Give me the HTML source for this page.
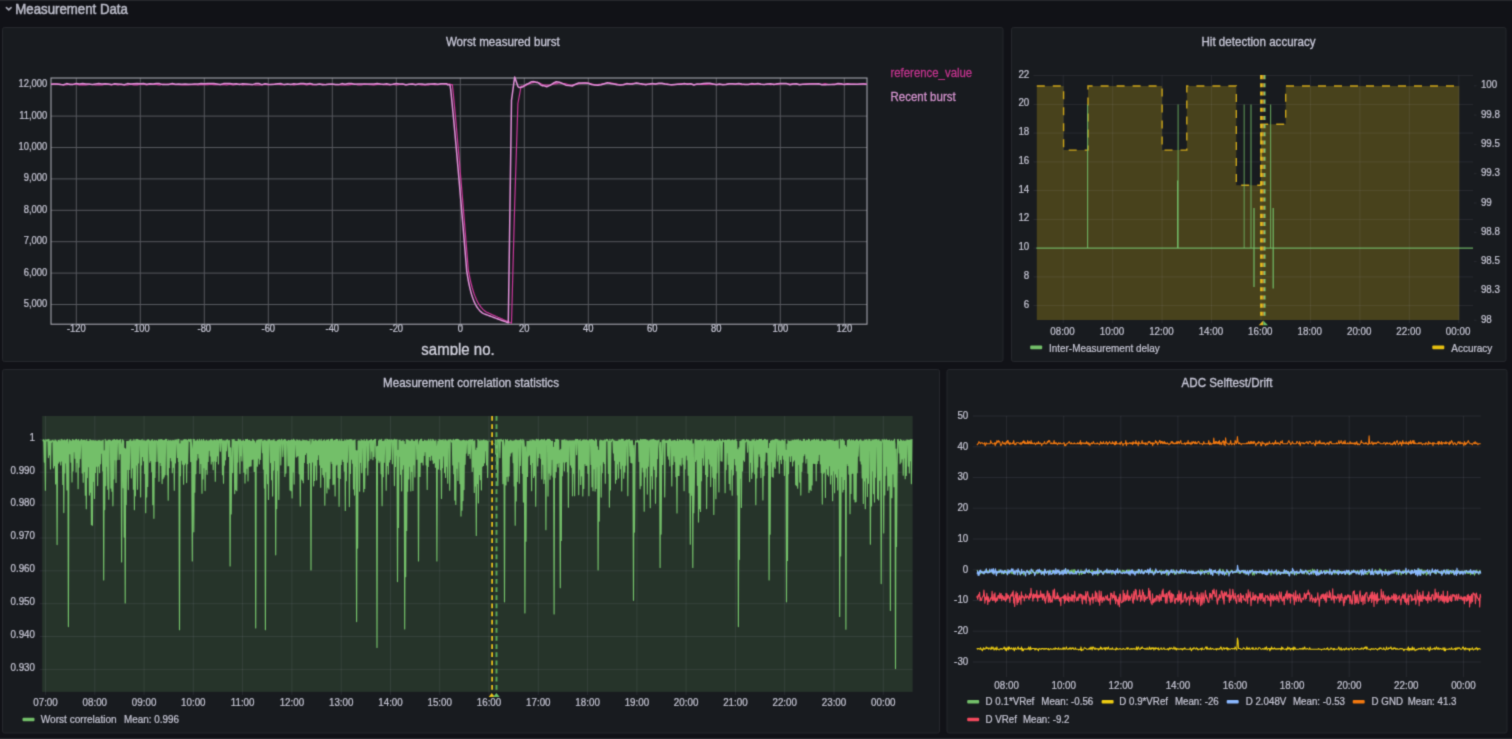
<!DOCTYPE html>
<html lang="en"><head><meta charset="utf-8"><title>Measurement Data</title>
<style>
html,body{margin:0;padding:0;background:#111217;overflow:hidden}
body{width:1512px;height:739px;font-family:"Liberation Sans", Arial, sans-serif}
svg{display:block;will-change:transform}
text{white-space:pre}
</style></head><body>
<svg width="1512" height="739" viewBox="0 0 1512 739" font-family='"Liberation Sans", Arial, sans-serif'>
<defs><filter id="soft" x="0" y="0" width="1512" height="739" filterUnits="userSpaceOnUse" color-interpolation-filters="sRGB"><feConvolveMatrix order="3" kernelMatrix="0.0256 0.1088 0.0256 0.1088 0.4624 0.1088 0.0256 0.1088 0.0256" divisor="1" edgeMode="duplicate" preserveAlpha="true"/></filter></defs>
<g filter="url(#soft)">
<rect width="1512" height="739" fill="#111217"/>
<rect x="0" y="738" width="1512" height="1" fill="#2a2c31"/>
<rect x="0" y="0" width="1512" height="1" fill="#26282d"/>
<path d="M6.4 7.6 L8.75 9.9 L11.1 7.6" fill="none" stroke="#a9aab6" stroke-width="1.6" stroke-linecap="round" stroke-linejoin="round"/>
<text transform="translate(15.3 13.9) scale(1 1.06)" font-size="13.25" text-anchor="start" fill="#bbbcc9" font-weight="normal" stroke="#bbbcc9" stroke-width="0.5">Measurement Data</text>
<rect x="2.5" y="27.5" width="1000.5" height="334" rx="2" fill="#181b1f" stroke="#25272c" stroke-width="1"/>
<rect x="1011.5" y="27.5" width="494.5" height="334" rx="2" fill="#181b1f" stroke="#25272c" stroke-width="1"/>
<rect x="2.5" y="369.5" width="937" height="363.5" rx="2" fill="#181b1f" stroke="#25272c" stroke-width="1"/>
<rect x="947" y="369.5" width="560" height="363.5" rx="2" fill="#181b1f" stroke="#25272c" stroke-width="1"/>
<text transform="translate(502.8 45.5) scale(1 1.09)" font-size="11.6" text-anchor="middle" fill="#c8c8d8" font-weight="normal" stroke="#c8c8d8" stroke-width="0.3">Worst measured burst</text>
<text transform="translate(1258.5 45.5) scale(1 1.09)" font-size="11.6" text-anchor="middle" fill="#c8c8d8" font-weight="normal" stroke="#c8c8d8" stroke-width="0.3">Hit detection accuracy</text>
<text transform="translate(471 386.5) scale(1 1.09)" font-size="11.6" text-anchor="middle" fill="#c8c8d8" font-weight="normal" stroke="#c8c8d8" stroke-width="0.3">Measurement correlation statistics</text>
<text transform="translate(1227 386.5) scale(1 1.09)" font-size="11.6" text-anchor="middle" fill="#c8c8d8" font-weight="normal" stroke="#c8c8d8" stroke-width="0.3">ADC Selftest/Drift</text>
<line x1="76.3" y1="78" x2="76.3" y2="324.2" stroke="#55575d" stroke-width="1"/>
<line x1="140.3" y1="78" x2="140.3" y2="324.2" stroke="#55575d" stroke-width="1"/>
<line x1="204.3" y1="78" x2="204.3" y2="324.2" stroke="#55575d" stroke-width="1"/>
<line x1="268.3" y1="78" x2="268.3" y2="324.2" stroke="#55575d" stroke-width="1"/>
<line x1="332.3" y1="78" x2="332.3" y2="324.2" stroke="#55575d" stroke-width="1"/>
<line x1="396.3" y1="78" x2="396.3" y2="324.2" stroke="#55575d" stroke-width="1"/>
<line x1="460.3" y1="78" x2="460.3" y2="324.2" stroke="#55575d" stroke-width="1"/>
<line x1="524.3" y1="78" x2="524.3" y2="324.2" stroke="#55575d" stroke-width="1"/>
<line x1="588.3" y1="78" x2="588.3" y2="324.2" stroke="#55575d" stroke-width="1"/>
<line x1="652.3" y1="78" x2="652.3" y2="324.2" stroke="#55575d" stroke-width="1"/>
<line x1="716.3" y1="78" x2="716.3" y2="324.2" stroke="#55575d" stroke-width="1"/>
<line x1="780.3" y1="78" x2="780.3" y2="324.2" stroke="#55575d" stroke-width="1"/>
<line x1="844.3" y1="78" x2="844.3" y2="324.2" stroke="#55575d" stroke-width="1"/>
<line x1="51" y1="304.5" x2="867" y2="304.5" stroke="#55575d" stroke-width="1"/>
<line x1="51" y1="273.1" x2="867" y2="273.1" stroke="#55575d" stroke-width="1"/>
<line x1="51" y1="241.7" x2="867" y2="241.7" stroke="#55575d" stroke-width="1"/>
<line x1="51" y1="210.3" x2="867" y2="210.3" stroke="#55575d" stroke-width="1"/>
<line x1="51" y1="178.9" x2="867" y2="178.9" stroke="#55575d" stroke-width="1"/>
<line x1="51" y1="147.5" x2="867" y2="147.5" stroke="#55575d" stroke-width="1"/>
<line x1="51" y1="116.1" x2="867" y2="116.1" stroke="#55575d" stroke-width="1"/>
<line x1="51" y1="84.7" x2="867" y2="84.7" stroke="#55575d" stroke-width="1"/>
<rect x="51" y="78" width="816" height="246.2" fill="none" stroke="#a2a3ab" stroke-width="1.1"/>
<text transform="translate(47.3 307) scale(1 1.09)" font-size="9.4" text-anchor="end" fill="#c4c4d2" font-weight="normal" stroke="#c4c4d2" stroke-width="0.22">5,000</text>
<text transform="translate(47.3 275.6) scale(1 1.09)" font-size="9.4" text-anchor="end" fill="#c4c4d2" font-weight="normal" stroke="#c4c4d2" stroke-width="0.22">6,000</text>
<text transform="translate(47.3 244.2) scale(1 1.09)" font-size="9.4" text-anchor="end" fill="#c4c4d2" font-weight="normal" stroke="#c4c4d2" stroke-width="0.22">7,000</text>
<text transform="translate(47.3 212.8) scale(1 1.09)" font-size="9.4" text-anchor="end" fill="#c4c4d2" font-weight="normal" stroke="#c4c4d2" stroke-width="0.22">8,000</text>
<text transform="translate(47.3 181.4) scale(1 1.09)" font-size="9.4" text-anchor="end" fill="#c4c4d2" font-weight="normal" stroke="#c4c4d2" stroke-width="0.22">9,000</text>
<text transform="translate(47.3 150) scale(1 1.09)" font-size="9.4" text-anchor="end" fill="#c4c4d2" font-weight="normal" stroke="#c4c4d2" stroke-width="0.22">10,000</text>
<text transform="translate(47.3 118.6) scale(1 1.09)" font-size="9.4" text-anchor="end" fill="#c4c4d2" font-weight="normal" stroke="#c4c4d2" stroke-width="0.22">11,000</text>
<text transform="translate(47.3 87.2) scale(1 1.09)" font-size="9.4" text-anchor="end" fill="#c4c4d2" font-weight="normal" stroke="#c4c4d2" stroke-width="0.22">12,000</text>
<text transform="translate(76.3 332.4) scale(1 1.09)" font-size="9.4" text-anchor="middle" fill="#c4c4d2" font-weight="normal" stroke="#c4c4d2" stroke-width="0.22">-120</text>
<line x1="76.3" y1="324.2" x2="76.3" y2="326.8" stroke="#8a8b93" stroke-width="1"/>
<text transform="translate(140.3 332.4) scale(1 1.09)" font-size="9.4" text-anchor="middle" fill="#c4c4d2" font-weight="normal" stroke="#c4c4d2" stroke-width="0.22">-100</text>
<line x1="140.3" y1="324.2" x2="140.3" y2="326.8" stroke="#8a8b93" stroke-width="1"/>
<text transform="translate(204.3 332.4) scale(1 1.09)" font-size="9.4" text-anchor="middle" fill="#c4c4d2" font-weight="normal" stroke="#c4c4d2" stroke-width="0.22">-80</text>
<line x1="204.3" y1="324.2" x2="204.3" y2="326.8" stroke="#8a8b93" stroke-width="1"/>
<text transform="translate(268.3 332.4) scale(1 1.09)" font-size="9.4" text-anchor="middle" fill="#c4c4d2" font-weight="normal" stroke="#c4c4d2" stroke-width="0.22">-60</text>
<line x1="268.3" y1="324.2" x2="268.3" y2="326.8" stroke="#8a8b93" stroke-width="1"/>
<text transform="translate(332.3 332.4) scale(1 1.09)" font-size="9.4" text-anchor="middle" fill="#c4c4d2" font-weight="normal" stroke="#c4c4d2" stroke-width="0.22">-40</text>
<line x1="332.3" y1="324.2" x2="332.3" y2="326.8" stroke="#8a8b93" stroke-width="1"/>
<text transform="translate(396.3 332.4) scale(1 1.09)" font-size="9.4" text-anchor="middle" fill="#c4c4d2" font-weight="normal" stroke="#c4c4d2" stroke-width="0.22">-20</text>
<line x1="396.3" y1="324.2" x2="396.3" y2="326.8" stroke="#8a8b93" stroke-width="1"/>
<text transform="translate(460.3 332.4) scale(1 1.09)" font-size="9.4" text-anchor="middle" fill="#c4c4d2" font-weight="normal" stroke="#c4c4d2" stroke-width="0.22">0</text>
<line x1="460.3" y1="324.2" x2="460.3" y2="326.8" stroke="#8a8b93" stroke-width="1"/>
<text transform="translate(524.3 332.4) scale(1 1.09)" font-size="9.4" text-anchor="middle" fill="#c4c4d2" font-weight="normal" stroke="#c4c4d2" stroke-width="0.22">20</text>
<line x1="524.3" y1="324.2" x2="524.3" y2="326.8" stroke="#8a8b93" stroke-width="1"/>
<text transform="translate(588.3 332.4) scale(1 1.09)" font-size="9.4" text-anchor="middle" fill="#c4c4d2" font-weight="normal" stroke="#c4c4d2" stroke-width="0.22">40</text>
<line x1="588.3" y1="324.2" x2="588.3" y2="326.8" stroke="#8a8b93" stroke-width="1"/>
<text transform="translate(652.3 332.4) scale(1 1.09)" font-size="9.4" text-anchor="middle" fill="#c4c4d2" font-weight="normal" stroke="#c4c4d2" stroke-width="0.22">60</text>
<line x1="652.3" y1="324.2" x2="652.3" y2="326.8" stroke="#8a8b93" stroke-width="1"/>
<text transform="translate(716.3 332.4) scale(1 1.09)" font-size="9.4" text-anchor="middle" fill="#c4c4d2" font-weight="normal" stroke="#c4c4d2" stroke-width="0.22">80</text>
<line x1="716.3" y1="324.2" x2="716.3" y2="326.8" stroke="#8a8b93" stroke-width="1"/>
<text transform="translate(780.3 332.4) scale(1 1.09)" font-size="9.4" text-anchor="middle" fill="#c4c4d2" font-weight="normal" stroke="#c4c4d2" stroke-width="0.22">100</text>
<line x1="780.3" y1="324.2" x2="780.3" y2="326.8" stroke="#8a8b93" stroke-width="1"/>
<text transform="translate(844.3 332.4) scale(1 1.09)" font-size="9.4" text-anchor="middle" fill="#c4c4d2" font-weight="normal" stroke="#c4c4d2" stroke-width="0.22">120</text>
<line x1="844.3" y1="324.2" x2="844.3" y2="326.8" stroke="#8a8b93" stroke-width="1"/>
<clipPath id="c1"><rect x="400" y="338" width="120" height="17.2"/></clipPath>
<g clip-path="url(#c1)">
<text transform="translate(458 355) scale(1 1.04)" font-size="15" text-anchor="middle" fill="#d2d2de" font-weight="normal" stroke="#d2d2de" stroke-width="0.3">sample no.</text>
</g>
<clipPath id="cp1"><rect x="51" y="76" width="816" height="248.2"/></clipPath>
<path d="M50.7 84.2 L53.9 84.1 L57.1 84.3 L60.3 84.1 L63.5 85 L66.7 84.6 L69.9 84.1 L73.1 84.4 L76.3 84.1 L79.5 84.9 L82.7 84.6 L85.9 84.8 L89.1 84.5 L92.3 84.5 L95.5 85 L98.7 84.8 L101.9 84.8 L105.1 84.1 L108.3 84.3 L111.5 84.9 L114.7 84.2 L117.9 84.9 L121.1 84.4 L124.3 84.9 L127.5 85 L130.7 84.2 L133.9 84.8 L137.1 84.8 L140.3 84.1 L143.5 84.2 L146.7 84.8 L149.9 84.1 L153.1 84.5 L156.3 84.4 L159.5 84.8 L162.7 84.1 L165.9 84.4 L169.1 84.1 L172.3 84.1 L175.5 84.7 L178.7 84.7 L181.9 84.9 L185.1 84.9 L188.3 85 L191.5 84.7 L194.7 84.4 L197.9 85 L201.1 84.4 L204.3 84.7 L207.5 84.7 L210.7 84.2 L213.9 84.6 L217.1 84.7 L220.3 84.6 L223.5 84.3 L226.7 85 L229.9 84.1 L233.1 85 L236.3 84.3 L239.5 84.2 L242.7 85 L245.9 84.3 L249.1 84.7 L252.3 84.5 L255.5 85 L258.7 85 L261.9 84.9 L265.1 84.1 L268.3 84.8 L271.5 84.3 L274.7 84.1 L277.9 84.1 L281.1 84.7 L284.3 84.7 L287.5 84.5 L290.7 84.3 L293.9 84.9 L297.1 84.3 L300.3 84.2 L303.5 84.2 L306.7 85 L309.9 84.1 L313.1 85 L316.3 84.7 L319.5 84.4 L322.7 84.1 L325.9 84.7 L329.1 84.1 L332.3 84.5 L335.5 84.7 L338.7 84.7 L341.9 84.9 L345.1 85 L348.3 84.9 L351.5 84.4 L354.7 84 L357.9 84.9 L361.1 85 L364.3 84.1 L367.5 84.5 L370.7 84.6 L373.9 84.8 L377.1 84.4 L380.3 84.2 L383.5 84.6 L386.7 84.6 L389.9 85 L393.1 84.1 L396.3 85 L399.5 84.5 L402.7 84.2 L405.9 84.9 L409.1 84.3 L412.3 84.1 L415.5 84.4 L418.7 84.3 L421.9 84.9 L425.1 84.6 L428.3 84.9 L431.5 84.2 L434.7 84.7 L437.9 84.6 L441.1 84 L441.9 84 L442.7 84 L443.5 84 L444.3 84.2 L445.1 84.2 L445.9 84.2 L446.7 84.2 L447.5 84.1 L448.3 84.1 L449.1 84.1 L449.9 84.1 L450.7 84.6 L451.5 84.6 L452.3 84.6 L453.1 91.8 L453.9 100 L454.7 108.4 L455.5 117.1 L456.3 126 L457.1 135 L457.9 144.2 L458.7 153.4 L459.5 162.8 L460.3 172.2 L461.1 181.7 L461.9 191.2 L462.7 200.9 L463.5 210.6 L464.3 220.3 L465.1 230.1 L465.9 240 L466.7 249.9 L467.5 259.8 L468.3 269.8 L469.1 274.2 L469.9 278.2 L470.7 281.8 L471.5 285 L472.3 288 L473.1 290.7 L473.9 293.2 L474.7 295.4 L475.5 297.4 L476.3 299.3 L477.1 301 L477.9 302.5 L478.7 303.9 L479.5 305.1 L480.3 306.2 L481.1 307.3 L481.9 308.2 L482.7 309.1 L483.5 309.9 L484.3 310.6 L485.1 311.2 L485.9 311.8 L486.7 312.2 L487.5 312.6 L488.3 312.9 L489.1 313.3 L489.9 313.6 L490.7 314 L491.5 314.4 L492.3 314.7 L493.1 315.1 L493.9 315.4 L494.7 315.8 L495.5 316.1 L496.3 316.5 L497.1 316.8 L497.9 317.2 L498.7 317.5 L499.5 317.9 L500.3 318.2 L501.1 318.6 L501.9 318.9 L502.7 319.3 L503.5 319.7 L504.3 320 L505.1 320.4 L505.9 320.7 L506.7 321.1 L507.5 321.4 L508.3 321.8 L509.1 322.1 L509.9 322.5 L510.7 322.8 L511.5 323.2 L512.3 293.4 L513.1 263.6 L513.9 233.8 L514.7 204 L515.5 178.9 L516.3 153.8 L517.1 128.7 L517.9 103.5 L518.7 99.2 L519.5 94.9 L520.3 90.5 L521.1 86.2 L521.9 86 L522.7 86 L523.5 85.9 L524.3 86.1 L525.1 85.9 L525.9 85.5 L526.7 85.2 L527.5 84.4 L528.3 84 L529.1 83.6 L529.9 83.2 L530.7 83.3 L531.5 83 L532.3 82.7 L533.1 82.6 L533.9 82.2 L534.7 82.2 L535.5 82.2 L536.3 82.4 L537.1 82.3 L537.9 82.5 L538.7 82.8 L539.5 83.1 L540.3 83.5 L541.1 83.9 L541.9 84.2 L542.7 84.5 L543.5 85.2 L546.7 85.2 L549.9 85.2 L553.1 84.2 L556.3 83.7 L559.5 82.6 L562.7 83.3 L565.9 83.8 L569.1 85 L572.3 84.9 L575.5 84.7 L578.7 83.7 L581.9 83.4 L585.1 82.9 L588.3 83.2 L591.5 83.9 L594.7 84.9 L597.9 84.6 L601.1 84.2 L604.3 83.7 L607.5 83 L610.7 82.9 L613.9 83.7 L617.1 84.2 L620.3 85 L623.5 84.3 L626.7 83.9 L629.9 83.9 L633.1 83.4 L636.3 83.4 L639.5 83.7 L642.7 84.6 L645.9 84.2 L649.1 84.4 L652.3 84 L655.5 83.9 L658.7 83.6 L661.9 83.5 L665.1 83.9 L668.3 84.1 L671.5 84.9 L674.7 84.7 L677.9 84.2 L681.1 83.7 L684.3 84.1 L687.5 83.7 L690.7 83.9 L693.9 84.7 L697.1 84.3 L700.3 84.5 L703.5 84.5 L706.7 84.3 L709.9 84 L713.1 84.3 L716.3 84.4 L719.5 84.7 L722.7 84.3 L725.9 84.3 L729.1 83.9 L732.3 83.8 L735.5 84.2 L738.7 83.6 L741.9 84.6 L745.1 84.3 L748.3 84.4 L751.5 84.2 L754.7 84.4 L757.9 83.6 L761.1 84.1 L764.3 84.5 L767.5 84 L770.7 84.6 L773.9 84.1 L777.1 84.3 L780.3 83.9 L783.5 83.5 L786.7 83.7 L789.9 84.1 L793.1 83.8 L796.3 84 L799.5 84.3 L802.7 84.4 L805.9 83.9 L809.1 83.9 L812.3 83.6 L815.5 83.6 L818.7 84 L821.9 84.3 L825.1 83.7 L828.3 84.6 L831.5 84.4 L834.7 84 L837.9 83.9 L841.1 84.4 L844.3 84 L847.5 83.7 L850.7 84.2 L853.9 84.1 L857.1 84.3 L860.3 84.3 L863.5 83.6 L866.7 84.2" fill="none" stroke="#c8379a" stroke-width="1.2" stroke-linejoin="round" clip-path="url(#cp1)"/>
<path d="M50.7 84.2 L53.9 83.9 L57.1 83.9 L60.3 84.6 L63.5 84.7 L66.7 83.6 L69.9 84.4 L73.1 84.4 L76.3 83.4 L79.5 84.1 L82.7 83.6 L85.9 84.1 L89.1 83.9 L92.3 84.5 L95.5 83.9 L98.7 83.6 L101.9 84 L105.1 83.8 L108.3 83.9 L111.5 84.6 L114.7 83.7 L117.9 84 L121.1 84.3 L124.3 84.7 L127.5 83.6 L130.7 84.1 L133.9 83.8 L137.1 83.6 L140.3 83.8 L143.5 83.5 L146.7 84.2 L149.9 83.7 L153.1 84.1 L156.3 83.5 L159.5 83.6 L162.7 84.6 L165.9 84.5 L169.1 84.4 L172.3 83.5 L175.5 84.2 L178.7 83.9 L181.9 84.3 L185.1 84.1 L188.3 84.2 L191.5 84.3 L194.7 84 L197.9 84 L201.1 83.6 L204.3 83.8 L207.5 83.5 L210.7 83.6 L213.9 83.5 L217.1 83.9 L220.3 84.5 L223.5 83.6 L226.7 83.5 L229.9 83.6 L233.1 84 L236.3 83.8 L239.5 84.4 L242.7 83.7 L245.9 84 L249.1 84.3 L252.3 84.6 L255.5 83.6 L258.7 83.5 L261.9 84.6 L265.1 83.7 L268.3 84.2 L271.5 84.5 L274.7 84.3 L277.9 83.7 L281.1 83.6 L284.3 84.6 L287.5 83.9 L290.7 84.6 L293.9 83.8 L297.1 84.3 L300.3 83.6 L303.5 83.5 L306.7 84.1 L309.9 83.4 L313.1 84.3 L316.3 84.6 L319.5 83.9 L322.7 84.7 L325.9 84.5 L329.1 84.2 L332.3 83.9 L335.5 84.5 L338.7 84.6 L341.9 83.6 L345.1 84.3 L348.3 83.5 L351.5 83.6 L354.7 84.2 L357.9 84.1 L361.1 84 L364.3 83.9 L367.5 84 L370.7 84 L373.9 83.9 L377.1 83.5 L380.3 84.1 L383.5 84.2 L386.7 83.8 L389.9 84.4 L393.1 84.3 L396.3 83.5 L399.5 84 L402.7 84 L405.9 84.7 L409.1 84.2 L412.3 84 L415.5 84.7 L418.7 83.9 L421.9 83.9 L425.1 84.6 L428.3 83.9 L431.5 84.1 L434.7 83.8 L437.9 84.3 L441.1 83.8 L441.9 83.8 L442.7 83.8 L443.5 83.8 L444.3 83.8 L445.1 83.8 L445.9 83.8 L446.7 83.8 L447.5 84.7 L448.3 84.7 L449.1 84.7 L449.9 84.7 L450.7 89.6 L451.5 97.4 L452.3 105.5 L453.1 113.9 L453.9 122.4 L454.7 131.1 L455.5 139.9 L456.3 148.8 L457.1 157.9 L457.9 167 L458.7 176.1 L459.5 185.4 L460.3 194.7 L461.1 204 L461.9 213.4 L462.7 222.9 L463.5 232.4 L464.3 242 L465.1 251.6 L465.9 261.2 L466.7 270.9 L467.5 276 L468.3 280.5 L469.1 284.5 L469.9 288.1 L470.7 291.3 L471.5 294.2 L472.3 296.7 L473.1 299 L473.9 301.1 L474.7 302.9 L475.5 304.5 L476.3 306 L477.1 307.3 L477.9 308.4 L478.7 309.4 L479.5 310.4 L480.3 311.2 L481.1 311.9 L481.9 312.6 L482.7 313.1 L483.5 313.6 L484.3 313.9 L485.1 314.2 L485.9 314.5 L486.7 314.8 L487.5 315.1 L488.3 315.4 L489.1 315.7 L489.9 316 L490.7 316.3 L491.5 316.6 L492.3 316.9 L493.1 317.2 L493.9 317.5 L494.7 317.8 L495.5 318.1 L496.3 318.4 L497.1 318.7 L497.9 319 L498.7 319.3 L499.5 319.6 L500.3 319.9 L501.1 320.2 L501.9 320.5 L502.7 320.7 L503.5 321 L504.3 321.3 L505.1 321.6 L505.9 321.9 L506.7 322.2 L507.5 322.5 L508.3 322.8 L509.1 267.2 L509.9 211.6 L510.7 156 L511.5 100.4 L512.3 94.5 L513.1 88.6 L513.9 82.7 L514.7 76.9 L515.5 79.3 L516.3 81.7 L517.1 84.1 L517.9 86.5 L518.7 87.2 L519.5 87.5 L520.3 87.6 L521.1 87.3 L521.9 87.1 L522.7 86.9 L523.5 86.5 L524.3 85.7 L525.1 85.2 L525.9 84.6 L526.7 84.1 L527.5 84.2 L528.3 83.7 L529.1 83.2 L529.9 82.7 L530.7 82.1 L531.5 81.8 L532.3 81.7 L533.1 81.6 L533.9 81.7 L534.7 81.8 L535.5 82.1 L536.3 82.4 L537.1 82.2 L537.9 82.7 L538.7 83.2 L539.5 83.7 L540.3 84.6 L541.1 85.1 L541.9 85.5 L542.7 85.9 L543.5 85.6 L546.7 86.7 L549.9 85.4 L553.1 83.3 L556.3 81.8 L559.5 82.3 L562.7 83.6 L565.9 85.2 L569.1 85.6 L572.3 86 L575.5 84.2 L578.7 83 L581.9 83.1 L585.1 83.1 L588.3 83.3 L591.5 84.5 L594.7 84.9 L597.9 85.3 L601.1 84.8 L604.3 83.7 L607.5 82.7 L610.7 83.5 L613.9 84.1 L617.1 84.8 L620.3 85.1 L623.5 84.8 L626.7 83.6 L629.9 84 L633.1 83.9 L636.3 83 L639.5 83.6 L642.7 84 L645.9 84.8 L649.1 83.9 L652.3 83.5 L655.5 84 L658.7 83.2 L661.9 83.3 L665.1 84 L668.3 84.5 L671.5 84.8 L674.7 84.5 L677.9 84.3 L681.1 84.2 L684.3 83.6 L687.5 84.2 L690.7 83.8 L693.9 85 L697.1 83.9 L700.3 83.9 L703.5 83.4 L706.7 83.3 L709.9 83.3 L713.1 83.9 L716.3 84.8 L719.5 84 L722.7 84.7 L725.9 84.4 L729.1 83.7 L732.3 83.8 L735.5 84 L738.7 83.5 L741.9 84.1 L745.1 84.5 L748.3 84.5 L751.5 83.6 L754.7 84 L757.9 83.6 L761.1 84.2 L764.3 84.5 L767.5 84.1 L770.7 83.8 L773.9 84.6 L777.1 83.7 L780.3 83.4 L783.5 83.6 L786.7 83.6 L789.9 84.7 L793.1 84 L796.3 83.7 L799.5 84.7 L802.7 84.3 L805.9 84.3 L809.1 84 L812.3 84.1 L815.5 84.1 L818.7 83.8 L821.9 84.8 L825.1 84.7 L828.3 84.5 L831.5 84.5 L834.7 84.6 L837.9 83.5 L841.1 83.7 L844.3 84.6 L847.5 84.1 L850.7 84.3 L853.9 84.3 L857.1 84.2 L860.3 83.9 L863.5 84 L866.7 84.3" fill="none" stroke="#de8fd6" stroke-width="1.5" stroke-linejoin="round" clip-path="url(#cp1)"/>
<text transform="translate(890.5 76.9) scale(1 1.1)" font-size="11.4" text-anchor="start" fill="#c4348f" font-weight="normal" stroke="#c4348f" stroke-width="0.25">reference_value</text>
<text transform="translate(890.5 101.4) scale(1 1.1)" font-size="11.5" text-anchor="start" fill="#d694d0" font-weight="normal" stroke="#d694d0" stroke-width="0.25">Recent burst</text>
<path d="M1036.8 320 L1036.8 86 L1063.6 86 L1063.6 150.1 L1088 150.1 L1088 86 L1162.1 86 L1162.1 150.1 L1186.8 150.1 L1186.8 86 L1236.3 86 L1236.3 185.2 L1261 185.2 L1261 124.2 L1285.7 124.2 L1285.7 86 L1459.3 86 L1459.3 320 Z" fill="#48421c"/>
<line x1="1033.5" y1="305.6" x2="1473" y2="305.6" stroke="rgba(204,204,220,0.09)" stroke-width="1"/>
<line x1="1033.5" y1="276.9" x2="1473" y2="276.9" stroke="rgba(204,204,220,0.09)" stroke-width="1"/>
<line x1="1033.5" y1="248.1" x2="1473" y2="248.1" stroke="rgba(204,204,220,0.09)" stroke-width="1"/>
<line x1="1033.5" y1="219.4" x2="1473" y2="219.4" stroke="rgba(204,204,220,0.09)" stroke-width="1"/>
<line x1="1033.5" y1="190.6" x2="1473" y2="190.6" stroke="rgba(204,204,220,0.09)" stroke-width="1"/>
<line x1="1033.5" y1="161.9" x2="1473" y2="161.9" stroke="rgba(204,204,220,0.09)" stroke-width="1"/>
<line x1="1033.5" y1="133.1" x2="1473" y2="133.1" stroke="rgba(204,204,220,0.09)" stroke-width="1"/>
<line x1="1033.5" y1="104.4" x2="1473" y2="104.4" stroke="rgba(204,204,220,0.09)" stroke-width="1"/>
<line x1="1033.5" y1="75.6" x2="1473" y2="75.6" stroke="rgba(204,204,220,0.09)" stroke-width="1"/>
<line x1="1063.2" y1="75.5" x2="1063.2" y2="323" stroke="rgba(204,204,220,0.09)" stroke-width="1"/>
<line x1="1112.7" y1="75.5" x2="1112.7" y2="323" stroke="rgba(204,204,220,0.09)" stroke-width="1"/>
<line x1="1162.1" y1="75.5" x2="1162.1" y2="323" stroke="rgba(204,204,220,0.09)" stroke-width="1"/>
<line x1="1211.6" y1="75.5" x2="1211.6" y2="323" stroke="rgba(204,204,220,0.09)" stroke-width="1"/>
<line x1="1261" y1="75.5" x2="1261" y2="323" stroke="rgba(204,204,220,0.09)" stroke-width="1"/>
<line x1="1310.4" y1="75.5" x2="1310.4" y2="323" stroke="rgba(204,204,220,0.09)" stroke-width="1"/>
<line x1="1359.9" y1="75.5" x2="1359.9" y2="323" stroke="rgba(204,204,220,0.09)" stroke-width="1"/>
<line x1="1409.3" y1="75.5" x2="1409.3" y2="323" stroke="rgba(204,204,220,0.09)" stroke-width="1"/>
<line x1="1458.8" y1="75.5" x2="1458.8" y2="323" stroke="rgba(204,204,220,0.09)" stroke-width="1"/>
<path d="M1036.8 86 L1063.6 86 L1063.6 150.1 L1088 150.1 L1088 86 L1162.1 86 L1162.1 150.1 L1186.8 150.1 L1186.8 86 L1236.3 86 L1236.3 185.2 L1261 185.2 L1261 124.2 L1285.7 124.2 L1285.7 86 L1459.3 86" fill="none" stroke="#c9a31a" stroke-width="1.4" stroke-dasharray="8 8"/>
<line x1="1036.3" y1="248.1" x2="1473" y2="248.1" stroke="#73BF69" stroke-width="1.3" opacity="0.85"/>
<line x1="1087.6" y1="104.4" x2="1087.6" y2="248.1" stroke="#73BF69" stroke-width="1.15" opacity="0.85"/>
<line x1="1178.1" y1="104.4" x2="1178.1" y2="248.1" stroke="#73BF69" stroke-width="1.0" opacity="0.8"/>
<line x1="1177.6" y1="180.6" x2="1177.6" y2="248.1" stroke="#73BF69" stroke-width="1.2" opacity="0.9"/>
<line x1="1244.2" y1="104.4" x2="1244.2" y2="248.1" stroke="#73BF69" stroke-width="1.3" opacity="0.6"/>
<line x1="1251" y1="104.4" x2="1251" y2="248.1" stroke="#73BF69" stroke-width="1.1" opacity="0.8"/>
<line x1="1254" y1="207.9" x2="1254" y2="286.9" stroke="#73BF69" stroke-width="1.3" opacity="0.9"/>
<line x1="1270.6" y1="104.4" x2="1270.6" y2="248.1" stroke="#73BF69" stroke-width="1.1" opacity="0.8"/>
<line x1="1273.2" y1="207.9" x2="1273.2" y2="288.4" stroke="#73BF69" stroke-width="1.3" opacity="0.9"/>
<line x1="1261.45" y1="75.1" x2="1261.45" y2="320" stroke="#e2bb1c" stroke-width="2.7" stroke-dasharray="4.1 4.06"/>
<line x1="1263.3" y1="75.1" x2="1263.3" y2="320" stroke="#e0903a" stroke-width="1.1" stroke-dasharray="4.1 4.06"/>
<line x1="1264.65" y1="75.1" x2="1264.65" y2="320" stroke="#7fc672" stroke-width="1.7" stroke-dasharray="4.1 4.06"/>
<path d="M1258.7 325.2 L1263.3 320.5 L1263.3 325.2 Z" fill="#e2b420"/>
<path d="M1263.3 325.2 L1263.3 320.5 L1267.9 325.2 Z" fill="#6cc068"/>
<text transform="translate(1029.3 307.5) scale(1 1.09)" font-size="9.8" text-anchor="end" fill="#c4c4d2" font-weight="normal" stroke="#c4c4d2" stroke-width="0.22">6</text>
<text transform="translate(1029.3 278.8) scale(1 1.09)" font-size="9.8" text-anchor="end" fill="#c4c4d2" font-weight="normal" stroke="#c4c4d2" stroke-width="0.22">8</text>
<text transform="translate(1029.3 250) scale(1 1.09)" font-size="9.8" text-anchor="end" fill="#c4c4d2" font-weight="normal" stroke="#c4c4d2" stroke-width="0.22">10</text>
<text transform="translate(1029.3 221.3) scale(1 1.09)" font-size="9.8" text-anchor="end" fill="#c4c4d2" font-weight="normal" stroke="#c4c4d2" stroke-width="0.22">12</text>
<text transform="translate(1029.3 192.5) scale(1 1.09)" font-size="9.8" text-anchor="end" fill="#c4c4d2" font-weight="normal" stroke="#c4c4d2" stroke-width="0.22">14</text>
<text transform="translate(1029.3 163.8) scale(1 1.09)" font-size="9.8" text-anchor="end" fill="#c4c4d2" font-weight="normal" stroke="#c4c4d2" stroke-width="0.22">16</text>
<text transform="translate(1029.3 135) scale(1 1.09)" font-size="9.8" text-anchor="end" fill="#c4c4d2" font-weight="normal" stroke="#c4c4d2" stroke-width="0.22">18</text>
<text transform="translate(1029.3 106.3) scale(1 1.09)" font-size="9.8" text-anchor="end" fill="#c4c4d2" font-weight="normal" stroke="#c4c4d2" stroke-width="0.22">20</text>
<text transform="translate(1029.3 77.5) scale(1 1.09)" font-size="9.8" text-anchor="end" fill="#c4c4d2" font-weight="normal" stroke="#c4c4d2" stroke-width="0.22">22</text>
<text transform="translate(1480.9 88.3) scale(1 1.09)" font-size="9.8" text-anchor="start" fill="#c4c4d2" font-weight="normal" stroke="#c4c4d2" stroke-width="0.22">100</text>
<line x1="1474" y1="85.8" x2="1476.5" y2="85.8" stroke="rgba(204,204,220,0.09)" stroke-width="1"/>
<text transform="translate(1480.9 117.6) scale(1 1.09)" font-size="9.8" text-anchor="start" fill="#c4c4d2" font-weight="normal" stroke="#c4c4d2" stroke-width="0.22">99.8</text>
<line x1="1474" y1="115.1" x2="1476.5" y2="115.1" stroke="rgba(204,204,220,0.09)" stroke-width="1"/>
<text transform="translate(1480.9 146.9) scale(1 1.09)" font-size="9.8" text-anchor="start" fill="#c4c4d2" font-weight="normal" stroke="#c4c4d2" stroke-width="0.22">99.5</text>
<line x1="1474" y1="144.4" x2="1476.5" y2="144.4" stroke="rgba(204,204,220,0.09)" stroke-width="1"/>
<text transform="translate(1480.9 176.2) scale(1 1.09)" font-size="9.8" text-anchor="start" fill="#c4c4d2" font-weight="normal" stroke="#c4c4d2" stroke-width="0.22">99.3</text>
<line x1="1474" y1="173.7" x2="1476.5" y2="173.7" stroke="rgba(204,204,220,0.09)" stroke-width="1"/>
<text transform="translate(1480.9 205.5) scale(1 1.09)" font-size="9.8" text-anchor="start" fill="#c4c4d2" font-weight="normal" stroke="#c4c4d2" stroke-width="0.22">99</text>
<line x1="1474" y1="203" x2="1476.5" y2="203" stroke="rgba(204,204,220,0.09)" stroke-width="1"/>
<text transform="translate(1480.9 234.8) scale(1 1.09)" font-size="9.8" text-anchor="start" fill="#c4c4d2" font-weight="normal" stroke="#c4c4d2" stroke-width="0.22">98.8</text>
<line x1="1474" y1="232.3" x2="1476.5" y2="232.3" stroke="rgba(204,204,220,0.09)" stroke-width="1"/>
<text transform="translate(1480.9 264.1) scale(1 1.09)" font-size="9.8" text-anchor="start" fill="#c4c4d2" font-weight="normal" stroke="#c4c4d2" stroke-width="0.22">98.5</text>
<line x1="1474" y1="261.6" x2="1476.5" y2="261.6" stroke="rgba(204,204,220,0.09)" stroke-width="1"/>
<text transform="translate(1480.9 293.4) scale(1 1.09)" font-size="9.8" text-anchor="start" fill="#c4c4d2" font-weight="normal" stroke="#c4c4d2" stroke-width="0.22">98.3</text>
<line x1="1474" y1="290.9" x2="1476.5" y2="290.9" stroke="rgba(204,204,220,0.09)" stroke-width="1"/>
<text transform="translate(1480.9 322.7) scale(1 1.09)" font-size="9.8" text-anchor="start" fill="#c4c4d2" font-weight="normal" stroke="#c4c4d2" stroke-width="0.22">98</text>
<line x1="1474" y1="320.2" x2="1476.5" y2="320.2" stroke="rgba(204,204,220,0.09)" stroke-width="1"/>
<text transform="translate(1062.5 334.5) scale(1 1.09)" font-size="9.8" text-anchor="middle" fill="#c4c4d2" font-weight="normal" stroke="#c4c4d2" stroke-width="0.22">08:00</text>
<text transform="translate(1112 334.5) scale(1 1.09)" font-size="9.8" text-anchor="middle" fill="#c4c4d2" font-weight="normal" stroke="#c4c4d2" stroke-width="0.22">10:00</text>
<text transform="translate(1161.4 334.5) scale(1 1.09)" font-size="9.8" text-anchor="middle" fill="#c4c4d2" font-weight="normal" stroke="#c4c4d2" stroke-width="0.22">12:00</text>
<text transform="translate(1210.9 334.5) scale(1 1.09)" font-size="9.8" text-anchor="middle" fill="#c4c4d2" font-weight="normal" stroke="#c4c4d2" stroke-width="0.22">14:00</text>
<text transform="translate(1260.3 334.5) scale(1 1.09)" font-size="9.8" text-anchor="middle" fill="#c4c4d2" font-weight="normal" stroke="#c4c4d2" stroke-width="0.22">16:00</text>
<text transform="translate(1309.7 334.5) scale(1 1.09)" font-size="9.8" text-anchor="middle" fill="#c4c4d2" font-weight="normal" stroke="#c4c4d2" stroke-width="0.22">18:00</text>
<text transform="translate(1359.2 334.5) scale(1 1.09)" font-size="9.8" text-anchor="middle" fill="#c4c4d2" font-weight="normal" stroke="#c4c4d2" stroke-width="0.22">20:00</text>
<text transform="translate(1408.6 334.5) scale(1 1.09)" font-size="9.8" text-anchor="middle" fill="#c4c4d2" font-weight="normal" stroke="#c4c4d2" stroke-width="0.22">22:00</text>
<text transform="translate(1458.1 334.5) scale(1 1.09)" font-size="9.8" text-anchor="middle" fill="#c4c4d2" font-weight="normal" stroke="#c4c4d2" stroke-width="0.22">00:00</text>
<rect x="1030.2" y="345.6" width="12" height="3.6" rx="1" fill="#73BF69"/>
<text transform="translate(1048.9 351.7) scale(1 1.09)" font-size="10" text-anchor="start" fill="#c4c4d2" font-weight="normal" stroke="#c4c4d2" stroke-width="0.22">Inter-Measurement delay</text>
<rect x="1432.3" y="345.6" width="12" height="3.6" rx="1" fill="#e6bf10"/>
<text transform="translate(1492.3 351.7) scale(1 1.09)" font-size="10" text-anchor="end" fill="#c4c4d2" font-weight="normal" stroke="#c4c4d2" stroke-width="0.22">Accuracy</text>
<rect x="42.2" y="416" width="870.4" height="275.9" fill="#26342a"/>
<line x1="39.7" y1="439.4" x2="912.6" y2="439.4" stroke="rgba(204,204,220,0.09)" stroke-width="1"/>
<line x1="39.7" y1="472.2" x2="912.6" y2="472.2" stroke="rgba(204,204,220,0.09)" stroke-width="1"/>
<line x1="39.7" y1="505.1" x2="912.6" y2="505.1" stroke="rgba(204,204,220,0.09)" stroke-width="1"/>
<line x1="39.7" y1="538" x2="912.6" y2="538" stroke="rgba(204,204,220,0.09)" stroke-width="1"/>
<line x1="39.7" y1="570.8" x2="912.6" y2="570.8" stroke="rgba(204,204,220,0.09)" stroke-width="1"/>
<line x1="39.7" y1="603.7" x2="912.6" y2="603.7" stroke="rgba(204,204,220,0.09)" stroke-width="1"/>
<line x1="39.7" y1="636.5" x2="912.6" y2="636.5" stroke="rgba(204,204,220,0.09)" stroke-width="1"/>
<line x1="39.7" y1="669.4" x2="912.6" y2="669.4" stroke="rgba(204,204,220,0.09)" stroke-width="1"/>
<line x1="45.5" y1="416" x2="45.5" y2="694.9" stroke="rgba(204,204,220,0.09)" stroke-width="1"/>
<line x1="94.8" y1="416" x2="94.8" y2="694.9" stroke="rgba(204,204,220,0.09)" stroke-width="1"/>
<line x1="144.1" y1="416" x2="144.1" y2="694.9" stroke="rgba(204,204,220,0.09)" stroke-width="1"/>
<line x1="193.3" y1="416" x2="193.3" y2="694.9" stroke="rgba(204,204,220,0.09)" stroke-width="1"/>
<line x1="242.6" y1="416" x2="242.6" y2="694.9" stroke="rgba(204,204,220,0.09)" stroke-width="1"/>
<line x1="291.9" y1="416" x2="291.9" y2="694.9" stroke="rgba(204,204,220,0.09)" stroke-width="1"/>
<line x1="341.2" y1="416" x2="341.2" y2="694.9" stroke="rgba(204,204,220,0.09)" stroke-width="1"/>
<line x1="390.5" y1="416" x2="390.5" y2="694.9" stroke="rgba(204,204,220,0.09)" stroke-width="1"/>
<line x1="439.7" y1="416" x2="439.7" y2="694.9" stroke="rgba(204,204,220,0.09)" stroke-width="1"/>
<line x1="489" y1="416" x2="489" y2="694.9" stroke="rgba(204,204,220,0.09)" stroke-width="1"/>
<line x1="538.3" y1="416" x2="538.3" y2="694.9" stroke="rgba(204,204,220,0.09)" stroke-width="1"/>
<line x1="587.6" y1="416" x2="587.6" y2="694.9" stroke="rgba(204,204,220,0.09)" stroke-width="1"/>
<line x1="636.9" y1="416" x2="636.9" y2="694.9" stroke="rgba(204,204,220,0.09)" stroke-width="1"/>
<line x1="686.1" y1="416" x2="686.1" y2="694.9" stroke="rgba(204,204,220,0.09)" stroke-width="1"/>
<line x1="735.4" y1="416" x2="735.4" y2="694.9" stroke="rgba(204,204,220,0.09)" stroke-width="1"/>
<line x1="784.7" y1="416" x2="784.7" y2="694.9" stroke="rgba(204,204,220,0.09)" stroke-width="1"/>
<line x1="834" y1="416" x2="834" y2="694.9" stroke="rgba(204,204,220,0.09)" stroke-width="1"/>
<line x1="883.3" y1="416" x2="883.3" y2="694.9" stroke="rgba(204,204,220,0.09)" stroke-width="1"/>
<path d="M42.8 439.8 L43.3 440.9 L43.8 439.7 L44.3 462.1 L44.8 440.7 L45.4 490.3 L45.9 439.5 L46.4 441 L46.9 440.8 L47.4 440.1 L47.9 439.7 L48.4 457.6 L48.9 439.4 L49.5 454.8 L50 441 L50.5 469 L51 440.9 L51.5 442.2 L52 440.7 L52.5 440.5 L53 440.2 L53.5 468 L54.1 441 L54.6 465.6 L55.1 439.8 L55.6 483.9 L56.1 440.6 L56.6 442.2 L57.1 544.6 L57.6 442.6 L58.2 440.5 L58.7 463.1 L59.2 440 L59.7 461.2 L60.2 441 L60.7 464.9 L61.2 439.4 L61.7 461 L62.2 439.9 L62.8 484.5 L63.3 440.5 L63.8 512.6 L64.3 439.9 L64.8 472.9 L65.3 440.7 L65.8 463 L66.3 440 L66.9 489.9 L67.4 439.3 L67.9 446.8 L68.4 626.6 L68.9 442.5 L69.4 439.7 L69.9 453.8 L70.4 440.6 L71 462.2 L71.5 441 L72 482 L72.5 439.5 L73 471 L73.5 440.1 L74 451.7 L74.5 440.5 L75 458.3 L75.6 439.7 L76.1 472 L76.6 439.3 L77.1 462.5 L77.6 440.6 L78.1 488.7 L78.6 439.5 L79.1 467.1 L79.7 441 L80.2 458.6 L80.7 440.7 L81.2 439.8 L81.7 439.5 L82.2 472.9 L82.7 440.5 L83.2 482.3 L83.7 440.2 L84.3 471.7 L84.8 440.1 L85.3 495.2 L85.8 440.9 L86.3 508.8 L86.8 439.5 L87.3 477.6 L87.8 441.3 L88.4 466.6 L88.9 441.2 L89.4 495.1 L89.9 439.5 L90.4 492.1 L90.9 440.3 L91.4 524.7 L91.9 440.9 L92.4 525.2 L93 440.2 L93.5 481.3 L94 440.8 L94.5 498.4 L95 440.8 L95.5 472.4 L96 440.6 L96.5 466.2 L97.1 441.4 L97.6 485.6 L98.1 440.7 L98.6 466 L99.1 440.3 L99.6 472.7 L100.1 440.8 L100.6 463.8 L101.1 441 L101.7 453.1 L102.2 440.7 L102.7 470.9 L103.2 440.2 L103.7 580 L104.2 450.9 L104.7 509.6 L105.2 439.4 L105.8 485.6 L106.3 440.8 L106.8 466.1 L107.3 441 L107.8 489.3 L108.3 440.1 L108.8 499.3 L109.3 440.4 L109.8 440.1 L110.4 440.6 L110.9 488.1 L111.4 441.2 L111.9 491.2 L112.4 440.4 L112.9 505.8 L113.4 439.8 L113.9 479 L114.5 439.6 L115 459.6 L115.5 440.4 L116 482.4 L116.5 439.9 L117 459.8 L117.5 439.9 L118 442.5 L118.6 440.6 L119.1 459.4 L119.6 440 L120.1 453.7 L120.6 439.6 L121.1 444.5 L121.6 562 L122.1 445.3 L122.6 439.7 L123.2 487.8 L123.7 440.9 L124.2 537.1 L124.7 448.3 L125.2 603 L125.7 449 L126.2 504.6 L126.7 441.3 L127.3 469.4 L127.8 441.3 L128.3 489.6 L128.8 441.2 L129.3 469.4 L129.8 440.2 L130.3 442.3 L130.8 439.6 L131.3 478 L131.9 441.3 L132.4 467.8 L132.9 440.7 L133.4 489.2 L133.9 439.4 L134.4 509.7 L134.9 440.9 L135.4 495.8 L136 439.5 L136.5 465 L137 439.3 L137.5 489.3 L138 439.7 L138.5 463 L139 440.2 L139.5 441.6 L140 440.4 L140.6 496.9 L141.1 440.5 L141.6 465 L142.1 439.4 L142.6 456.4 L143.1 440.9 L143.6 460.8 L144.1 440.2 L144.7 473.5 L145.2 441 L145.7 512.7 L146.2 440.7 L146.7 497 L147.2 440 L147.7 486.5 L148.2 439.5 L148.7 441.3 L149.3 440.4 L149.8 462.2 L150.3 441.2 L150.8 460.5 L151.3 440.3 L151.8 471.7 L152.3 439.6 L152.8 504.7 L153.4 441.1 L153.9 518.3 L154.4 440.4 L154.9 477.5 L155.4 440.8 L155.9 461.5 L156.4 440.6 L156.9 441.4 L157.5 441.2 L158 461.3 L158.5 439.9 L159 481.3 L159.5 439.9 L160 462.4 L160.5 439.7 L161 465.5 L161.5 439.5 L162.1 483.6 L162.6 440 L163.1 478.7 L163.6 440.5 L164.1 477 L164.6 440.4 L165.1 474.8 L165.6 439.4 L166.2 441 L166.7 439.3 L167.2 474.8 L167.7 441.2 L168.2 500.2 L168.7 440.2 L169.2 467.6 L169.7 440.9 L170.2 457.6 L170.8 440.3 L171.3 460.8 L171.8 441.1 L172.3 472.8 L172.8 440.3 L173.3 467.2 L173.8 440.7 L174.3 490.3 L174.9 440 L175.4 462.9 L175.9 440 L176.4 439.9 L176.9 441.2 L177.4 457.5 L177.9 439.3 L178.4 461.5 L178.9 439.4 L179.5 629.7 L180 443.8 L180.5 475.7 L181 440.6 L181.5 460.2 L182 441.2 L182.5 464.1 L183 440.3 L183.6 484.2 L184.1 439.5 L184.6 464.6 L185.1 439.7 L185.6 463 L186.1 439.5 L186.6 482.6 L187.1 440.3 L187.6 463.7 L188.2 441 L188.7 439.4 L189.2 440.5 L189.7 441.4 L190.2 439.3 L190.7 461.6 L191.2 439.6 L191.7 448.3 L192.3 561 L192.8 450.3 L193.3 439.4 L193.8 531.8 L194.3 439.6 L194.8 492.2 L195.3 441 L195.8 473.7 L196.3 440.8 L196.9 460 L197.4 439.7 L197.9 453.4 L198.4 441.1 L198.9 458 L199.4 439.4 L199.9 473.5 L200.4 440.9 L201 463.5 L201.5 439.5 L202 493.3 L202.5 440.9 L203 478.9 L203.5 439.3 L204 467.6 L204.5 440.9 L205.1 490.6 L205.6 440.9 L206.1 469.5 L206.6 440.2 L207.1 474.3 L207.6 441.1 L208.1 461.5 L208.6 440.9 L209.1 450.3 L209.7 440.6 L210.2 456 L210.7 439.5 L211.2 463.9 L211.7 440.1 L212.2 461.1 L212.7 440.9 L213.2 469.7 L213.8 440 L214.3 460.8 L214.8 440 L215.3 481.3 L215.8 440.7 L216.3 461.4 L216.8 439.6 L217.3 455.6 L217.8 440.4 L218.4 463.9 L218.9 441.3 L219.4 439.5 L219.9 439.5 L220.4 451.2 L220.9 439.7 L221.4 439.3 L221.9 440 L222.5 474.7 L223 440.8 L223.5 483.3 L224 440.6 L224.5 465.1 L225 441 L225.5 459.8 L226 440.3 L226.5 450.8 L227.1 439.7 L227.6 439.8 L228.1 441.4 L228.6 456.5 L229.1 440.5 L229.6 441 L230.1 566 L230.6 447.9 L231.2 513.9 L231.7 464.2 L232.2 439.6 L232.7 472.6 L233.2 440.1 L233.7 439.5 L234.2 439.8 L234.7 493.6 L235.2 441.1 L235.8 489.6 L236.3 441.3 L236.8 490.7 L237.3 441.3 L237.8 462.1 L238.3 439.3 L238.8 439.4 L239.3 440.6 L239.9 473.6 L240.4 439.9 L240.9 455.7 L241.4 441 L241.9 461 L242.4 441 L242.9 442.5 L243.4 440.2 L243.9 472.2 L244.5 441.3 L245 483.1 L245.5 439.6 L246 474 L246.5 439.6 L247 468.2 L247.5 439.4 L248 481 L248.6 440.6 L249.1 466.6 L249.6 440.3 L250.1 466 L250.6 441.2 L251.1 466 L251.6 441.2 L252.1 459.4 L252.7 439.3 L253.2 458.9 L253.7 440.3 L254.2 471.4 L254.7 441.3 L255.2 444.6 L255.7 628 L256.2 443.7 L256.7 440.5 L257.3 466.2 L257.8 440.2 L258.3 458.2 L258.8 439.7 L259.3 463.9 L259.8 439.8 L260.3 459.4 L260.8 439.7 L261.4 440.1 L261.9 439.7 L262.4 452.7 L262.9 441.3 L263.4 469.1 L263.9 440.3 L264.4 488.1 L264.9 440.1 L265.4 629.7 L266 440.8 L266.5 473.6 L267 441 L267.5 483.6 L268 439.9 L268.5 499.5 L269 439.8 L269.5 439.6 L270.1 441.1 L270.6 462.6 L271.1 440.6 L271.6 479.8 L272.1 440.7 L272.6 496.1 L273.1 440 L273.6 470.1 L274.1 439.6 L274.7 460.3 L275.2 441.1 L275.7 554.8 L276.2 441.5 L276.7 508.6 L277.2 440.6 L277.7 470.2 L278.2 440 L278.8 499.5 L279.3 439.6 L279.8 441.7 L280.3 440.7 L280.8 464.9 L281.3 439.6 L281.8 439.4 L282.3 441.1 L282.8 456.6 L283.4 440.9 L283.9 440.1 L284.4 439.5 L284.9 476.4 L285.4 439.7 L285.9 473.1 L286.4 441 L286.9 441.5 L287.5 441.1 L288 465.8 L288.5 440.4 L289 465.7 L289.5 440.7 L290 489.9 L290.5 440.6 L291 490.7 L291.5 439.9 L292.1 497.9 L292.6 440.2 L293.1 471.9 L293.6 439.2 L294.1 484.1 L294.6 440.2 L295.1 442.4 L295.6 441.3 L296.2 457.1 L296.7 439.8 L297.2 456.2 L297.7 440.1 L298.2 455.4 L298.7 440.8 L299.2 473.8 L299.7 440.1 L300.3 506 L300.8 441 L301.3 479 L301.8 441 L302.3 480.1 L302.8 439.8 L303.3 482.8 L303.8 440.6 L304.3 462.5 L304.9 440.4 L305.4 454.5 L305.9 440.8 L306.4 452.6 L306.9 440.3 L307.4 463.5 L307.9 441.4 L308.4 479.5 L309 441.1 L309.5 462.6 L310 439.4 L310.5 447.9 L311 570 L311.5 445.1 L312 439.7 L312.5 462 L313 439.3 L313.6 486 L314.1 441.4 L314.6 480.4 L315.1 439.9 L315.6 465.2 L316.1 440.3 L316.6 479.9 L317.1 441.2 L317.7 459.5 L318.2 440.6 L318.7 454.6 L319.2 439.5 L319.7 464.9 L320.2 440.9 L320.7 487.3 L321.2 439.4 L321.7 467.5 L322.3 441.2 L322.8 474.6 L323.3 440.6 L323.8 477.1 L324.3 439.7 L324.8 505.2 L325.3 441 L325.8 471.8 L326.4 440 L326.9 493 L327.4 440.2 L327.9 487.2 L328.4 439.6 L328.9 488.9 L329.4 441 L329.9 478.6 L330.4 439.5 L331 461.1 L331.5 439.2 L332 463.4 L332.5 439.2 L333 484.6 L333.5 440.8 L334 483.9 L334.5 440.4 L335.1 496 L335.6 439.9 L336.1 465.3 L336.6 439.3 L337.1 464.2 L337.6 439.6 L338.1 477.4 L338.6 441 L339.1 506.3 L339.7 439.8 L340.2 478.5 L340.7 441.2 L341.2 464.4 L341.7 439.4 L342.2 459.1 L342.7 441.3 L343.2 461.5 L343.8 441 L344.3 471.1 L344.8 439.9 L345.3 510.4 L345.8 440.8 L346.3 480.7 L346.8 439.7 L347.3 462.2 L347.9 440.1 L348.4 441.4 L348.9 440 L349.4 506.6 L349.9 439.6 L350.4 473.5 L350.9 439.5 L351.4 459.2 L351.9 439.9 L352.5 463.2 L353 440.9 L353.5 488.9 L354 440.4 L354.5 495.1 L355 439.8 L355.5 466.1 L356 450.5 L356.6 621.6 L357.1 450.8 L357.6 548.1 L358.1 441.1 L358.6 442.1 L359.1 440.7 L359.6 491.2 L360.1 441.2 L360.6 462.3 L361.2 439.5 L361.7 472.7 L362.2 441 L362.7 440.6 L363.2 441.2 L363.7 491.8 L364.2 439.6 L364.7 488.5 L365.3 441.2 L365.8 467.6 L366.3 440.5 L366.8 439.4 L367.3 440.9 L367.8 475.1 L368.3 441.1 L368.8 460.6 L369.3 440.5 L369.9 441.9 L370.4 440 L370.9 458.8 L371.4 439.5 L371.9 451 L372.4 440.8 L372.9 459.7 L373.4 440.3 L374 456.5 L374.5 439.5 L375 441.2 L375.5 439.3 L376 458.2 L376.5 446.9 L377 647.4 L377.5 446.3 L378 460.1 L378.6 440.8 L379.1 462.6 L379.6 439.9 L380.1 460.9 L380.6 440.1 L381.1 473.8 L381.6 439.3 L382.1 505.7 L382.7 441.4 L383.2 476.7 L383.7 441 L384.2 462.3 L384.7 441.1 L385.2 439.4 L385.7 441.3 L386.2 490.2 L386.8 439.2 L387.3 465.5 L387.8 439.3 L388.3 474.1 L388.8 440.4 L389.3 461.9 L389.8 439.5 L390.3 459.5 L390.8 440.7 L391.4 439.8 L391.9 439.8 L392.4 463.8 L392.9 440.6 L393.4 440.6 L393.9 439.8 L394.4 485.6 L394.9 439.2 L395.5 466.4 L396 440 L396.5 455.2 L397 439.7 L397.5 581.6 L398 450.3 L398.5 527.4 L399 440.4 L399.5 456.1 L400.1 440 L400.6 474.3 L401.1 441.4 L401.6 490.9 L402.1 441.1 L402.6 469.1 L403.1 440.4 L403.6 464.6 L404.2 441.5 L404.7 629 L405.2 444.4 L405.7 576.6 L406.2 439.7 L406.7 530.5 L407.2 439.9 L407.7 491.2 L408.2 440.4 L408.8 478.9 L409.3 440.8 L409.8 466.1 L410.3 441.3 L410.8 490.9 L411.3 439.9 L411.8 471.3 L412.3 439.9 L412.9 490.4 L413.4 441.1 L413.9 464.7 L414.4 441.3 L414.9 476.9 L415.4 440.9 L415.9 439.8 L416.4 440.9 L416.9 459.3 L417.5 439.7 L418 447.9 L418.5 560.9 L419 445.3 L419.5 440.8 L420 476.4 L420.5 439.5 L421 462.4 L421.6 439.2 L422.1 462.1 L422.6 441.4 L423.1 465 L423.6 441.4 L424.1 455.4 L424.6 440.2 L425.1 451.6 L425.6 440.8 L426.2 464.9 L426.7 440.8 L427.2 489.4 L427.7 440.9 L428.2 466.4 L428.7 439.3 L429.2 456.5 L429.7 440.8 L430.3 460.3 L430.8 439.3 L431.3 455.1 L431.8 441 L432.3 460 L432.8 439.3 L433.3 463.5 L433.8 440.2 L434.4 462.7 L434.9 441.3 L435.4 467.3 L435.9 440.2 L436.4 447.5 L436.9 561 L437.4 447.6 L437.9 441.2 L438.4 469.1 L439 439.5 L439.5 458.6 L440 440 L440.5 469.7 L441 440 L441.5 498.5 L442 440.4 L442.5 467.7 L443.1 439.6 L443.6 455.8 L444.1 440.9 L444.6 472.6 L445.1 439.5 L445.6 477.4 L446.1 440.2 L446.6 466.1 L447.1 441.1 L447.7 483.2 L448.2 440.1 L448.7 441.3 L449.2 439.7 L449.7 490.3 L450.2 441 L450.7 439.7 L451.2 440.6 L451.8 442.2 L452.3 440.7 L452.8 464.9 L453.3 439.3 L453.8 473.7 L454.3 440.5 L454.8 500.1 L455.3 439.6 L455.8 504.4 L456.4 439.4 L456.9 468.2 L457.4 439.3 L457.9 480.4 L458.4 439.5 L458.9 461.7 L459.4 440.4 L459.9 483.6 L460.5 440.8 L461 516.1 L461.5 440.7 L462 510.3 L462.5 440.5 L463 500.6 L463.5 440 L464 489.6 L464.5 440.6 L465.1 464.3 L465.6 440.8 L466.1 453.1 L466.6 440.6 L467.1 442.2 L467.6 441 L468.1 455.5 L468.6 440.4 L469.2 453.4 L469.7 439.8 L470.2 458.3 L470.7 439.9 L471.2 441.6 L471.7 440 L472.2 471.5 L472.7 439.6 L473.2 466.9 L473.8 441.2 L474.3 492.4 L474.8 440.6 L475.3 485.9 L475.8 450.3 L476.3 535.5 L476.8 448 L477.3 483.5 L477.9 439.7 L478.4 503 L478.9 440 L479.4 474.5 L479.9 441.4 L480.4 479.7 L480.9 440.1 L481.4 490 L482 440.8 L482.5 466.3 L483 440.3 L483.5 465.4 L484 439.7 L484.5 462.8 L485 440.9 L485.5 450.6 L486 440.3 L486.6 465 L487.1 440.8 L487.6 477.4 L488.1 441.1" fill="none" stroke="#73BF69" stroke-width="1.15" stroke-linejoin="round" />
<path d="M495.3 439.5 L495.8 454.2 L496.3 440.6 L496.8 467.2 L497.3 439.9 L497.8 485.6 L498.3 439.7 L498.8 441.3 L499.4 439.9 L499.9 457.7 L500.4 440.7 L500.9 439.4 L501.4 440.1 L501.9 441.3 L502.4 440.5 L502.9 483.7 L503.4 439.9 L504 449 L504.5 601.8 L505 446.8 L505.5 439.5 L506 485 L506.5 440.2 L507 476.3 L507.5 439.7 L508.1 481.3 L508.6 441.2 L509.1 475.9 L509.6 440.9 L510.1 455.9 L510.6 440.2 L511.1 452.9 L511.6 440.9 L512.1 451.8 L512.7 441 L513.2 462.7 L513.7 440.9 L514.2 485.9 L514.7 440.6 L515.2 525.2 L515.7 439.9 L516.2 500.9 L516.8 440.2 L517.3 481.5 L517.8 440.7 L518.3 442.5 L518.8 440.5 L519.3 483.2 L519.8 440.4 L520.3 465.5 L520.8 439.4 L521.4 442 L521.9 440.9 L522.4 473.3 L522.9 439.4 L523.4 502.1 L523.9 440.6 L524.4 447.6 L524.9 613 L525.5 446.9 L526 541.2 L526.5 459.3 L527 441.2 L527.5 476.4 L528 441.4 L528.5 456.1 L529 441.4 L529.6 454.9 L530.1 440 L530.6 464.5 L531.1 441 L531.6 490.7 L532.1 439.7 L532.6 462.4 L533.1 440 L533.6 477.5 L534.2 440.2 L534.7 475.6 L535.2 441 L535.7 506.2 L536.2 439.5 L536.7 439.3 L537.2 440.8 L537.7 466 L538.3 439.4 L538.8 457.5 L539.3 440.9 L539.8 453.1 L540.3 440.3 L540.8 458.6 L541.3 439.6 L541.8 479 L542.3 439.7 L542.9 464.1 L543.4 440 L543.9 483.4 L544.4 439.4 L544.9 479.2 L545.4 440.8 L545.9 529.7 L546.4 440.2 L547 442.3 L547.5 439.4 L548 496.1 L548.5 439.4 L549 473 L549.5 439.3 L550 479.3 L550.5 440.3 L551 475.1 L551.6 441.3 L552.1 459.3 L552.6 441.2 L553.1 476.9 L553.6 447.4 L554.1 614 L554.6 442.3 L555.1 477.6 L555.7 439.4 L556.2 471.6 L556.7 439.5 L557.2 463.3 L557.7 439.4 L558.2 467 L558.7 440.2 L559.2 462.3 L559.7 450.6 L560.3 587.7 L560.8 449.3 L561.3 540.4 L561.8 440.3 L562.3 475.8 L562.8 440.2 L563.3 461.9 L563.8 440 L564.4 470.9 L564.9 439.6 L565.4 462.1 L565.9 440.9 L566.4 461.5 L566.9 440.2 L567.4 471.6 L567.9 441.2 L568.4 507.2 L569 440.7 L569.5 442.4 L570 440.6 L570.5 464.9 L571 441.1 L571.5 467.3 L572 440.6 L572.5 495.8 L573.1 440.8 L573.6 473.2 L574.1 440.7 L574.6 495.7 L575.1 441 L575.6 439.5 L576.1 439.4 L576.6 454.7 L577.2 439.6 L577.7 439.5 L578.2 441.3 L578.7 494.7 L579.2 440.6 L579.7 469.2 L580.2 439.5 L580.7 484.5 L581.2 441.3 L581.8 475.8 L582.3 440.2 L582.8 496 L583.3 439.8 L583.8 488.4 L584.3 439.9 L584.8 463.6 L585.3 440 L585.9 465.5 L586.4 439.8 L586.9 465.1 L587.4 440.5 L587.9 473.3 L588.4 440.9 L588.9 495.7 L589.4 440.8 L589.9 439.5 L590.5 440.5 L591 464.5 L591.5 439.5 L592 486.8 L592.5 439.8 L593 490.7 L593.5 440.3 L594 468.6 L594.6 441.1 L595.1 491.1 L595.6 439.2 L596.1 488.4 L596.6 440.4 L597.1 466.7 L597.6 446.9 L598.1 570 L598.6 450.2 L599.2 521.1 L599.7 440.9 L600.2 464.9 L600.7 440 L601.2 497.1 L601.7 440.6 L602.2 472.7 L602.7 440.8 L603.3 461.7 L603.8 440.5 L604.3 463.5 L604.8 439.9 L605.3 483.3 L605.8 441.4 L606.3 439.4 L606.8 440.9 L607.3 439.6 L607.9 441 L608.4 473.3 L608.9 441.1 L609.4 507.1 L609.9 439.3 L610.4 490 L610.9 441.2 L611.4 441.7 L612 439.5 L612.5 439.4 L613 439.9 L613.5 452.9 L614 440.5 L614.5 460.3 L615 441 L615.5 483.3 L616.1 441 L616.6 479.5 L617.1 441.3 L617.6 463.6 L618.1 440.9 L618.6 478.1 L619.1 439.5 L619.6 461.3 L620.1 440.4 L620.7 468.8 L621.2 439.4 L621.7 491 L622.2 439.2 L622.7 465.2 L623.2 439.4 L623.7 478.3 L624.2 441 L624.8 471.9 L625.3 440.6 L625.8 465.2 L626.3 440.5 L626.8 439.8 L627.3 440.3 L627.8 495.7 L628.3 440 L628.8 440 L629.4 439.5 L629.9 456 L630.4 440.9 L630.9 462.5 L631.4 440.7 L631.9 462.9 L632.4 440.7 L632.9 450 L633.5 600.3 L634 445.4 L634.5 532.1 L635 463.1 L635.5 440.9 L636 441.8 L636.5 441.2 L637 441.9 L637.5 440.3 L638.1 442.3 L638.6 440.8 L639.1 461.4 L639.6 440.7 L640.1 488.8 L640.6 439.4 L641.1 485.7 L641.6 439.7 L642.2 467.1 L642.7 439.5 L643.2 471.9 L643.7 439.5 L644.2 511.3 L644.7 439.6 L645.2 477 L645.7 439.5 L646.2 468 L646.8 440 L647.3 494.1 L647.8 440.6 L648.3 466.3 L648.8 441.1 L649.3 442.2 L649.8 440.3 L650.3 507.7 L650.9 439.8 L651.4 475.6 L651.9 439.9 L652.4 489 L652.9 439.5 L653.4 465.9 L653.9 439.3 L654.4 469.5 L654.9 440.4 L655.5 503.3 L656 440.2 L656.5 476.8 L657 440.8 L657.5 458.6 L658 440.6 L658.5 440.9 L659 439.9 L659.6 449.2 L660.1 567.4 L660.6 442.2 L661.1 534.1 L661.6 469 L662.1 440.6 L662.6 464.5 L663.1 439.9 L663.7 440.7 L664.2 439.8 L664.7 497 L665.2 440.9 L665.7 442.3 L666.2 440.8 L666.7 442.5 L667.2 440.7 L667.7 456 L668.3 440.6 L668.8 459.1 L669.3 439.3 L669.8 465.9 L670.3 439.7 L670.8 440.9 L671.3 441.3 L671.8 485.9 L672.4 440.8 L672.9 464.5 L673.4 440.7 L673.9 455.7 L674.4 440.3 L674.9 461.6 L675.4 440.7 L675.9 476.7 L676.4 441 L677 513 L677.5 439.3 L678 475.5 L678.5 441.2 L679 475.4 L679.5 439.8 L680 464.2 L680.5 440.3 L681.1 465.7 L681.6 440.4 L682.1 457.3 L682.6 440.6 L683.1 464.1 L683.6 439.7 L684.1 490.7 L684.6 440 L685.1 469 L685.7 440.7 L686.2 455.1 L686.7 439.5 L687.2 459.7 L687.7 440.3 L688.2 475.2 L688.7 440 L689.2 492.8 L689.8 440.8 L690.3 544.2 L690.8 440.7 L691.3 495.3 L691.8 439.3 L692.3 447.1 L692.8 567.4 L693.3 443.8 L693.8 512.7 L694.4 477.9 L694.9 439.9 L695.4 461.5 L695.9 439.5 L696.4 459.7 L696.9 440.8 L697.4 485.3 L697.9 440.2 L698.5 522.1 L699 440.5 L699.5 508.7 L700 440.2 L700.5 511.5 L701 439.5 L701.5 480.8 L702 441 L702.5 457.8 L703.1 440.6 L703.6 465.2 L704.1 439.8 L704.6 441.1 L705.1 440.2 L705.6 474.4 L706.1 439.6 L706.6 508.6 L707.2 441.2 L707.7 476.4 L708.2 440 L708.7 458.6 L709.2 441.4 L709.7 464.1 L710.2 440.2 L710.7 486.6 L711.3 441 L711.8 466 L712.3 439.5 L712.8 477.3 L713.3 440.2 L713.8 514.5 L714.3 441.3 L714.8 478.2 L715.3 441.2 L715.9 498.7 L716.4 440.9 L716.9 472.8 L717.4 440.4 L717.9 442.1 L718.4 441 L718.9 491.9 L719.4 439.3 L720 440.1 L720.5 441.3 L721 460.7 L721.5 441.2 L722 461.2 L722.5 439.7 L723 440.2 L723.5 441.4 L724 441.8 L724.6 440.5 L725.1 492.7 L725.6 440.2 L726.1 469.7 L726.6 440.5 L727.1 452.6 L727.6 439.9 L728.1 464.3 L728.7 439.8 L729.2 483.5 L729.7 439.8 L730.2 489.9 L730.7 440.9 L731.2 469.2 L731.7 440.4 L732.2 495.2 L732.7 439.9 L733.3 474.8 L733.8 440.5 L734.3 458.5 L734.8 440 L735.3 464.8 L735.8 439.4 L736.3 470.8 L736.8 441.2 L737.4 494.9 L737.9 449.7 L738.4 626.6 L738.9 447.9 L739.4 559.3 L739.9 441.2 L740.4 478.1 L740.9 441 L741.4 507.4 L742 440 L742.5 470.9 L743 439.7 L743.5 459.9 L744 439.5 L744.5 461.3 L745 440.9 L745.5 441.9 L746.1 440.9 L746.6 439.6 L747.1 440.9 L747.6 452.1 L748.1 439.8 L748.6 441.5 L749.1 440.9 L749.6 481.6 L750.1 441.2 L750.7 462.1 L751.2 441.1 L751.7 478.5 L752.2 439.6 L752.7 472.1 L753.2 440.5 L753.7 441.2 L754.2 439.2 L754.8 473.8 L755.3 441.2 L755.8 504.7 L756.3 439.7 L756.8 477.9 L757.3 440.5 L757.8 467 L758.3 440 L758.9 453.8 L759.4 439.4 L759.9 456.3 L760.4 439.5 L760.9 477.6 L761.4 439.3 L761.9 467.8 L762.4 440.5 L762.9 500 L763.5 440.4 L764 475.6 L764.5 439.4 L765 461.1 L765.5 439.6 L766 451.9 L766.5 440.2 L767 452.5 L767.6 440.1 L768.1 465 L768.6 448.5 L769.1 580 L769.6 443.3 L770.1 534.2 L770.6 441 L771.1 461.6 L771.6 440.5 L772.2 476.4 L772.7 440.1 L773.2 477.2 L773.7 440.3 L774.2 466.6 L774.7 439.8 L775.2 468.3 L775.7 439.4 L776.3 439.4 L776.8 440.7 L777.3 461.1 L777.8 439.5 L778.3 454.6 L778.8 440.9 L779.3 473.2 L779.8 440.7 L780.3 459.5 L780.9 441.1 L781.4 463.6 L781.9 440.1 L782.4 455.2 L782.9 440 L783.4 459.1 L783.9 441.1 L784.4 475.4 L785 439.5 L785.5 460.2 L786 450.4 L786.5 601.8 L787 444 L787.5 560.5 L788 440.3 L788.5 473.7 L789 441.4 L789.6 455.9 L790.1 441 L790.6 461.5 L791.1 441.2 L791.6 455.7 L792.1 440 L792.6 465.9 L793.1 440.6 L793.7 461.1 L794.2 439.9 L794.7 459.7 L795.2 440.2 L795.7 484.7 L796.2 439.8 L796.7 485.7 L797.2 440 L797.7 488.2 L798.3 439.4 L798.8 464.3 L799.3 440.9 L799.8 482.1 L800.3 440.2 L800.8 495.1 L801.3 441 L801.8 471.3 L802.4 441.4 L802.9 462.1 L803.4 439.4 L803.9 455.6 L804.4 439.3 L804.9 453.6 L805.4 441 L805.9 463.1 L806.5 440.2 L807 458.3 L807.5 440.6 L808 473.2 L808.5 439.2 L809 492.4 L809.5 439.7 L810 489.3 L810.5 441.3 L811.1 490.4 L811.6 440.2 L812.1 485 L812.6 440 L813.1 463.1 L813.6 439.9 L814.1 463.5 L814.6 439.3 L815.2 463.4 L815.7 440.6 L816.2 480.8 L816.7 439.4 L817.2 463.4 L817.7 440.2 L818.2 460.6 L818.7 439.3 L819.2 454.3 L819.8 441 L820.3 463.8 L820.8 441.3 L821.3 472.6 L821.8 439.4 L822.3 504.1 L822.8 440.1 L823.3 473.2 L823.9 441.3 L824.4 472.1 L824.9 440.8 L825.4 497.5 L825.9 441.3 L826.4 468.7 L826.9 439.7 L827.4 474.3 L827.9 440.5 L828.5 475.9 L829 440.1 L829.5 465.7 L830 440.2 L830.5 483.9 L831 440 L831.5 474.8 L832 440.7 L832.6 500.7 L833.1 440 L833.6 470.8 L834.1 441.3 L834.6 492.8 L835.1 441.3 L835.6 473.8 L836.1 440.4 L836.6 477.1 L837.2 441 L837.7 490 L838.2 440.1 L838.7 468.6 L839.2 449 L839.7 616.5 L840.2 439.2 L840.7 556 L841.3 440.6 L841.8 476.5 L842.3 439.3 L842.8 492 L843.3 440.2 L843.8 489.4 L844.3 441.1 L844.8 479.3 L845.4 445.5 L845.9 629.2 L846.4 447.1 L846.9 463.4 L847.4 440.6 L847.9 465.5 L848.4 440.1 L848.9 474.1 L849.4 439.5 L850 513.8 L850.5 440.9 L851 493.5 L851.5 439.9 L852 473.3 L852.5 440.7 L853 473.2 L853.5 440.1 L854.1 499.2 L854.6 441.1 L855.1 501.9 L855.6 440.6 L856.1 501.6 L856.6 439.6 L857.1 472.8 L857.6 440.1 L858.1 456.1 L858.7 441.3 L859.2 441.7 L859.7 440.2 L860.2 461 L860.7 439.5 L861.2 464 L861.7 440.9 L862.2 478 L862.8 441.1 L863.3 503.4 L863.8 440.7 L864.3 480.8 L864.8 439.8 L865.3 508.8 L865.8 440 L866.3 477.8 L866.8 439.5 L867.4 496.6 L867.9 440.8 L868.4 483.3 L868.9 439.4 L869.4 440.4 L869.9 439.7 L870.4 544.2 L870.9 441.3 L871.5 505.9 L872 439.8 L872.5 470.8 L873 440 L873.5 493.6 L874 439.8 L874.5 502.1 L875 439.5 L875.5 477.2 L876.1 439.5 L876.6 439.6 L877.1 441.1 L877.6 498.6 L878.1 439.8 L878.6 500 L879.1 439.8 L879.6 480.2 L880.2 441.4 L880.7 441.2 L881.2 583.6 L881.7 443.7 L882.2 439.7 L882.7 440.1 L883.2 440.8 L883.7 532.9 L884.2 439.3 L884.8 495 L885.3 440.3 L885.8 475.3 L886.3 439.4 L886.8 466.1 L887.3 440.3 L887.8 490.3 L888.3 440.5 L888.9 485.9 L889.4 440.1 L889.9 441.6 L890.4 610.4 L890.9 441.4 L891.4 440.7 L891.9 497.8 L892.4 441 L893 473.8 L893.5 440.7 L894 486.8 L894.5 439.2 L895 444.6 L895.5 668.6 L896 449 L896.5 546.5 L897 477.2 L897.6 439.9 L898.1 439.4 L898.6 441.3 L899.1 453 L899.6 441.3 L900.1 463.8 L900.6 439.6 L901.1 462.2 L901.7 440.6 L902.2 458.8 L902.7 441 L903.2 475.2 L903.7 440.7 L904.2 458 L904.7 441.1 L905.2 478.7 L905.7 440.9 L906.3 475.5 L906.8 440.1 L907.3 440.4 L907.8 440.2 L908.3 466.1 L908.8 440.3 L909.3 472.9 L909.8 440.2 L910.4 460.6 L910.9 439.5 L911.4 483.7 L911.9 439.9 L912.4 439.5" fill="none" stroke="#73BF69" stroke-width="1.15" stroke-linejoin="round" />
<line x1="488.4" y1="440.2" x2="495.3" y2="444.8" stroke="#73BF69" stroke-width="0.9" opacity="0.8"/>
<rect x="490.4" y="416" width="3.4" height="275.9" fill="#1c2620" opacity="0.5"/>
<line x1="492.1" y1="416" x2="492.1" y2="691.9" stroke="#e6bf1c" stroke-width="1.8" stroke-dasharray="4.75 3.4"/>
<line x1="496.5" y1="416" x2="496.5" y2="691.9" stroke="#5aa858" stroke-width="1.9" stroke-dasharray="4.75 3.4"/>
<path d="M488.7 696.9 L491.8 693 L494.9 696.9 Z" fill="#e9c21a"/>
<path d="M493.1 696.9 L496.4 693 L499.7 696.9 Z" fill="#6cc068"/>
<text transform="translate(35 440.7) scale(1 1.09)" font-size="9.8" text-anchor="end" fill="#c4c4d2" font-weight="normal" stroke="#c4c4d2" stroke-width="0.22">1</text>
<text transform="translate(35 473.6) scale(1 1.09)" font-size="9.8" text-anchor="end" fill="#c4c4d2" font-weight="normal" stroke="#c4c4d2" stroke-width="0.22">0.990</text>
<text transform="translate(35 506.4) scale(1 1.09)" font-size="9.8" text-anchor="end" fill="#c4c4d2" font-weight="normal" stroke="#c4c4d2" stroke-width="0.22">0.980</text>
<text transform="translate(35 539.2) scale(1 1.09)" font-size="9.8" text-anchor="end" fill="#c4c4d2" font-weight="normal" stroke="#c4c4d2" stroke-width="0.22">0.970</text>
<text transform="translate(35 572.1) scale(1 1.09)" font-size="9.8" text-anchor="end" fill="#c4c4d2" font-weight="normal" stroke="#c4c4d2" stroke-width="0.22">0.960</text>
<text transform="translate(35 605) scale(1 1.09)" font-size="9.8" text-anchor="end" fill="#c4c4d2" font-weight="normal" stroke="#c4c4d2" stroke-width="0.22">0.950</text>
<text transform="translate(35 637.8) scale(1 1.09)" font-size="9.8" text-anchor="end" fill="#c4c4d2" font-weight="normal" stroke="#c4c4d2" stroke-width="0.22">0.940</text>
<text transform="translate(35 670.7) scale(1 1.09)" font-size="9.8" text-anchor="end" fill="#c4c4d2" font-weight="normal" stroke="#c4c4d2" stroke-width="0.22">0.930</text>
<text transform="translate(45.5 706.2) scale(1 1.09)" font-size="9.8" text-anchor="middle" fill="#c4c4d2" font-weight="normal" stroke="#c4c4d2" stroke-width="0.22">07:00</text>
<text transform="translate(94.8 706.2) scale(1 1.09)" font-size="9.8" text-anchor="middle" fill="#c4c4d2" font-weight="normal" stroke="#c4c4d2" stroke-width="0.22">08:00</text>
<text transform="translate(144.1 706.2) scale(1 1.09)" font-size="9.8" text-anchor="middle" fill="#c4c4d2" font-weight="normal" stroke="#c4c4d2" stroke-width="0.22">09:00</text>
<text transform="translate(193.3 706.2) scale(1 1.09)" font-size="9.8" text-anchor="middle" fill="#c4c4d2" font-weight="normal" stroke="#c4c4d2" stroke-width="0.22">10:00</text>
<text transform="translate(242.6 706.2) scale(1 1.09)" font-size="9.8" text-anchor="middle" fill="#c4c4d2" font-weight="normal" stroke="#c4c4d2" stroke-width="0.22">11:00</text>
<text transform="translate(291.9 706.2) scale(1 1.09)" font-size="9.8" text-anchor="middle" fill="#c4c4d2" font-weight="normal" stroke="#c4c4d2" stroke-width="0.22">12:00</text>
<text transform="translate(341.2 706.2) scale(1 1.09)" font-size="9.8" text-anchor="middle" fill="#c4c4d2" font-weight="normal" stroke="#c4c4d2" stroke-width="0.22">13:00</text>
<text transform="translate(390.5 706.2) scale(1 1.09)" font-size="9.8" text-anchor="middle" fill="#c4c4d2" font-weight="normal" stroke="#c4c4d2" stroke-width="0.22">14:00</text>
<text transform="translate(439.7 706.2) scale(1 1.09)" font-size="9.8" text-anchor="middle" fill="#c4c4d2" font-weight="normal" stroke="#c4c4d2" stroke-width="0.22">15:00</text>
<text transform="translate(489 706.2) scale(1 1.09)" font-size="9.8" text-anchor="middle" fill="#c4c4d2" font-weight="normal" stroke="#c4c4d2" stroke-width="0.22">16:00</text>
<text transform="translate(538.3 706.2) scale(1 1.09)" font-size="9.8" text-anchor="middle" fill="#c4c4d2" font-weight="normal" stroke="#c4c4d2" stroke-width="0.22">17:00</text>
<text transform="translate(587.6 706.2) scale(1 1.09)" font-size="9.8" text-anchor="middle" fill="#c4c4d2" font-weight="normal" stroke="#c4c4d2" stroke-width="0.22">18:00</text>
<text transform="translate(636.9 706.2) scale(1 1.09)" font-size="9.8" text-anchor="middle" fill="#c4c4d2" font-weight="normal" stroke="#c4c4d2" stroke-width="0.22">19:00</text>
<text transform="translate(686.1 706.2) scale(1 1.09)" font-size="9.8" text-anchor="middle" fill="#c4c4d2" font-weight="normal" stroke="#c4c4d2" stroke-width="0.22">20:00</text>
<text transform="translate(735.4 706.2) scale(1 1.09)" font-size="9.8" text-anchor="middle" fill="#c4c4d2" font-weight="normal" stroke="#c4c4d2" stroke-width="0.22">21:00</text>
<text transform="translate(784.7 706.2) scale(1 1.09)" font-size="9.8" text-anchor="middle" fill="#c4c4d2" font-weight="normal" stroke="#c4c4d2" stroke-width="0.22">22:00</text>
<text transform="translate(834 706.2) scale(1 1.09)" font-size="9.8" text-anchor="middle" fill="#c4c4d2" font-weight="normal" stroke="#c4c4d2" stroke-width="0.22">23:00</text>
<text transform="translate(883.3 706.2) scale(1 1.09)" font-size="9.8" text-anchor="middle" fill="#c4c4d2" font-weight="normal" stroke="#c4c4d2" stroke-width="0.22">00:00</text>
<rect x="22.5" y="717.7" width="12" height="3.6" rx="1" fill="#73BF69"/>
<text transform="translate(40.7 723.4) scale(1 1.09)" font-size="10.1" text-anchor="start" fill="#c4c4d2" font-weight="normal" stroke="#c4c4d2" stroke-width="0.22">Worst correlation</text>
<text transform="translate(124 723.4) scale(1 1.09)" font-size="9.9" text-anchor="start" fill="#c4c4d2" font-weight="normal" stroke="#c4c4d2" stroke-width="0.22">Mean: 0.996</text>
<line x1="972.8" y1="662" x2="1480.7" y2="662" stroke="rgba(204,204,220,0.09)" stroke-width="1"/>
<text transform="translate(968.3 664.8) scale(1 1.09)" font-size="9.8" text-anchor="end" fill="#c4c4d2" font-weight="normal" stroke="#c4c4d2" stroke-width="0.22">-30</text>
<line x1="972.8" y1="631.2" x2="1480.7" y2="631.2" stroke="rgba(204,204,220,0.09)" stroke-width="1"/>
<text transform="translate(968.3 634) scale(1 1.09)" font-size="9.8" text-anchor="end" fill="#c4c4d2" font-weight="normal" stroke="#c4c4d2" stroke-width="0.22">-20</text>
<line x1="972.8" y1="600.5" x2="1480.7" y2="600.5" stroke="rgba(204,204,220,0.09)" stroke-width="1"/>
<text transform="translate(968.3 603.3) scale(1 1.09)" font-size="9.8" text-anchor="end" fill="#c4c4d2" font-weight="normal" stroke="#c4c4d2" stroke-width="0.22">-10</text>
<line x1="972.8" y1="569.8" x2="1480.7" y2="569.8" stroke="rgba(204,204,220,0.09)" stroke-width="1"/>
<text transform="translate(968.3 572.5) scale(1 1.09)" font-size="9.8" text-anchor="end" fill="#c4c4d2" font-weight="normal" stroke="#c4c4d2" stroke-width="0.22">0</text>
<line x1="972.8" y1="539" x2="1480.7" y2="539" stroke="rgba(204,204,220,0.09)" stroke-width="1"/>
<text transform="translate(968.3 541.8) scale(1 1.09)" font-size="9.8" text-anchor="end" fill="#c4c4d2" font-weight="normal" stroke="#c4c4d2" stroke-width="0.22">10</text>
<line x1="972.8" y1="508.2" x2="1480.7" y2="508.2" stroke="rgba(204,204,220,0.09)" stroke-width="1"/>
<text transform="translate(968.3 511.1) scale(1 1.09)" font-size="9.8" text-anchor="end" fill="#c4c4d2" font-weight="normal" stroke="#c4c4d2" stroke-width="0.22">20</text>
<line x1="972.8" y1="477.5" x2="1480.7" y2="477.5" stroke="rgba(204,204,220,0.09)" stroke-width="1"/>
<text transform="translate(968.3 480.3) scale(1 1.09)" font-size="9.8" text-anchor="end" fill="#c4c4d2" font-weight="normal" stroke="#c4c4d2" stroke-width="0.22">30</text>
<line x1="972.8" y1="446.8" x2="1480.7" y2="446.8" stroke="rgba(204,204,220,0.09)" stroke-width="1"/>
<text transform="translate(968.3 449.6) scale(1 1.09)" font-size="9.8" text-anchor="end" fill="#c4c4d2" font-weight="normal" stroke="#c4c4d2" stroke-width="0.22">40</text>
<line x1="972.8" y1="416" x2="1480.7" y2="416" stroke="rgba(204,204,220,0.09)" stroke-width="1"/>
<text transform="translate(968.3 418.8) scale(1 1.09)" font-size="9.8" text-anchor="end" fill="#c4c4d2" font-weight="normal" stroke="#c4c4d2" stroke-width="0.22">50</text>
<line x1="1006.6" y1="416" x2="1006.6" y2="677" stroke="rgba(204,204,220,0.09)" stroke-width="1"/>
<text transform="translate(1006.6 689) scale(1 1.09)" font-size="9.8" text-anchor="middle" fill="#c4c4d2" font-weight="normal" stroke="#c4c4d2" stroke-width="0.22">08:00</text>
<line x1="1063.7" y1="416" x2="1063.7" y2="677" stroke="rgba(204,204,220,0.09)" stroke-width="1"/>
<text transform="translate(1063.7 689) scale(1 1.09)" font-size="9.8" text-anchor="middle" fill="#c4c4d2" font-weight="normal" stroke="#c4c4d2" stroke-width="0.22">10:00</text>
<line x1="1120.8" y1="416" x2="1120.8" y2="677" stroke="rgba(204,204,220,0.09)" stroke-width="1"/>
<text transform="translate(1120.8 689) scale(1 1.09)" font-size="9.8" text-anchor="middle" fill="#c4c4d2" font-weight="normal" stroke="#c4c4d2" stroke-width="0.22">12:00</text>
<line x1="1177.9" y1="416" x2="1177.9" y2="677" stroke="rgba(204,204,220,0.09)" stroke-width="1"/>
<text transform="translate(1177.9 689) scale(1 1.09)" font-size="9.8" text-anchor="middle" fill="#c4c4d2" font-weight="normal" stroke="#c4c4d2" stroke-width="0.22">14:00</text>
<line x1="1235" y1="416" x2="1235" y2="677" stroke="rgba(204,204,220,0.09)" stroke-width="1"/>
<text transform="translate(1235 689) scale(1 1.09)" font-size="9.8" text-anchor="middle" fill="#c4c4d2" font-weight="normal" stroke="#c4c4d2" stroke-width="0.22">16:00</text>
<line x1="1292.1" y1="416" x2="1292.1" y2="677" stroke="rgba(204,204,220,0.09)" stroke-width="1"/>
<text transform="translate(1292.1 689) scale(1 1.09)" font-size="9.8" text-anchor="middle" fill="#c4c4d2" font-weight="normal" stroke="#c4c4d2" stroke-width="0.22">18:00</text>
<line x1="1349.2" y1="416" x2="1349.2" y2="677" stroke="rgba(204,204,220,0.09)" stroke-width="1"/>
<text transform="translate(1349.2 689) scale(1 1.09)" font-size="9.8" text-anchor="middle" fill="#c4c4d2" font-weight="normal" stroke="#c4c4d2" stroke-width="0.22">20:00</text>
<line x1="1406.3" y1="416" x2="1406.3" y2="677" stroke="rgba(204,204,220,0.09)" stroke-width="1"/>
<text transform="translate(1406.3 689) scale(1 1.09)" font-size="9.8" text-anchor="middle" fill="#c4c4d2" font-weight="normal" stroke="#c4c4d2" stroke-width="0.22">22:00</text>
<line x1="1463.4" y1="416" x2="1463.4" y2="677" stroke="rgba(204,204,220,0.09)" stroke-width="1"/>
<text transform="translate(1463.4 689) scale(1 1.09)" font-size="9.8" text-anchor="middle" fill="#c4c4d2" font-weight="normal" stroke="#c4c4d2" stroke-width="0.22">00:00</text>
<path d="M976.7 570.6 L977.3 570.4 L977.8 572 L978.4 572.9 L978.9 573.3 L979.5 572 L980.1 573.3 L980.6 573.7 L981.2 571.8 L981.7 571.9 L982.3 571.4 L982.9 573.1 L983.4 572.1 L984 572.1 L984.5 573.8 L985.1 571.4 L985.7 571.7 L986.2 569.3 L986.8 571.8 L987.4 572.2 L987.9 570.6 L988.5 571.8 L989 571 L989.6 572.5 L990.2 571.8 L990.7 570.9 L991.3 571.2 L991.8 571.9 L992.4 573.3 L993 571.5 L993.5 572 L994.1 571.2 L994.6 571.8 L995.2 570.8 L995.8 572.1 L996.3 571.8 L996.9 571.3 L997.4 573.3 L998 572.5 L998.6 572.6 L999.1 569.7 L999.7 572.2 L1000.2 571.3 L1000.8 571.3 L1001.4 572.4 L1001.9 573.9 L1002.5 570.9 L1003 572.5 L1003.6 571.2 L1004.2 573.6 L1004.7 572.6 L1005.3 570.6 L1005.9 570.4 L1006.4 573.6 L1007 573.6 L1007.5 572.1 L1008.1 571.2 L1008.7 571.9 L1009.2 571.7 L1009.8 573.2 L1010.3 571.4 L1010.9 570.8 L1011.5 572.6 L1012 573.7 L1012.6 572.9 L1013.1 571.2 L1013.7 574.1 L1014.3 572.2 L1014.8 573.2 L1015.4 572.2 L1015.9 572.3 L1016.5 572 L1017.1 570.3 L1017.6 571.6 L1018.2 570.5 L1018.7 572.2 L1019.3 572.6 L1019.9 571.6 L1020.4 575.2 L1021 572.1 L1021.5 571.9 L1022.1 573.5 L1022.7 571.5 L1023.2 572.7 L1023.8 574.9 L1024.4 572.3 L1024.9 573.2 L1025.5 572.7 L1026 572.2 L1026.6 570.6 L1027.2 571.9 L1027.7 572.1 L1028.3 571.6 L1028.8 574.2 L1029.4 570.6 L1030 573.3 L1030.5 571.5 L1031.1 573.4 L1031.6 573.2 L1032.2 572.5 L1032.8 569.8 L1033.3 571.2 L1033.9 572.8 L1034.4 572.4 L1035 573.4 L1035.6 572.1 L1036.1 572.7 L1036.7 571.2 L1037.2 573.6 L1037.8 572.4 L1038.4 573 L1038.9 572.9 L1039.5 571.2 L1040.1 571.9 L1040.6 571.4 L1041.2 570.7 L1041.7 570.7 L1042.3 573.7 L1042.9 571.4 L1043.4 574.1 L1044 572.1 L1044.5 569.8 L1045.1 572.3 L1045.7 572.5 L1046.2 571.9 L1046.8 572 L1047.3 572 L1047.9 572.9 L1048.5 570.8 L1049 571 L1049.6 572.3 L1050.1 571.7 L1050.7 571.3 L1051.3 570.9 L1051.8 571.6 L1052.4 571.2 L1052.9 572.4 L1053.5 573.3 L1054.1 572.6 L1054.6 570.9 L1055.2 570.9 L1055.7 571.9 L1056.3 572.7 L1056.9 571.7 L1057.4 570.1 L1058 570.5 L1058.6 572.9 L1059.1 572.1 L1059.7 573.8 L1060.2 573.4 L1060.8 571.8 L1061.4 572 L1061.9 570.9 L1062.5 570.6 L1063 571.1 L1063.6 570.5 L1064.2 572.7 L1064.7 573.4 L1065.3 571.5 L1065.8 568.9 L1066.4 571.6 L1067 573.4 L1067.5 571.8 L1068.1 570.4 L1068.6 573.3 L1069.2 571.1 L1069.8 572.8 L1070.3 570.6 L1070.9 571.1 L1071.4 571.7 L1072 569.7 L1072.6 572.5 L1073.1 572.9 L1073.7 569.9 L1074.2 573.1 L1074.8 569.5 L1075.4 572.1 L1075.9 573.3 L1076.5 572.1 L1077.1 571.9 L1077.6 571.8 L1078.2 572.3 L1078.7 570.8 L1079.3 574.8 L1079.9 572.7 L1080.4 572.4 L1081 569.9 L1081.5 574.4 L1082.1 572.5 L1082.7 573.4 L1083.2 572.8 L1083.8 571.3 L1084.3 571.6 L1084.9 570.4 L1085.5 572.8 L1086 571.7 L1086.6 570.7 L1087.1 571 L1087.7 572.4 L1088.3 570.7 L1088.8 573.1 L1089.4 569.9 L1089.9 571.9 L1090.5 572.2 L1091.1 571.7 L1091.6 571.1 L1092.2 570 L1092.7 572.2 L1093.3 572.5 L1093.9 571.4 L1094.4 573.1 L1095 574 L1095.6 571.1 L1096.1 572.5 L1096.7 570.7 L1097.2 573.3 L1097.8 575.2 L1098.4 571.7 L1098.9 571.9 L1099.5 570.2 L1100 571.4 L1100.6 571.7 L1101.2 571.4 L1101.7 572.5 L1102.3 572 L1102.8 573.6 L1103.4 571.4 L1104 573 L1104.5 572.6 L1105.1 571.2 L1105.6 571 L1106.2 573.2 L1106.8 569.7 L1107.3 572.7 L1107.9 571.1 L1108.4 570.9 L1109 571.8 L1109.6 571.9 L1110.1 570 L1110.7 571 L1111.2 571.5 L1111.8 574.2 L1112.4 572.9 L1112.9 570.7 L1113.5 571.8 L1114.1 573.2 L1114.6 572.8 L1115.2 572.4 L1115.7 571.3 L1116.3 571.6 L1116.9 570.9 L1117.4 573 L1118 570.9 L1118.5 572.6 L1119.1 572.4 L1119.7 570 L1120.2 572 L1120.8 572.2 L1121.3 572.3 L1121.9 572.5 L1122.5 570.2 L1123 570.4 L1123.6 571.2 L1124.1 571.8 L1124.7 570.8 L1125.3 572.1 L1125.8 571.5 L1126.4 571.6 L1126.9 572 L1127.5 570.1 L1128.1 570 L1128.6 570.5 L1129.2 574.3 L1129.8 569.9 L1130.3 571.2 L1130.9 572.6 L1131.4 572.1 L1132 570.7 L1132.6 570.7 L1133.1 571.1 L1133.7 571.9 L1134.2 572 L1134.8 571.1 L1135.4 572.2 L1135.9 573.1 L1136.5 572.8 L1137 572.2 L1137.6 571.7 L1138.2 569.4 L1138.7 573.7 L1139.3 571.5 L1139.8 572.2 L1140.4 571.7 L1141 570.5 L1141.5 570.6 L1142.1 572.2 L1142.6 572.7 L1143.2 573.6 L1143.8 572.1 L1144.3 570.6 L1144.9 572.4 L1145.4 571.2 L1146 571.2 L1146.6 571.6 L1147.1 570.8 L1147.7 572.2 L1148.3 573 L1148.8 573.4 L1149.4 571 L1149.9 572.5 L1150.5 572.4 L1151.1 571.1 L1151.6 573 L1152.2 570 L1152.7 571.3 L1153.3 572.7 L1153.9 572.8 L1154.4 570.8 L1155 573.4 L1155.5 572.8 L1156.1 572 L1156.7 571.8 L1157.2 572 L1157.8 571.6 L1158.3 572.5 L1158.9 572.2 L1159.5 570.6 L1160 571.3 L1160.6 572.6 L1161.1 570.1 L1161.7 574.4 L1162.3 572 L1162.8 571.3 L1163.4 570.9 L1163.9 571.9 L1164.5 572.5 L1165.1 571.4 L1165.6 572.3 L1166.2 571.5 L1166.8 575.2 L1167.3 571.6 L1167.9 573 L1168.4 571 L1169 571.2 L1169.6 571.2 L1170.1 572.5 L1170.7 571.5 L1171.2 572.5 L1171.8 571.8 L1172.4 572.2 L1172.9 573.1 L1173.5 569.7 L1174 571.2 L1174.6 574.5 L1175.2 571 L1175.7 573.7 L1176.3 572.3 L1176.8 572.7 L1177.4 572.7 L1178 571.8 L1178.5 572.4 L1179.1 573.7 L1179.6 572.1 L1180.2 571.6 L1180.8 570 L1181.3 572.5 L1181.9 573.4 L1182.4 572.5 L1183 571.3 L1183.6 573.1 L1184.1 572.9 L1184.7 571.4 L1185.3 572.1 L1185.8 571.8 L1186.4 572.8 L1186.9 573 L1187.5 572.4 L1188.1 572.2 L1188.6 572.4 L1189.2 571.6 L1189.7 571.4 L1190.3 571.4 L1190.9 571.5 L1191.4 573.1 L1192 573.4 L1192.5 571.1 L1193.1 572 L1193.7 571.9 L1194.2 573.4 L1194.8 572.3 L1195.3 572.8 L1195.9 573.1 L1196.5 572.8 L1197 573.8 L1197.6 572 L1198.1 570.7 L1198.7 572.9 L1199.3 571.9 L1199.8 573.3 L1200.4 571.3 L1200.9 569.9 L1201.5 573.5 L1202.1 572.3 L1202.6 570.4 L1203.2 571.6 L1203.8 571.9 L1204.3 574.4 L1204.9 572.2 L1205.4 571 L1206 570.4 L1206.6 571.3 L1207.1 572.7 L1207.7 572.9 L1208.2 574.2 L1208.8 573.3 L1209.4 570.7 L1209.9 572.2 L1210.5 573.6 L1211 570.5 L1211.6 574 L1212.2 570.6 L1212.7 572.4 L1213.3 571.7 L1213.8 571.3 L1214.4 571.7 L1215 570.6 L1215.5 572 L1216.1 572.4 L1216.6 572.8 L1217.2 573.7 L1217.8 572.9 L1218.3 570.9 L1218.9 571.1 L1219.4 570.4 L1220 568.9 L1220.6 571.2 L1221.1 571.5 L1221.7 573.6 L1222.3 572.3 L1222.8 569.5 L1223.4 571.4 L1223.9 572.2 L1224.5 571.7 L1225.1 574.3 L1225.6 573 L1226.2 573.6 L1226.7 574.6 L1227.3 571.2 L1227.9 570.9 L1228.4 572.3 L1229 571.7 L1229.5 573.2 L1230.1 571.5 L1230.7 571.2 L1231.2 570.3 L1231.8 570.2 L1232.3 571.5 L1232.9 572.2 L1233.5 573 L1234 572.8 L1234.6 571.3 L1235.1 571.4 L1235.7 572 L1236.3 570.1 L1236.8 571.3 L1237.4 572 L1238 572.3 L1238.5 572 L1239.1 573.2 L1239.6 573.2 L1240.2 571.7 L1240.8 572.7 L1241.3 572.4 L1241.9 570.6 L1242.4 572.3 L1243 570.5 L1243.6 572.1 L1244.1 570.3 L1244.7 571.5 L1245.2 574.1 L1245.8 570.6 L1246.4 572.3 L1246.9 574.4 L1247.5 571.9 L1248 571.9 L1248.6 573.6 L1249.2 572.8 L1249.7 571.4 L1250.3 570.4 L1250.8 570.7 L1251.4 570.6 L1252 570.7 L1252.5 575 L1253.1 572.9 L1253.6 571.8 L1254.2 575.2 L1254.8 571.2 L1255.3 571 L1255.9 573 L1256.5 572.5 L1257 573.2 L1257.6 572.1 L1258.1 572.1 L1258.7 572.1 L1259.3 573.3 L1259.8 571.6 L1260.4 572.5 L1260.9 570.9 L1261.5 571.7 L1262.1 573.8 L1262.6 573.7 L1263.2 572 L1263.7 572.6 L1264.3 571.5 L1264.9 571.1 L1265.4 572 L1266 574 L1266.5 573.5 L1267.1 571.4 L1267.7 573.3 L1268.2 570.8 L1268.8 572.2 L1269.3 571.4 L1269.9 573.1 L1270.5 572.2 L1271 575.2 L1271.6 572.3 L1272.1 571.4 L1272.7 573.1 L1273.3 573 L1273.8 572.1 L1274.4 572 L1275 573 L1275.5 571.3 L1276.1 574 L1276.6 570.8 L1277.2 573.7 L1277.8 573 L1278.3 570.5 L1278.9 573.2 L1279.4 574 L1280 572 L1280.6 573.1 L1281.1 573.4 L1281.7 572.9 L1282.2 572.9 L1282.8 573.2 L1283.4 573.3 L1283.9 570.2 L1284.5 572.8 L1285 570.9 L1285.6 573.7 L1286.2 571.4 L1286.7 573.5 L1287.3 572.6 L1287.8 571.3 L1288.4 572.7 L1289 574.4 L1289.5 572.7 L1290.1 572.2 L1290.6 571.4 L1291.2 573.2 L1291.8 572.4 L1292.3 572 L1292.9 574 L1293.5 572.2 L1294 573 L1294.6 571.5 L1295.1 572.2 L1295.7 572.3 L1296.3 574.9 L1296.8 572.2 L1297.4 572.5 L1297.9 573.2 L1298.5 572.7 L1299.1 573.5 L1299.6 571.9 L1300.2 571.3 L1300.7 571.4 L1301.3 572.7 L1301.9 570.1 L1302.4 571.1 L1303 573.2 L1303.5 572.2 L1304.1 574 L1304.7 572.2 L1305.2 571.2 L1305.8 570.6 L1306.3 572.5 L1306.9 574.1 L1307.5 572.3 L1308 570.5 L1308.6 571.9 L1309.1 570.6 L1309.7 571.1 L1310.3 570.2 L1310.8 571.4 L1311.4 572.8 L1312 571.5 L1312.5 569.1 L1313.1 572.7 L1313.6 574.2 L1314.2 569.6 L1314.8 571.6 L1315.3 572.8 L1315.9 572.8 L1316.4 573.9 L1317 571.2 L1317.6 571.9 L1318.1 572.8 L1318.7 572.6 L1319.2 572.6 L1319.8 570.8 L1320.4 572.3 L1320.9 570.4 L1321.5 573 L1322 572.8 L1322.6 572.6 L1323.2 572.7 L1323.7 572.2 L1324.3 570.9 L1324.8 570.6 L1325.4 573.3 L1326 570.6 L1326.5 571.9 L1327.1 570.2 L1327.6 572.3 L1328.2 573 L1328.8 571.1 L1329.3 571.3 L1329.9 572.6 L1330.5 572 L1331 571.9 L1331.6 571.7 L1332.1 574.1 L1332.7 573.5 L1333.3 572 L1333.8 571.8 L1334.4 572.7 L1334.9 574.1 L1335.5 570.5 L1336.1 572.4 L1336.6 573.3 L1337.2 570.2 L1337.7 570.7 L1338.3 570.8 L1338.9 571.1 L1339.4 571.4 L1340 573.2 L1340.5 572 L1341.1 571.6 L1341.7 571.3 L1342.2 571.5 L1342.8 573.2 L1343.3 572.8 L1343.9 572.4 L1344.5 572.3 L1345 573.1 L1345.6 574.2 L1346.2 573.5 L1346.7 571.7 L1347.3 572.1 L1347.8 571.4 L1348.4 574.3 L1349 572.5 L1349.5 571 L1350.1 574.3 L1350.6 573.3 L1351.2 574 L1351.8 570.6 L1352.3 572 L1352.9 572.7 L1353.4 571.9 L1354 572.2 L1354.6 571 L1355.1 570.7 L1355.7 571 L1356.2 571.7 L1356.8 571.2 L1357.4 571.1 L1357.9 570.7 L1358.5 574.2 L1359 571.7 L1359.6 572 L1360.2 571.9 L1360.7 572.3 L1361.3 572.1 L1361.8 571.5 L1362.4 571.8 L1363 571.9 L1363.5 573.3 L1364.1 573.5 L1364.7 572.9 L1365.2 574.1 L1365.8 572.7 L1366.3 573 L1366.9 574.2 L1367.5 574.3 L1368 572.6 L1368.6 572.7 L1369.1 569.5 L1369.7 571 L1370.3 573 L1370.8 572.6 L1371.4 573.2 L1371.9 573 L1372.5 572.5 L1373.1 572.1 L1373.6 572.8 L1374.2 571.1 L1374.7 571.3 L1375.3 569.8 L1375.9 573.6 L1376.4 571.3 L1377 572.5 L1377.5 573.9 L1378.1 572.4 L1378.7 574 L1379.2 572.1 L1379.8 568.9 L1380.3 570.5 L1380.9 569.9 L1381.5 570.7 L1382 573.9 L1382.6 571.6 L1383.2 571.9 L1383.7 571.5 L1384.3 573.3 L1384.8 574.4 L1385.4 569.6 L1386 570.7 L1386.5 571.7 L1387.1 572.6 L1387.6 571.8 L1388.2 573.5 L1388.8 570.9 L1389.3 571.9 L1389.9 572.2 L1390.4 572.6 L1391 572.1 L1391.6 571.9 L1392.1 572.5 L1392.7 570.9 L1393.2 571.8 L1393.8 572.2 L1394.4 573.1 L1394.9 570.6 L1395.5 570.5 L1396 571.3 L1396.6 574.2 L1397.2 572.5 L1397.7 570.9 L1398.3 572 L1398.8 570.6 L1399.4 572.6 L1400 571.1 L1400.5 571.4 L1401.1 574.9 L1401.7 572.5 L1402.2 572.3 L1402.8 572.8 L1403.3 573.1 L1403.9 570.2 L1404.5 572.2 L1405 571.1 L1405.6 573.6 L1406.1 574.5 L1406.7 572.6 L1407.3 571.6 L1407.8 572.9 L1408.4 571.4 L1408.9 571.1 L1409.5 572.6 L1410.1 572.1 L1410.6 572.9 L1411.2 570.8 L1411.7 570 L1412.3 571.5 L1412.9 572.6 L1413.4 572.9 L1414 572.4 L1414.5 571 L1415.1 572.9 L1415.7 570.3 L1416.2 573.5 L1416.8 572.1 L1417.3 570.5 L1417.9 570 L1418.5 572.5 L1419 571.1 L1419.6 569.1 L1420.2 570.7 L1420.7 574.6 L1421.3 571.7 L1421.8 569.3 L1422.4 573.4 L1423 571 L1423.5 574.5 L1424.1 570.2 L1424.6 573 L1425.2 571.1 L1425.8 571 L1426.3 575.2 L1426.9 573.7 L1427.4 571.7 L1428 573.8 L1428.6 572.1 L1429.1 573.2 L1429.7 570.5 L1430.2 572.7 L1430.8 573.1 L1431.4 571.3 L1431.9 570.6 L1432.5 572.2 L1433 571.7 L1433.6 571.5 L1434.2 572.6 L1434.7 573.4 L1435.3 571.4 L1435.9 572.5 L1436.4 573.7 L1437 571.1 L1437.5 571.5 L1438.1 571.9 L1438.7 572.9 L1439.2 572.3 L1439.8 571.3 L1440.3 571.5 L1440.9 573 L1441.5 573.1 L1442 571.7 L1442.6 571.8 L1443.1 571.1 L1443.7 573.4 L1444.3 571 L1444.8 570 L1445.4 570.9 L1445.9 571.9 L1446.5 571 L1447.1 573.6 L1447.6 572.6 L1448.2 569.6 L1448.7 574 L1449.3 573.4 L1449.9 571.1 L1450.4 572.8 L1451 572.7 L1451.5 573.4 L1452.1 570.1 L1452.7 572.8 L1453.2 572.4 L1453.8 574.2 L1454.4 571.2 L1454.9 572.1 L1455.5 571.5 L1456 570.2 L1456.6 571.9 L1457.2 573.4 L1457.7 573.2 L1458.3 572 L1458.8 570.5 L1459.4 573.5 L1460 572.3 L1460.5 572.2 L1461.1 571.3 L1461.6 573.1 L1462.2 571.7 L1462.8 571.1 L1463.3 572.1 L1463.9 572.2 L1464.4 571.3 L1465 571.4 L1465.6 570.6 L1466.1 573.3 L1466.7 570.6 L1467.2 572.3 L1467.8 573.4 L1468.4 572.7 L1468.9 573.5 L1469.5 572.3 L1470 570.8 L1470.6 574.7 L1471.2 573.4 L1471.7 571.2 L1472.3 572.4 L1472.9 571.1 L1473.4 573.6 L1474 572.1 L1474.5 575.1 L1475.1 573 L1475.7 571.2 L1476.2 570.6 L1476.8 570.1 L1477.3 572.1 L1477.9 573.1 L1478.5 572.5 L1479 574.3 L1479.6 570.5 L1480.1 570.7 L1480.7 573.1" fill="none" stroke="#73BF69" stroke-width="1.1" stroke-linejoin="round" />
<path d="M976.7 444.7 L977.3 444.7 L977.8 443.7 L978.4 443.7 L978.9 441.6 L979.5 442.7 L980.1 442.7 L980.6 443.7 L981.2 442.7 L981.7 442.7 L982.3 442.7 L982.9 443.7 L983.4 443.7 L984 443.7 L984.5 442.7 L985.1 445.7 L985.7 444.7 L986.2 442.7 L986.8 443.7 L987.4 443.7 L987.9 443.7 L988.5 443.7 L989 443.7 L989.6 443.7 L990.2 443.7 L990.7 440.6 L991.3 442.7 L991.8 442.7 L992.4 443.7 L993 443.7 L993.5 443.7 L994.1 443.7 L994.6 442.7 L995.2 445.7 L995.8 442.7 L996.3 443.7 L996.9 440.6 L997.4 441.6 L998 442.7 L998.6 440.6 L999.1 441.6 L999.7 441.6 L1000.2 443.7 L1000.8 445.7 L1001.4 444.7 L1001.9 443.7 L1002.5 441.6 L1003 442.7 L1003.6 443.7 L1004.2 442.7 L1004.7 443.7 L1005.3 444.7 L1005.9 442.7 L1006.4 441.6 L1007 443.7 L1007.5 440.6 L1008.1 440.6 L1008.7 443.7 L1009.2 442.7 L1009.8 444.7 L1010.3 442.7 L1010.9 443.7 L1011.5 443.7 L1012 443.7 L1012.6 442.7 L1013.1 443.7 L1013.7 440.6 L1014.3 443.7 L1014.8 444.7 L1015.4 443.7 L1015.9 444.7 L1016.5 442.7 L1017.1 442.7 L1017.6 442.7 L1018.2 442.7 L1018.7 442.7 L1019.3 443.7 L1019.9 443.7 L1020.4 442.7 L1021 444.7 L1021.5 442.7 L1022.1 443.7 L1022.7 441.6 L1023.2 442.7 L1023.8 440.6 L1024.4 443.7 L1024.9 441.6 L1025.5 443.7 L1026 442.7 L1026.6 443.7 L1027.2 443.7 L1027.7 440.6 L1028.3 443.7 L1028.8 442.7 L1029.4 441.6 L1030 443.7 L1030.5 443.7 L1031.1 440.6 L1031.6 443.7 L1032.2 442.7 L1032.8 443.7 L1033.3 443.7 L1033.9 443.7 L1034.4 442.7 L1035 443.7 L1035.6 444.7 L1036.1 443.7 L1036.7 442.7 L1037.2 443.7 L1037.8 443.7 L1038.4 441.6 L1038.9 443.7 L1039.5 443.7 L1040.1 442.7 L1040.6 443.7 L1041.2 443.7 L1041.7 445.7 L1042.3 443.7 L1042.9 443.7 L1043.4 443.7 L1044 442.7 L1044.5 441.6 L1045.1 443.7 L1045.7 443.7 L1046.2 443.7 L1046.8 443.7 L1047.3 441.6 L1047.9 442.7 L1048.5 440.6 L1049 441.6 L1049.6 440.6 L1050.1 442.7 L1050.7 443.7 L1051.3 443.7 L1051.8 442.7 L1052.4 443.7 L1052.9 443.7 L1053.5 443.7 L1054.1 440.6 L1054.6 443.7 L1055.2 442.7 L1055.7 443.7 L1056.3 442.7 L1056.9 443.7 L1057.4 444.7 L1058 443.7 L1058.6 442.7 L1059.1 443.7 L1059.7 443.7 L1060.2 442.7 L1060.8 443.7 L1061.4 443.7 L1061.9 443.7 L1062.5 443.7 L1063 443.7 L1063.6 442.7 L1064.2 442.7 L1064.7 445.7 L1065.3 444.7 L1065.8 445.7 L1066.4 443.7 L1067 443.7 L1067.5 443.7 L1068.1 442.7 L1068.6 442.7 L1069.2 441.6 L1069.8 442.7 L1070.3 443.7 L1070.9 443.7 L1071.4 442.7 L1072 443.7 L1072.6 443.7 L1073.1 443.7 L1073.7 443.7 L1074.2 442.7 L1074.8 443.7 L1075.4 443.7 L1075.9 443.7 L1076.5 443.7 L1077.1 443.7 L1077.6 442.7 L1078.2 443.7 L1078.7 443.7 L1079.3 442.7 L1079.9 443.7 L1080.4 440.6 L1081 444.7 L1081.5 442.7 L1082.1 443.7 L1082.7 442.7 L1083.2 442.7 L1083.8 443.7 L1084.3 443.7 L1084.9 442.7 L1085.5 443.7 L1086 443.7 L1086.6 441.6 L1087.1 443.7 L1087.7 442.7 L1088.3 444.7 L1088.8 442.7 L1089.4 443.7 L1089.9 445.7 L1090.5 443.7 L1091.1 443.7 L1091.6 442.7 L1092.2 443.7 L1092.7 443.7 L1093.3 441.6 L1093.9 442.7 L1094.4 443.7 L1095 443.7 L1095.6 443.7 L1096.1 443.7 L1096.7 443.7 L1097.2 442.7 L1097.8 443.7 L1098.4 443.7 L1098.9 443.7 L1099.5 444.7 L1100 443.7 L1100.6 441.6 L1101.2 443.7 L1101.7 442.7 L1102.3 443.7 L1102.8 443.7 L1103.4 441.6 L1104 443.7 L1104.5 443.7 L1105.1 443.7 L1105.6 443.7 L1106.2 441.6 L1106.8 442.7 L1107.3 444.7 L1107.9 442.7 L1108.4 443.7 L1109 442.7 L1109.6 441.6 L1110.1 442.7 L1110.7 443.7 L1111.2 443.7 L1111.8 443.7 L1112.4 441.6 L1112.9 443.7 L1113.5 442.7 L1114.1 443.7 L1114.6 444.7 L1115.2 441.6 L1115.7 444.7 L1116.3 441.6 L1116.9 443.7 L1117.4 443.7 L1118 443.7 L1118.5 443.7 L1119.1 443.7 L1119.7 442.7 L1120.2 444.7 L1120.8 442.7 L1121.3 441.6 L1121.9 443.7 L1122.5 443.7 L1123 445.7 L1123.6 443.7 L1124.1 443.7 L1124.7 443.7 L1125.3 443.7 L1125.8 440.6 L1126.4 445.7 L1126.9 442.7 L1127.5 443.7 L1128.1 443.7 L1128.6 443.7 L1129.2 442.7 L1129.8 442.7 L1130.3 443.7 L1130.9 442.7 L1131.4 443.7 L1132 442.7 L1132.6 444.7 L1133.1 441.6 L1133.7 443.7 L1134.2 442.7 L1134.8 442.7 L1135.4 443.7 L1135.9 440.6 L1136.5 443.7 L1137 442.7 L1137.6 443.7 L1138.2 445.7 L1138.7 441.6 L1139.3 442.7 L1139.8 443.7 L1140.4 443.7 L1141 443.7 L1141.5 442.7 L1142.1 440.6 L1142.6 443.7 L1143.2 442.7 L1143.8 443.7 L1144.3 443.7 L1144.9 442.7 L1145.4 444.7 L1146 442.7 L1146.6 443.7 L1147.1 444.7 L1147.7 443.7 L1148.3 441.6 L1148.8 442.7 L1149.4 441.6 L1149.9 441.6 L1150.5 443.7 L1151.1 442.7 L1151.6 443.7 L1152.2 442.7 L1152.7 445.7 L1153.3 442.7 L1153.9 443.7 L1154.4 443.7 L1155 442.7 L1155.5 440.6 L1156.1 442.7 L1156.7 441.6 L1157.2 443.7 L1157.8 444.7 L1158.3 442.7 L1158.9 442.7 L1159.5 440.6 L1160 440.6 L1160.6 443.7 L1161.1 441.6 L1161.7 441.6 L1162.3 443.7 L1162.8 441.6 L1163.4 442.7 L1163.9 443.7 L1164.5 441.6 L1165.1 443.7 L1165.6 442.7 L1166.2 443.7 L1166.8 443.7 L1167.3 442.7 L1167.9 443.7 L1168.4 443.7 L1169 444.7 L1169.6 443.7 L1170.1 443.7 L1170.7 443.7 L1171.2 441.6 L1171.8 442.7 L1172.4 441.6 L1172.9 443.7 L1173.5 442.7 L1174 443.7 L1174.6 443.7 L1175.2 442.7 L1175.7 443.7 L1176.3 443.7 L1176.8 441.6 L1177.4 443.7 L1178 441.6 L1178.5 441.6 L1179.1 443.7 L1179.6 442.7 L1180.2 441.6 L1180.8 440.6 L1181.3 443.7 L1181.9 443.7 L1182.4 443.7 L1183 443.7 L1183.6 443.7 L1184.1 443.7 L1184.7 442.7 L1185.3 444.7 L1185.8 443.7 L1186.4 442.7 L1186.9 443.7 L1187.5 443.7 L1188.1 440.6 L1188.6 443.7 L1189.2 442.7 L1189.7 443.7 L1190.3 442.7 L1190.9 444.7 L1191.4 443.7 L1192 441.6 L1192.5 443.7 L1193.1 442.7 L1193.7 441.6 L1194.2 442.7 L1194.8 443.7 L1195.3 441.6 L1195.9 443.7 L1196.5 442.7 L1197 443.7 L1197.6 442.7 L1198.1 441.6 L1198.7 441.6 L1199.3 442.7 L1199.8 443.7 L1200.4 443.7 L1200.9 443.7 L1201.5 443.7 L1202.1 443.7 L1202.6 444.7 L1203.2 443.7 L1203.8 441.6 L1204.3 443.7 L1204.9 443.7 L1205.4 443.7 L1206 443.7 L1206.6 443.7 L1207.1 443.7 L1207.7 443.7 L1208.2 443.7 L1208.8 440.6 L1209.4 444.7 L1209.9 443.7 L1210.5 442.7 L1211 444.7 L1211.6 443.7 L1212.2 443.7 L1212.7 443.7 L1213.3 443.7 L1213.8 438.1 L1214.4 443.7 L1215 443.7 L1215.5 441.6 L1216.1 443.7 L1216.6 441.6 L1217.2 442.7 L1217.8 443.7 L1218.3 441.6 L1218.9 443.7 L1219.4 440.6 L1220 444.7 L1220.6 442.7 L1221.1 442.7 L1221.7 444.7 L1222.3 441.6 L1222.8 441.6 L1223.4 440.6 L1223.9 444.7 L1224.5 441.6 L1225.1 445.7 L1225.6 437.8 L1226.2 442.7 L1226.7 442.7 L1227.3 443.7 L1227.9 443.7 L1228.4 443.7 L1229 444.7 L1229.5 443.7 L1230.1 443.7 L1230.7 440.6 L1231.2 443.7 L1231.8 444.7 L1232.3 443.7 L1232.9 443.7 L1233.5 443.7 L1234 443.7 L1234.6 444.7 L1235.1 440.6 L1235.7 441.6 L1236.3 443.7 L1236.8 442.7 L1237.4 436.6 L1238 441.6 L1238.5 443.7 L1239.1 443.7 L1239.6 442.7 L1240.2 443.7 L1240.8 443.7 L1241.3 444.7 L1241.9 443.7 L1242.4 443.7 L1243 443.7 L1243.6 443.7 L1244.1 443.7 L1244.7 443.7 L1245.2 443.7 L1245.8 443.7 L1246.4 443.7 L1246.9 442.7 L1247.5 443.7 L1248 443.7 L1248.6 441.6 L1249.2 443.7 L1249.7 443.7 L1250.3 441.6 L1250.8 443.7 L1251.4 441.6 L1252 443.7 L1252.5 442.7 L1253.1 441.6 L1253.6 443.7 L1254.2 441.6 L1254.8 442.7 L1255.3 443.7 L1255.9 445.7 L1256.5 443.7 L1257 443.7 L1257.6 442.7 L1258.1 443.7 L1258.7 441.6 L1259.3 442.7 L1259.8 442.7 L1260.4 442.7 L1260.9 445.7 L1261.5 445.7 L1262.1 441.6 L1262.6 443.7 L1263.2 443.7 L1263.7 442.7 L1264.3 443.7 L1264.9 443.7 L1265.4 445.7 L1266 443.7 L1266.5 444.7 L1267.1 442.7 L1267.7 444.7 L1268.2 443.7 L1268.8 443.7 L1269.3 441.6 L1269.9 443.7 L1270.5 443.7 L1271 443.7 L1271.6 443.7 L1272.1 443.7 L1272.7 442.7 L1273.3 443.7 L1273.8 444.7 L1274.4 442.7 L1275 443.7 L1275.5 440.6 L1276.1 443.7 L1276.6 443.7 L1277.2 442.7 L1277.8 443.7 L1278.3 442.7 L1278.9 443.7 L1279.4 443.7 L1280 444.7 L1280.6 441.6 L1281.1 442.7 L1281.7 442.7 L1282.2 440.6 L1282.8 443.7 L1283.4 443.7 L1283.9 443.7 L1284.5 443.7 L1285 443.7 L1285.6 443.7 L1286.2 443.7 L1286.7 443.7 L1287.3 443.7 L1287.8 442.7 L1288.4 441.6 L1289 440.6 L1289.5 442.7 L1290.1 442.7 L1290.6 444.7 L1291.2 443.7 L1291.8 443.7 L1292.3 441.6 L1292.9 442.7 L1293.5 443.7 L1294 443.7 L1294.6 443.7 L1295.1 443.7 L1295.7 443.7 L1296.3 443.7 L1296.8 441.6 L1297.4 441.6 L1297.9 442.7 L1298.5 443.7 L1299.1 443.7 L1299.6 441.6 L1300.2 445.7 L1300.7 443.7 L1301.3 442.7 L1301.9 442.7 L1302.4 442.7 L1303 443.7 L1303.5 442.7 L1304.1 443.7 L1304.7 443.7 L1305.2 442.7 L1305.8 442.7 L1306.3 442.7 L1306.9 441.6 L1307.5 442.7 L1308 443.7 L1308.6 443.7 L1309.1 441.6 L1309.7 441.6 L1310.3 441.6 L1310.8 442.7 L1311.4 443.7 L1312 443.7 L1312.5 443.7 L1313.1 442.7 L1313.6 442.7 L1314.2 443.7 L1314.8 444.7 L1315.3 445.7 L1315.9 440.6 L1316.4 443.7 L1317 443.7 L1317.6 443.7 L1318.1 441.6 L1318.7 442.7 L1319.2 443.7 L1319.8 440.6 L1320.4 442.7 L1320.9 443.7 L1321.5 443.7 L1322 442.7 L1322.6 443.7 L1323.2 442.7 L1323.7 443.7 L1324.3 442.7 L1324.8 443.7 L1325.4 444.7 L1326 443.7 L1326.5 443.7 L1327.1 442.7 L1327.6 443.7 L1328.2 442.7 L1328.8 444.7 L1329.3 443.7 L1329.9 441.6 L1330.5 442.7 L1331 441.6 L1331.6 443.7 L1332.1 443.7 L1332.7 443.7 L1333.3 443.7 L1333.8 443.7 L1334.4 443.7 L1334.9 443.7 L1335.5 443.7 L1336.1 443.7 L1336.6 442.7 L1337.2 443.7 L1337.7 443.7 L1338.3 442.7 L1338.9 440.6 L1339.4 443.7 L1340 442.7 L1340.5 442.7 L1341.1 440.6 L1341.7 442.7 L1342.2 443.7 L1342.8 443.7 L1343.3 441.6 L1343.9 443.7 L1344.5 443.7 L1345 440.6 L1345.6 443.7 L1346.2 443.7 L1346.7 443.7 L1347.3 443.7 L1347.8 442.7 L1348.4 443.7 L1349 443.7 L1349.5 443.7 L1350.1 441.6 L1350.6 443.7 L1351.2 442.7 L1351.8 443.7 L1352.3 443.7 L1352.9 442.7 L1353.4 443.7 L1354 443.7 L1354.6 442.7 L1355.1 444.7 L1355.7 442.7 L1356.2 443.7 L1356.8 441.6 L1357.4 444.7 L1357.9 443.7 L1358.5 443.7 L1359 444.7 L1359.6 444.7 L1360.2 443.7 L1360.7 442.7 L1361.3 440.6 L1361.8 442.7 L1362.4 442.7 L1363 442.7 L1363.5 443.7 L1364.1 443.7 L1364.7 443.7 L1365.2 442.7 L1365.8 443.7 L1366.3 442.7 L1366.9 443.7 L1367.5 443.7 L1368 444.7 L1368.6 443.7 L1369.1 435.7 L1369.7 443.7 L1370.3 443.7 L1370.8 443.7 L1371.4 442.7 L1371.9 441.6 L1372.5 443.7 L1373.1 444.7 L1373.6 442.7 L1374.2 443.7 L1374.7 442.7 L1375.3 443.7 L1375.9 442.7 L1376.4 443.7 L1377 442.7 L1377.5 442.7 L1378.1 441.6 L1378.7 442.7 L1379.2 442.7 L1379.8 442.7 L1380.3 443.7 L1380.9 443.7 L1381.5 443.7 L1382 443.7 L1382.6 443.7 L1383.2 443.7 L1383.7 442.7 L1384.3 442.7 L1384.8 442.7 L1385.4 444.7 L1386 443.7 L1386.5 442.7 L1387.1 443.7 L1387.6 442.7 L1388.2 443.7 L1388.8 443.7 L1389.3 443.7 L1389.9 442.7 L1390.4 443.7 L1391 444.7 L1391.6 443.7 L1392.1 443.7 L1392.7 444.7 L1393.2 442.7 L1393.8 443.7 L1394.4 441.6 L1394.9 443.7 L1395.5 444.7 L1396 442.7 L1396.6 441.6 L1397.2 440.6 L1397.7 442.7 L1398.3 444.7 L1398.8 443.7 L1399.4 443.7 L1400 441.6 L1400.5 443.7 L1401.1 442.7 L1401.7 445.7 L1402.2 442.7 L1402.8 440.6 L1403.3 443.7 L1403.9 442.7 L1404.5 442.7 L1405 443.7 L1405.6 443.7 L1406.1 441.6 L1406.7 443.7 L1407.3 443.7 L1407.8 442.7 L1408.4 444.7 L1408.9 441.6 L1409.5 442.7 L1410.1 443.7 L1410.6 440.6 L1411.2 443.7 L1411.7 443.7 L1412.3 441.6 L1412.9 440.6 L1413.4 443.7 L1414 440.6 L1414.5 443.7 L1415.1 442.7 L1415.7 443.7 L1416.2 443.7 L1416.8 443.7 L1417.3 443.7 L1417.9 443.7 L1418.5 442.7 L1419 443.7 L1419.6 442.7 L1420.2 443.7 L1420.7 442.7 L1421.3 442.7 L1421.8 443.7 L1422.4 444.7 L1423 443.7 L1423.5 443.7 L1424.1 443.7 L1424.6 443.7 L1425.2 444.7 L1425.8 442.7 L1426.3 442.7 L1426.9 443.7 L1427.4 443.7 L1428 444.7 L1428.6 441.6 L1429.1 442.7 L1429.7 443.7 L1430.2 442.7 L1430.8 443.7 L1431.4 443.7 L1431.9 443.7 L1432.5 442.7 L1433 445.7 L1433.6 442.7 L1434.2 442.7 L1434.7 443.7 L1435.3 443.7 L1435.9 443.7 L1436.4 443.7 L1437 443.7 L1437.5 443.7 L1438.1 441.6 L1438.7 444.7 L1439.2 441.6 L1439.8 442.7 L1440.3 443.7 L1440.9 443.7 L1441.5 441.6 L1442 444.7 L1442.6 442.7 L1443.1 442.7 L1443.7 442.7 L1444.3 443.7 L1444.8 442.7 L1445.4 443.7 L1445.9 441.6 L1446.5 443.7 L1447.1 442.7 L1447.6 442.7 L1448.2 442.7 L1448.7 443.7 L1449.3 444.7 L1449.9 441.6 L1450.4 443.7 L1451 442.7 L1451.5 440.6 L1452.1 441.6 L1452.7 442.7 L1453.2 444.7 L1453.8 443.7 L1454.4 442.7 L1454.9 442.7 L1455.5 443.7 L1456 444.7 L1456.6 444.7 L1457.2 443.7 L1457.7 442.7 L1458.3 441.6 L1458.8 442.7 L1459.4 443.7 L1460 441.6 L1460.5 443.7 L1461.1 443.7 L1461.6 442.7 L1462.2 442.7 L1462.8 443.7 L1463.3 443.7 L1463.9 445.7 L1464.4 441.6 L1465 443.7 L1465.6 444.7 L1466.1 442.7 L1466.7 443.7 L1467.2 442.7 L1467.8 441.6 L1468.4 440.6 L1468.9 442.7 L1469.5 442.7 L1470 443.7 L1470.6 443.7 L1471.2 443.7 L1471.7 443.7 L1472.3 444.7 L1472.9 443.7 L1473.4 442.7 L1474 442.7 L1474.5 443.7 L1475.1 441.6 L1475.7 443.7 L1476.2 443.7 L1476.8 442.7 L1477.3 443.7 L1477.9 444.7 L1478.5 443.7 L1479 443.7 L1479.6 443.7 L1480.1 443.7 L1480.7 443.7" fill="none" stroke="#f2780f" stroke-width="1.05" stroke-linejoin="round" />
<path d="M976.7 649.2 L977.3 648.5 L977.8 649.2 L978.4 648.5 L978.9 648.5 L979.5 649.2 L980.1 649.2 L980.6 647.7 L981.2 649.2 L981.7 649.2 L982.3 650.8 L982.9 649.2 L983.4 647.7 L984 649.2 L984.5 648.5 L985.1 649.2 L985.7 648.5 L986.2 646.9 L986.8 648.5 L987.4 647.7 L987.9 648.5 L988.5 649.2 L989 647.7 L989.6 648.5 L990.2 649.2 L990.7 649.2 L991.3 646.9 L991.8 649.2 L992.4 648.5 L993 646.9 L993.5 648.5 L994.1 650 L994.6 649.2 L995.2 647.7 L995.8 649.2 L996.3 650 L996.9 646.9 L997.4 649.2 L998 649.2 L998.6 649.2 L999.1 650 L999.7 649.2 L1000.2 648.5 L1000.8 649.2 L1001.4 648.5 L1001.9 649.2 L1002.5 649.2 L1003 648.5 L1003.6 648.5 L1004.2 646.9 L1004.7 648.5 L1005.3 650 L1005.9 647.7 L1006.4 650.8 L1007 648.5 L1007.5 649.2 L1008.1 646.9 L1008.7 650 L1009.2 646.9 L1009.8 648.5 L1010.3 648.5 L1010.9 649.2 L1011.5 647.7 L1012 648.5 L1012.6 649.2 L1013.1 649.2 L1013.7 647.7 L1014.3 650.8 L1014.8 649.2 L1015.4 647.7 L1015.9 649.2 L1016.5 649.2 L1017.1 649.2 L1017.6 647.7 L1018.2 646.9 L1018.7 649.2 L1019.3 648.5 L1019.9 649.2 L1020.4 648.5 L1021 649.2 L1021.5 646.9 L1022.1 650.8 L1022.7 648.5 L1023.2 650.8 L1023.8 649.2 L1024.4 649.2 L1024.9 648.5 L1025.5 649.2 L1026 649.2 L1026.6 649.2 L1027.2 648.5 L1027.7 649.2 L1028.3 649.2 L1028.8 646.9 L1029.4 649.2 L1030 650 L1030.5 646.9 L1031.1 649.2 L1031.6 649.2 L1032.2 648.5 L1032.8 648.5 L1033.3 648.5 L1033.9 648.5 L1034.4 648.5 L1035 650 L1035.6 648.5 L1036.1 649.2 L1036.7 648.5 L1037.2 649.2 L1037.8 649.2 L1038.4 650.8 L1038.9 648.5 L1039.5 648.5 L1040.1 649.2 L1040.6 649.2 L1041.2 648.5 L1041.7 649.2 L1042.3 648.5 L1042.9 648.5 L1043.4 649.2 L1044 648.5 L1044.5 649.2 L1045.1 648.5 L1045.7 649.2 L1046.2 648.5 L1046.8 648.5 L1047.3 649.2 L1047.9 649.2 L1048.5 648.5 L1049 650 L1049.6 649.2 L1050.1 649.2 L1050.7 648.5 L1051.3 649.2 L1051.8 649.2 L1052.4 649.2 L1052.9 649.2 L1053.5 648.5 L1054.1 649.2 L1054.6 649.2 L1055.2 647.7 L1055.7 649.2 L1056.3 648.5 L1056.9 648.5 L1057.4 649.2 L1058 649.2 L1058.6 647.7 L1059.1 649.2 L1059.7 649.2 L1060.2 649.2 L1060.8 648.5 L1061.4 649.2 L1061.9 649.2 L1062.5 649.2 L1063 647.7 L1063.6 649.2 L1064.2 647.7 L1064.7 649.2 L1065.3 649.2 L1065.8 648.5 L1066.4 646.9 L1067 649.2 L1067.5 649.2 L1068.1 649.2 L1068.6 648.5 L1069.2 649.2 L1069.8 647.7 L1070.3 647.7 L1070.9 649.2 L1071.4 649.2 L1072 647.7 L1072.6 648.5 L1073.1 647.7 L1073.7 649.2 L1074.2 649.2 L1074.8 649.2 L1075.4 647.7 L1075.9 649.2 L1076.5 649.2 L1077.1 649.2 L1077.6 649.2 L1078.2 649.2 L1078.7 650 L1079.3 649.2 L1079.9 649.2 L1080.4 650 L1081 646.9 L1081.5 650.8 L1082.1 649.2 L1082.7 650 L1083.2 650 L1083.8 649.2 L1084.3 647.7 L1084.9 647.7 L1085.5 648.5 L1086 648.5 L1086.6 649.2 L1087.1 649.2 L1087.7 649.2 L1088.3 649.2 L1088.8 648.5 L1089.4 649.2 L1089.9 647.7 L1090.5 649.2 L1091.1 646.9 L1091.6 648.5 L1092.2 650 L1092.7 646.9 L1093.3 646.9 L1093.9 648.5 L1094.4 649.2 L1095 647.7 L1095.6 649.2 L1096.1 649.2 L1096.7 648.5 L1097.2 648.5 L1097.8 649.2 L1098.4 650 L1098.9 648.5 L1099.5 649.2 L1100 649.2 L1100.6 646.9 L1101.2 649.2 L1101.7 647.7 L1102.3 649.2 L1102.8 649.2 L1103.4 648.5 L1104 647.7 L1104.5 649.2 L1105.1 647.7 L1105.6 650 L1106.2 647.7 L1106.8 647.7 L1107.3 649.2 L1107.9 648.5 L1108.4 646.9 L1109 649.2 L1109.6 649.2 L1110.1 649.2 L1110.7 648.5 L1111.2 649.2 L1111.8 649.2 L1112.4 647.7 L1112.9 649.2 L1113.5 649.2 L1114.1 649.2 L1114.6 649.2 L1115.2 649.2 L1115.7 650 L1116.3 647.7 L1116.9 649.2 L1117.4 648.5 L1118 649.2 L1118.5 649.2 L1119.1 649.2 L1119.7 648.5 L1120.2 648.5 L1120.8 649.2 L1121.3 649.2 L1121.9 649.2 L1122.5 649.2 L1123 648.5 L1123.6 648.5 L1124.1 649.2 L1124.7 649.2 L1125.3 649.2 L1125.8 649.2 L1126.4 648.5 L1126.9 647.7 L1127.5 649.2 L1128.1 647.7 L1128.6 648.5 L1129.2 649.2 L1129.8 649.2 L1130.3 649.2 L1130.9 648.5 L1131.4 649.2 L1132 648.5 L1132.6 649.2 L1133.1 649.2 L1133.7 648.5 L1134.2 648.5 L1134.8 649.2 L1135.4 649.2 L1135.9 649.2 L1136.5 646.9 L1137 650 L1137.6 649.2 L1138.2 646.9 L1138.7 647.7 L1139.3 649.2 L1139.8 649.2 L1140.4 649.2 L1141 647.7 L1141.5 648.5 L1142.1 646.9 L1142.6 647.7 L1143.2 648.5 L1143.8 648.5 L1144.3 648.5 L1144.9 649.2 L1145.4 648.5 L1146 649.2 L1146.6 649.2 L1147.1 647.7 L1147.7 649.2 L1148.3 649.2 L1148.8 649.2 L1149.4 646.9 L1149.9 649.2 L1150.5 649.2 L1151.1 647.7 L1151.6 649.2 L1152.2 647.7 L1152.7 648.5 L1153.3 647.7 L1153.9 650 L1154.4 648.5 L1155 647.7 L1155.5 649.2 L1156.1 647.7 L1156.7 648.5 L1157.2 648.5 L1157.8 649.2 L1158.3 647.7 L1158.9 650 L1159.5 649.2 L1160 649.2 L1160.6 648.5 L1161.1 647.7 L1161.7 649.2 L1162.3 649.2 L1162.8 649.2 L1163.4 648.5 L1163.9 647.7 L1164.5 649.2 L1165.1 649.2 L1165.6 649.2 L1166.2 649.2 L1166.8 649.2 L1167.3 649.2 L1167.9 648.5 L1168.4 650 L1169 649.2 L1169.6 647.7 L1170.1 649.2 L1170.7 648.5 L1171.2 647.7 L1171.8 648.5 L1172.4 648.5 L1172.9 649.2 L1173.5 648.5 L1174 646.9 L1174.6 649.2 L1175.2 649.2 L1175.7 647.7 L1176.3 650 L1176.8 648.5 L1177.4 649.2 L1178 648.5 L1178.5 649.2 L1179.1 649.2 L1179.6 649.2 L1180.2 648.5 L1180.8 649.2 L1181.3 649.2 L1181.9 648.5 L1182.4 650 L1183 649.2 L1183.6 648.5 L1184.1 649.2 L1184.7 647.7 L1185.3 648.5 L1185.8 649.2 L1186.4 649.2 L1186.9 649.2 L1187.5 649.2 L1188.1 649.2 L1188.6 649.2 L1189.2 649.2 L1189.7 649.2 L1190.3 647.7 L1190.9 649.2 L1191.4 650.8 L1192 649.2 L1192.5 648.5 L1193.1 649.2 L1193.7 647.7 L1194.2 647.7 L1194.8 648.5 L1195.3 649.2 L1195.9 648.5 L1196.5 647.7 L1197 649.2 L1197.6 648.5 L1198.1 650 L1198.7 649.2 L1199.3 649.2 L1199.8 649.2 L1200.4 648.5 L1200.9 648.5 L1201.5 650 L1202.1 647.7 L1202.6 649.2 L1203.2 649.2 L1203.8 649.2 L1204.3 649.2 L1204.9 648.5 L1205.4 647.7 L1206 646.9 L1206.6 649.2 L1207.1 646.9 L1207.7 649.2 L1208.2 649.2 L1208.8 648.5 L1209.4 649.2 L1209.9 649.2 L1210.5 647.7 L1211 649.2 L1211.6 649.2 L1212.2 648.5 L1212.7 648.5 L1213.3 649.2 L1213.8 649.2 L1214.4 649.2 L1215 649.2 L1215.5 649.2 L1216.1 648.5 L1216.6 650 L1217.2 649.2 L1217.8 648.5 L1218.3 649.2 L1218.9 649.2 L1219.4 648.5 L1220 649.2 L1220.6 646.9 L1221.1 646.9 L1221.7 649.2 L1222.3 650 L1222.8 649.2 L1223.4 647.7 L1223.9 647.7 L1224.5 649.2 L1225.1 648.5 L1225.6 648.5 L1226.2 647.7 L1226.7 649.2 L1227.3 647.7 L1227.9 650 L1228.4 648.5 L1229 648.5 L1229.5 649.2 L1230.1 649.2 L1230.7 649.2 L1231.2 648.5 L1231.8 648.5 L1232.3 648.5 L1232.9 649.2 L1233.5 648.5 L1234 648.5 L1234.6 649.2 L1235.1 646.9 L1235.7 648.5 L1236.3 649.2 L1236.8 650 L1237.4 638 L1238 640.5 L1238.5 648.5 L1239.1 648.5 L1239.6 648.5 L1240.2 648.5 L1240.8 649.2 L1241.3 649.2 L1241.9 649.2 L1242.4 649.2 L1243 648.5 L1243.6 647.7 L1244.1 648.5 L1244.7 648.5 L1245.2 649.2 L1245.8 649.2 L1246.4 649.2 L1246.9 646.9 L1247.5 649.2 L1248 648.5 L1248.6 649.2 L1249.2 647.7 L1249.7 649.2 L1250.3 649.2 L1250.8 649.2 L1251.4 648.5 L1252 647.7 L1252.5 649.2 L1253.1 647.7 L1253.6 649.2 L1254.2 649.2 L1254.8 649.2 L1255.3 649.2 L1255.9 647.7 L1256.5 648.5 L1257 649.2 L1257.6 649.2 L1258.1 649.2 L1258.7 647.7 L1259.3 647.7 L1259.8 647.7 L1260.4 648.5 L1260.9 649.2 L1261.5 649.2 L1262.1 649.2 L1262.6 648.5 L1263.2 648.5 L1263.7 649.2 L1264.3 649.2 L1264.9 647.7 L1265.4 649.2 L1266 647.7 L1266.5 646.9 L1267.1 650 L1267.7 649.2 L1268.2 648.5 L1268.8 648.5 L1269.3 648.5 L1269.9 650.8 L1270.5 648.5 L1271 649.2 L1271.6 646.9 L1272.1 649.2 L1272.7 648.5 L1273.3 648.5 L1273.8 649.2 L1274.4 647.7 L1275 648.5 L1275.5 649.2 L1276.1 648.5 L1276.6 649.2 L1277.2 649.2 L1277.8 648.5 L1278.3 649.2 L1278.9 648.5 L1279.4 648.5 L1280 649.2 L1280.6 648.5 L1281.1 650 L1281.7 646.9 L1282.2 649.2 L1282.8 647.7 L1283.4 648.5 L1283.9 649.2 L1284.5 649.2 L1285 649.2 L1285.6 649.2 L1286.2 648.5 L1286.7 650 L1287.3 649.2 L1287.8 646.9 L1288.4 648.5 L1289 649.2 L1289.5 647.7 L1290.1 648.5 L1290.6 650 L1291.2 648.5 L1291.8 648.5 L1292.3 649.2 L1292.9 647.7 L1293.5 650 L1294 646.9 L1294.6 649.2 L1295.1 647.7 L1295.7 649.2 L1296.3 649.2 L1296.8 649.2 L1297.4 649.2 L1297.9 649.2 L1298.5 649.2 L1299.1 649.2 L1299.6 648.5 L1300.2 648.5 L1300.7 649.2 L1301.3 648.5 L1301.9 649.2 L1302.4 649.2 L1303 647.7 L1303.5 649.2 L1304.1 649.2 L1304.7 646.9 L1305.2 648.5 L1305.8 649.2 L1306.3 649.2 L1306.9 648.5 L1307.5 648.5 L1308 649.2 L1308.6 649.2 L1309.1 649.2 L1309.7 647.7 L1310.3 649.2 L1310.8 649.2 L1311.4 649.2 L1312 649.2 L1312.5 649.2 L1313.1 649.2 L1313.6 649.2 L1314.2 649.2 L1314.8 649.2 L1315.3 649.2 L1315.9 649.2 L1316.4 649.2 L1317 649.2 L1317.6 649.2 L1318.1 649.2 L1318.7 648.5 L1319.2 649.2 L1319.8 649.2 L1320.4 649.2 L1320.9 649.2 L1321.5 650 L1322 649.2 L1322.6 649.2 L1323.2 649.2 L1323.7 649.2 L1324.3 648.5 L1324.8 649.2 L1325.4 649.2 L1326 649.2 L1326.5 648.5 L1327.1 649.2 L1327.6 647.7 L1328.2 649.2 L1328.8 650 L1329.3 649.2 L1329.9 649.2 L1330.5 649.2 L1331 647.7 L1331.6 648.5 L1332.1 649.2 L1332.7 649.2 L1333.3 648.5 L1333.8 650 L1334.4 648.5 L1334.9 649.2 L1335.5 649.2 L1336.1 649.2 L1336.6 649.2 L1337.2 649.2 L1337.7 649.2 L1338.3 648.5 L1338.9 646.9 L1339.4 649.2 L1340 650 L1340.5 649.2 L1341.1 647.7 L1341.7 650 L1342.2 650 L1342.8 649.2 L1343.3 649.2 L1343.9 648.5 L1344.5 650 L1345 649.2 L1345.6 649.2 L1346.2 647.7 L1346.7 649.2 L1347.3 649.2 L1347.8 649.2 L1348.4 648.5 L1349 650 L1349.5 649.2 L1350.1 648.5 L1350.6 648.5 L1351.2 647.7 L1351.8 648.5 L1352.3 650 L1352.9 649.2 L1353.4 649.2 L1354 649.2 L1354.6 647.7 L1355.1 649.2 L1355.7 649.2 L1356.2 649.2 L1356.8 648.5 L1357.4 648.5 L1357.9 648.5 L1358.5 649.2 L1359 649.2 L1359.6 649.2 L1360.2 648.5 L1360.7 649.2 L1361.3 649.2 L1361.8 647.7 L1362.4 648.5 L1363 649.2 L1363.5 649.2 L1364.1 647.7 L1364.7 648.5 L1365.2 646.9 L1365.8 646.9 L1366.3 649.2 L1366.9 646.9 L1367.5 648.5 L1368 649.2 L1368.6 649.2 L1369.1 649.2 L1369.7 649.2 L1370.3 650 L1370.8 649.2 L1371.4 648.5 L1371.9 649.2 L1372.5 649.2 L1373.1 648.5 L1373.6 649.2 L1374.2 649.2 L1374.7 649.2 L1375.3 648.5 L1375.9 648.5 L1376.4 649.2 L1377 649.2 L1377.5 650 L1378.1 649.2 L1378.7 648.5 L1379.2 649.2 L1379.8 647.7 L1380.3 648.5 L1380.9 647.7 L1381.5 648.5 L1382 649.2 L1382.6 649.2 L1383.2 649.2 L1383.7 647.7 L1384.3 649.2 L1384.8 649.2 L1385.4 650 L1386 649.2 L1386.5 646.9 L1387.1 649.2 L1387.6 649.2 L1388.2 649.2 L1388.8 647.7 L1389.3 648.5 L1389.9 648.5 L1390.4 647.7 L1391 646.9 L1391.6 649.2 L1392.1 648.5 L1392.7 649.2 L1393.2 649.2 L1393.8 647.7 L1394.4 648.5 L1394.9 647.7 L1395.5 649.2 L1396 648.5 L1396.6 649.2 L1397.2 648.5 L1397.7 649.2 L1398.3 649.2 L1398.8 649.2 L1399.4 649.2 L1400 648.5 L1400.5 648.5 L1401.1 649.2 L1401.7 648.5 L1402.2 648.5 L1402.8 649.2 L1403.3 649.2 L1403.9 650.8 L1404.5 649.2 L1405 649.2 L1405.6 649.2 L1406.1 649.2 L1406.7 649.2 L1407.3 650 L1407.8 648.5 L1408.4 646.9 L1408.9 650.8 L1409.5 648.5 L1410.1 650 L1410.6 648.5 L1411.2 649.2 L1411.7 650 L1412.3 646.9 L1412.9 650 L1413.4 649.2 L1414 647.7 L1414.5 649.2 L1415.1 650.8 L1415.7 650 L1416.2 649.2 L1416.8 650 L1417.3 649.2 L1417.9 649.2 L1418.5 648.5 L1419 649.2 L1419.6 648.5 L1420.2 648.5 L1420.7 649.2 L1421.3 647.7 L1421.8 649.2 L1422.4 649.2 L1423 649.2 L1423.5 647.7 L1424.1 647.7 L1424.6 649.2 L1425.2 649.2 L1425.8 649.2 L1426.3 649.2 L1426.9 649.2 L1427.4 649.2 L1428 647.7 L1428.6 648.5 L1429.1 650.8 L1429.7 650.8 L1430.2 646.9 L1430.8 649.2 L1431.4 649.2 L1431.9 649.2 L1432.5 649.2 L1433 648.5 L1433.6 648.5 L1434.2 649.2 L1434.7 647.7 L1435.3 649.2 L1435.9 649.2 L1436.4 646.9 L1437 647.7 L1437.5 649.2 L1438.1 649.2 L1438.7 647.7 L1439.2 649.2 L1439.8 649.2 L1440.3 648.5 L1440.9 648.5 L1441.5 649.2 L1442 649.2 L1442.6 649.2 L1443.1 647.7 L1443.7 649.2 L1444.3 650.8 L1444.8 647.7 L1445.4 650.8 L1445.9 649.2 L1446.5 649.2 L1447.1 649.2 L1447.6 649.2 L1448.2 649.2 L1448.7 649.2 L1449.3 648.5 L1449.9 649.2 L1450.4 649.2 L1451 649.2 L1451.5 647.7 L1452.1 649.2 L1452.7 649.2 L1453.2 649.2 L1453.8 649.2 L1454.4 648.5 L1454.9 648.5 L1455.5 650 L1456 647.7 L1456.6 649.2 L1457.2 649.2 L1457.7 647.7 L1458.3 647.7 L1458.8 648.5 L1459.4 647.7 L1460 648.5 L1460.5 649.2 L1461.1 649.2 L1461.6 649.2 L1462.2 648.5 L1462.8 646.9 L1463.3 646.9 L1463.9 649.2 L1464.4 648.5 L1465 650 L1465.6 647.7 L1466.1 648.5 L1466.7 649.2 L1467.2 648.5 L1467.8 649.2 L1468.4 649.2 L1468.9 648.5 L1469.5 650.8 L1470 648.5 L1470.6 649.2 L1471.2 649.2 L1471.7 649.2 L1472.3 647.7 L1472.9 649.2 L1473.4 650 L1474 649.2 L1474.5 649.2 L1475.1 648.5 L1475.7 649.2 L1476.2 647.7 L1476.8 647.7 L1477.3 650 L1477.9 648.5 L1478.5 649.2 L1479 648.5 L1479.6 648.5 L1480.1 649.2 L1480.7 649.2" fill="none" stroke="#eccb12" stroke-width="1.05" stroke-linejoin="round" />
<path d="M976.7 597.6 L977.2 596.1 L977.7 599.3 L978.1 596.5 L978.6 594.5 L979.1 596.3 L979.6 592.4 L980.1 600.8 L980.5 597.5 L981 600.2 L981.5 600.4 L982 598.4 L982.5 597 L982.9 596.3 L983.4 596 L983.9 590 L984.4 594.8 L984.9 603.2 L985.3 597 L985.8 599.9 L986.3 599.5 L986.8 593.2 L987.3 598.5 L987.8 604.5 L988.2 596.7 L988.7 598.7 L989.2 601.8 L989.7 600.9 L990.2 599.9 L990.6 597.8 L991.1 599.2 L991.6 597.5 L992.1 591.4 L992.6 600.5 L993 600.5 L993.5 598.6 L994 594 L994.5 600.2 L995 592.8 L995.4 602.2 L995.9 601.3 L996.4 597.9 L996.9 600.7 L997.4 599.9 L997.8 596.2 L998.3 595.2 L998.8 597.3 L999.3 598.7 L999.8 593.1 L1000.2 596.3 L1000.7 598.5 L1001.2 593.6 L1001.7 600.8 L1002.2 597.2 L1002.6 595.5 L1003.1 597.8 L1003.6 599.7 L1004.1 596.5 L1004.6 599.6 L1005 599.8 L1005.5 601.3 L1006 593.2 L1006.5 599.6 L1007 593.8 L1007.4 596.4 L1007.9 598.6 L1008.4 595.4 L1008.9 596.8 L1009.4 597.3 L1009.9 602.5 L1010.3 597.5 L1010.8 594.7 L1011.3 596.1 L1011.8 594.3 L1012.3 592.6 L1012.7 596.3 L1013.2 590.9 L1013.7 602.9 L1014.2 598.6 L1014.7 606.4 L1015.1 594.9 L1015.6 597.4 L1016.1 591.9 L1016.6 599 L1017.1 604.7 L1017.5 593.3 L1018 602.4 L1018.5 602.1 L1019 598.3 L1019.5 595.6 L1019.9 599.5 L1020.4 597.1 L1020.9 604.2 L1021.4 591.8 L1021.9 598 L1022.3 597.3 L1022.8 595.7 L1023.3 597.1 L1023.8 597 L1024.3 600.9 L1024.7 598.1 L1025.2 596.2 L1025.7 594.1 L1026.2 598.1 L1026.7 597.4 L1027.1 596.6 L1027.6 595.8 L1028.1 597 L1028.6 598.6 L1029.1 599.5 L1029.6 593.9 L1030 596.7 L1030.5 597.7 L1031 588.4 L1031.5 594.7 L1032 594.8 L1032.4 597.2 L1032.9 601.2 L1033.4 593.8 L1033.9 598 L1034.4 597.6 L1034.8 594.2 L1035.3 594.2 L1035.8 596.9 L1036.3 597.7 L1036.8 590.5 L1037.2 595.8 L1037.7 601.3 L1038.2 595.1 L1038.7 597.2 L1039.2 597.6 L1039.6 595.4 L1040.1 596.9 L1040.6 590.8 L1041.1 597 L1041.6 596.9 L1042 593.7 L1042.5 599.7 L1043 594.2 L1043.5 597.9 L1044 593.7 L1044.4 600.7 L1044.9 596.3 L1045.4 603.2 L1045.9 599.3 L1046.4 597.7 L1046.8 596 L1047.3 590.9 L1047.8 591.4 L1048.3 602.3 L1048.8 600.3 L1049.2 593.4 L1049.7 596.2 L1050.2 602.4 L1050.7 596.1 L1051.2 601.6 L1051.7 600.7 L1052.1 602.1 L1052.6 598.6 L1053.1 590 L1053.6 596.4 L1054.1 598.1 L1054.5 589.1 L1055 599.3 L1055.5 598.2 L1056 598.6 L1056.5 596.3 L1056.9 598.8 L1057.4 592.7 L1057.9 598.7 L1058.4 595.8 L1058.9 597 L1059.3 600.7 L1059.8 601.1 L1060.3 597.9 L1060.8 605.6 L1061.3 597.7 L1061.7 597.5 L1062.2 597.2 L1062.7 598 L1063.2 596.5 L1063.7 598.9 L1064.1 595.5 L1064.6 603.3 L1065.1 594.6 L1065.6 600.8 L1066.1 596.1 L1066.5 599.3 L1067 599.2 L1067.5 600.5 L1068 593.1 L1068.5 601.5 L1068.9 601.9 L1069.4 597 L1069.9 596.8 L1070.4 597.6 L1070.9 601 L1071.4 600 L1071.8 594.6 L1072.3 601.3 L1072.8 595.6 L1073.3 595.2 L1073.8 597.3 L1074.2 601.9 L1074.7 591.2 L1075.2 597.3 L1075.7 597.1 L1076.2 599 L1076.6 601 L1077.1 598.6 L1077.6 597 L1078.1 600.6 L1078.6 597.3 L1079 593.8 L1079.5 596.2 L1080 598.1 L1080.5 594.1 L1081 594.6 L1081.4 594.6 L1081.9 600.5 L1082.4 604 L1082.9 595 L1083.4 597.5 L1083.8 599 L1084.3 596.1 L1084.8 599.3 L1085.3 599.8 L1085.8 591.5 L1086.2 603.2 L1086.7 594.8 L1087.2 594.3 L1087.7 591.6 L1088.2 596.9 L1088.6 596 L1089.1 600.9 L1089.6 597.6 L1090.1 604.9 L1090.6 599.7 L1091 597.8 L1091.5 598.1 L1092 599.4 L1092.5 593.7 L1093 603.2 L1093.5 597.3 L1093.9 599.1 L1094.4 597.6 L1094.9 597.5 L1095.4 591.1 L1095.9 601.4 L1096.3 593.1 L1096.8 592.9 L1097.3 598.2 L1097.8 599.8 L1098.3 602 L1098.7 600.7 L1099.2 590.7 L1099.7 605.2 L1100.2 596.2 L1100.7 600.1 L1101.1 591.2 L1101.6 596.6 L1102.1 602.4 L1102.6 599.5 L1103.1 597.1 L1103.5 597.3 L1104 601 L1104.5 598.7 L1105 599.3 L1105.5 596.1 L1105.9 596.8 L1106.4 597 L1106.9 599.7 L1107.4 595 L1107.9 599.7 L1108.3 600.6 L1108.8 599.2 L1109.3 598.8 L1109.8 598.8 L1110.3 604.3 L1110.7 593.1 L1111.2 595.6 L1111.7 593.2 L1112.2 599.1 L1112.7 595.2 L1113.1 597 L1113.6 597.6 L1114.1 591.6 L1114.6 599.8 L1115.1 595.8 L1115.6 603.7 L1116 595.8 L1116.5 598.3 L1117 601.2 L1117.5 599.8 L1118 605 L1118.4 601.4 L1118.9 597.1 L1119.4 606.8 L1119.9 594 L1120.4 594.4 L1120.8 600.3 L1121.3 602.8 L1121.8 602.5 L1122.3 602.1 L1122.8 600.3 L1123.2 590.3 L1123.7 601.6 L1124.2 595.1 L1124.7 593.5 L1125.2 601 L1125.6 598.6 L1126.1 595.4 L1126.6 600 L1127.1 593.4 L1127.6 590.4 L1128 597.9 L1128.5 600.6 L1129 595.7 L1129.5 596.6 L1130 600.3 L1130.4 598.2 L1130.9 597.4 L1131.4 596 L1131.9 593.8 L1132.4 599.4 L1132.8 602.2 L1133.3 603.3 L1133.8 591.4 L1134.3 599.2 L1134.8 599.1 L1135.3 589.3 L1135.7 593.9 L1136.2 590 L1136.7 598.3 L1137.2 600.1 L1137.7 599.5 L1138.1 595.5 L1138.6 596.3 L1139.1 596.4 L1139.6 589.9 L1140.1 593.1 L1140.5 601.5 L1141 596.2 L1141.5 595.7 L1142 600.3 L1142.5 589.8 L1142.9 594.6 L1143.4 592.5 L1143.9 599.6 L1144.4 601.7 L1144.9 595.1 L1145.3 598.4 L1145.8 599.7 L1146.3 598 L1146.8 597 L1147.3 597.2 L1147.7 598.4 L1148.2 596.1 L1148.7 588.4 L1149.2 593.7 L1149.7 599.5 L1150.1 590.7 L1150.6 599.4 L1151.1 603.1 L1151.6 602.5 L1152.1 604.8 L1152.5 593.8 L1153 601.5 L1153.5 602.7 L1154 599.7 L1154.5 598.5 L1154.9 602 L1155.4 599.7 L1155.9 597.8 L1156.4 595.5 L1156.9 601 L1157.4 595.8 L1157.8 596.9 L1158.3 595.9 L1158.8 599.6 L1159.3 601.8 L1159.8 594.4 L1160.2 595.7 L1160.7 600.1 L1161.2 600.5 L1161.7 595.4 L1162.2 590.8 L1162.6 596.5 L1163.1 589.1 L1163.6 596.7 L1164.1 596.6 L1164.6 596.1 L1165 594 L1165.5 603 L1166 597.2 L1166.5 593.4 L1167 603.2 L1167.4 596.9 L1167.9 595.2 L1168.4 591.8 L1168.9 592.3 L1169.4 597.9 L1169.8 590.6 L1170.3 601.6 L1170.8 602.6 L1171.3 593.1 L1171.8 595.4 L1172.2 601.7 L1172.7 594 L1173.2 594.7 L1173.7 595.2 L1174.2 599.3 L1174.6 602.2 L1175.1 603.6 L1175.6 598.5 L1176.1 598.3 L1176.6 599.5 L1177.1 599.7 L1177.5 594.5 L1178 601.7 L1178.5 600.3 L1179 590.9 L1179.5 599.9 L1179.9 599.9 L1180.4 594.1 L1180.9 604 L1181.4 592.1 L1181.9 602.2 L1182.3 600.6 L1182.8 602.2 L1183.3 601.1 L1183.8 600.3 L1184.3 594.5 L1184.7 598 L1185.2 593 L1185.7 595.1 L1186.2 602.1 L1186.7 597.7 L1187.1 599.9 L1187.6 599.2 L1188.1 597.3 L1188.6 596.5 L1189.1 596.2 L1189.5 605.1 L1190 598.3 L1190.5 599.4 L1191 591.3 L1191.5 598.6 L1191.9 597.9 L1192.4 597.7 L1192.9 595.1 L1193.4 601.7 L1193.9 598.2 L1194.3 598.2 L1194.8 597.8 L1195.3 598.6 L1195.8 599.6 L1196.3 597.5 L1196.7 602.3 L1197.2 592.2 L1197.7 597.8 L1198.2 604.1 L1198.7 598.7 L1199.2 594.5 L1199.6 598.4 L1200.1 598.3 L1200.6 605.7 L1201.1 592.8 L1201.6 597.6 L1202 604.6 L1202.5 599.3 L1203 592.7 L1203.5 596.4 L1204 603 L1204.4 599.7 L1204.9 596.9 L1205.4 590.6 L1205.9 596.9 L1206.4 595.2 L1206.8 598.9 L1207.3 597.6 L1207.8 601.3 L1208.3 602.3 L1208.8 602.5 L1209.2 599.8 L1209.7 593.4 L1210.2 597.9 L1210.7 593.6 L1211.2 595.1 L1211.6 597.2 L1212.1 599.5 L1212.6 590.3 L1213.1 593.8 L1213.6 593.4 L1214 589.1 L1214.5 592.5 L1215 597 L1215.5 596.4 L1216 595.8 L1216.4 590 L1216.9 601.3 L1217.4 604.1 L1217.9 599.4 L1218.4 597.7 L1218.9 599.8 L1219.3 594.5 L1219.8 595.7 L1220.3 597.9 L1220.8 597.5 L1221.3 591.1 L1221.7 590.8 L1222.2 591.7 L1222.7 599 L1223.2 593.5 L1223.7 601.7 L1224.1 604.1 L1224.6 591.8 L1225.1 594.7 L1225.6 595.4 L1226.1 592.8 L1226.5 591.9 L1227 596.7 L1227.5 596.8 L1228 595.6 L1228.5 594.8 L1228.9 597.1 L1229.4 602.4 L1229.9 589.1 L1230.4 600.3 L1230.9 599.8 L1231.3 595.6 L1231.8 597.9 L1232.3 595.9 L1232.8 589.3 L1233.3 592.7 L1233.7 599.3 L1234.2 596.6 L1234.7 597.9 L1235.2 593.3 L1235.7 600.8 L1236.1 601 L1236.6 603.5 L1237.1 595.9 L1237.6 596.3 L1238.1 595.2 L1238.5 594.7 L1239 601.8 L1239.5 599 L1240 601.4 L1240.5 593.4 L1241 594.7 L1241.4 602.7 L1241.9 595.8 L1242.4 597.3 L1242.9 597.2 L1243.4 595.2 L1243.8 599.8 L1244.3 598.7 L1244.8 600 L1245.3 600 L1245.8 601.3 L1246.2 593.6 L1246.7 595.6 L1247.2 598.5 L1247.7 603.4 L1248.2 589.8 L1248.6 597.5 L1249.1 596.9 L1249.6 595.4 L1250.1 591.7 L1250.6 598.7 L1251 605.8 L1251.5 598.7 L1252 597.7 L1252.5 599.6 L1253 592.6 L1253.4 599.2 L1253.9 596.6 L1254.4 600.5 L1254.9 595 L1255.4 600 L1255.8 594.8 L1256.3 597.2 L1256.8 597.1 L1257.3 596.6 L1257.8 603.2 L1258.2 599.2 L1258.7 596.9 L1259.2 599 L1259.7 593.5 L1260.2 594.6 L1260.7 600.2 L1261.1 593.6 L1261.6 598.4 L1262.1 595.7 L1262.6 593.4 L1263.1 601.5 L1263.5 600.5 L1264 597.9 L1264.5 598.5 L1265 603.4 L1265.5 595.3 L1265.9 597.1 L1266.4 597 L1266.9 596.6 L1267.4 595.2 L1267.9 600.5 L1268.3 596.5 L1268.8 599.1 L1269.3 599.3 L1269.8 600.7 L1270.3 593.5 L1270.7 606.1 L1271.2 600.1 L1271.7 595.3 L1272.2 598.8 L1272.7 599.9 L1273.1 594.1 L1273.6 600.9 L1274.1 598.6 L1274.6 596.2 L1275.1 599.5 L1275.5 599.4 L1276 597.4 L1276.5 594.3 L1277 600.8 L1277.5 595.8 L1277.9 597.9 L1278.4 598.9 L1278.9 602.2 L1279.4 591.7 L1279.9 595.7 L1280.3 596.7 L1280.8 598.7 L1281.3 592.1 L1281.8 599.9 L1282.3 601.1 L1282.8 600.4 L1283.2 597.8 L1283.7 596.6 L1284.2 604.6 L1284.7 596.7 L1285.2 596.7 L1285.6 594 L1286.1 598.8 L1286.6 592.6 L1287.1 590.8 L1287.6 599.5 L1288 598.6 L1288.5 594.3 L1289 593.5 L1289.5 597.7 L1290 593.7 L1290.4 603 L1290.9 594.4 L1291.4 596.1 L1291.9 594.6 L1292.4 596 L1292.8 595.3 L1293.3 599.2 L1293.8 592.9 L1294.3 604.8 L1294.8 596.8 L1295.2 599.8 L1295.7 590.9 L1296.2 601.6 L1296.7 597.2 L1297.2 597.7 L1297.6 594.9 L1298.1 597.7 L1298.6 601.3 L1299.1 598.1 L1299.6 593.6 L1300 595 L1300.5 600.1 L1301 602 L1301.5 602.1 L1302 598 L1302.5 598.2 L1302.9 598.9 L1303.4 599.4 L1303.9 597 L1304.4 593.1 L1304.9 594.2 L1305.3 599.1 L1305.8 594.9 L1306.3 598.5 L1306.8 593.2 L1307.3 594.1 L1307.7 594.4 L1308.2 590 L1308.7 594.1 L1309.2 594.5 L1309.7 592.8 L1310.1 601.2 L1310.6 598.7 L1311.1 598.8 L1311.6 594.7 L1312.1 597.5 L1312.5 601.9 L1313 600.3 L1313.5 598.3 L1314 599.2 L1314.5 599.2 L1314.9 602.7 L1315.4 597.2 L1315.9 602.1 L1316.4 599 L1316.9 599.8 L1317.3 598.7 L1317.8 592.7 L1318.3 599.1 L1318.8 599 L1319.3 606.2 L1319.7 600.7 L1320.2 596.8 L1320.7 598.7 L1321.2 594.9 L1321.7 598.7 L1322.1 594.9 L1322.6 596.7 L1323.1 593.9 L1323.6 598.6 L1324.1 594.5 L1324.6 599.3 L1325 600.3 L1325.5 593.7 L1326 602.4 L1326.5 600.8 L1327 592 L1327.4 597 L1327.9 596.3 L1328.4 596.8 L1328.9 597.8 L1329.4 590.8 L1329.8 597.5 L1330.3 592.7 L1330.8 597.6 L1331.3 600 L1331.8 598.6 L1332.2 597.5 L1332.7 588.7 L1333.2 599.7 L1333.7 596.1 L1334.2 602.9 L1334.6 595.7 L1335.1 598.1 L1335.6 596.3 L1336.1 597.3 L1336.6 599.2 L1337 597.4 L1337.5 597.6 L1338 594.1 L1338.5 597.9 L1339 598.1 L1339.4 602.1 L1339.9 594.6 L1340.4 598.2 L1340.9 600.8 L1341.4 593.5 L1341.8 594.5 L1342.3 597.7 L1342.8 597.5 L1343.3 602.2 L1343.8 605.8 L1344.3 597.2 L1344.7 602.8 L1345.2 595.4 L1345.7 598.9 L1346.2 596.8 L1346.7 599.5 L1347.1 596.2 L1347.6 594.9 L1348.1 597.3 L1348.6 595.1 L1349.1 595 L1349.5 598.2 L1350 603.5 L1350.5 595.5 L1351 599.7 L1351.5 601.2 L1351.9 604.1 L1352.4 603.8 L1352.9 593.1 L1353.4 591.5 L1353.9 593.1 L1354.3 590.7 L1354.8 604.3 L1355.3 595.1 L1355.8 602.5 L1356.3 602.8 L1356.7 595.6 L1357.2 594.5 L1357.7 600.9 L1358.2 603.4 L1358.7 603.2 L1359.1 598.4 L1359.6 594.7 L1360.1 590.8 L1360.6 596.2 L1361.1 601.3 L1361.5 601.5 L1362 597.6 L1362.5 595.5 L1363 604.7 L1363.5 596.8 L1363.9 599.9 L1364.4 594.9 L1364.9 603.5 L1365.4 594.5 L1365.9 592.8 L1366.4 592.9 L1366.8 592.4 L1367.3 597.3 L1367.8 597.4 L1368.3 601.6 L1368.8 597.9 L1369.2 600.5 L1369.7 595.7 L1370.2 595.2 L1370.7 598.3 L1371.2 592.3 L1371.6 602.4 L1372.1 599.7 L1372.6 591.9 L1373.1 598.6 L1373.6 595.4 L1374 606.5 L1374.5 592.6 L1375 600.2 L1375.5 600.1 L1376 594.4 L1376.4 597.5 L1376.9 603.8 L1377.4 593.1 L1377.9 601.1 L1378.4 599 L1378.8 600 L1379.3 599.3 L1379.8 599.3 L1380.3 599 L1380.8 599.4 L1381.2 589.2 L1381.7 596.8 L1382.2 595.7 L1382.7 599.9 L1383.2 591.6 L1383.6 596 L1384.1 597.5 L1384.6 599.7 L1385.1 595 L1385.6 603.7 L1386 600.2 L1386.5 599 L1387 596.6 L1387.5 597.3 L1388 602.9 L1388.5 595.7 L1388.9 599.3 L1389.4 599.6 L1389.9 597.4 L1390.4 598.9 L1390.9 599.3 L1391.3 599.1 L1391.8 595.5 L1392.3 597.7 L1392.8 597 L1393.3 600.1 L1393.7 593.8 L1394.2 597.4 L1394.7 600.4 L1395.2 594.1 L1395.7 602.5 L1396.1 600.3 L1396.6 595 L1397.1 599.3 L1397.6 598.9 L1398.1 599 L1398.5 597.7 L1399 596.2 L1399.5 595.7 L1400 600.1 L1400.5 599.5 L1400.9 604.6 L1401.4 599.5 L1401.9 596.2 L1402.4 597.7 L1402.9 593.7 L1403.3 598.7 L1403.8 596.9 L1404.3 594.8 L1404.8 601.7 L1405.3 593.1 L1405.7 602.5 L1406.2 598.7 L1406.7 604.1 L1407.2 598.8 L1407.7 601.2 L1408.2 594.5 L1408.6 604.7 L1409.1 596.2 L1409.6 596.5 L1410.1 595.9 L1410.6 594.4 L1411 595 L1411.5 600.9 L1412 595.7 L1412.5 600.3 L1413 600.1 L1413.4 598.8 L1413.9 599.5 L1414.4 599.8 L1414.9 594.3 L1415.4 597.6 L1415.8 604.3 L1416.3 600.5 L1416.8 599.5 L1417.3 590.1 L1417.8 597 L1418.2 599.6 L1418.7 596.3 L1419.2 605.7 L1419.7 592.6 L1420.2 599 L1420.6 601.1 L1421.1 595 L1421.6 600.5 L1422.1 601.6 L1422.6 595.1 L1423 591.1 L1423.5 599 L1424 598.1 L1424.5 598.2 L1425 596.4 L1425.4 599.2 L1425.9 597.4 L1426.4 600.5 L1426.9 598.2 L1427.4 595 L1427.8 602.9 L1428.3 595.3 L1428.8 591.9 L1429.3 600.1 L1429.8 599.1 L1430.3 597.4 L1430.7 597.9 L1431.2 601.5 L1431.7 595 L1432.2 595.6 L1432.7 594.3 L1433.1 595.4 L1433.6 599.8 L1434.1 598.3 L1434.6 599.9 L1435.1 589 L1435.5 599.1 L1436 594.7 L1436.5 592.7 L1437 598.2 L1437.5 597 L1437.9 596.4 L1438.4 592.3 L1438.9 601.9 L1439.4 596.8 L1439.9 596.3 L1440.3 596.2 L1440.8 600.5 L1441.3 594.6 L1441.8 596.1 L1442.3 601.1 L1442.7 601.3 L1443.2 591 L1443.7 599.9 L1444.2 603.1 L1444.7 596.4 L1445.1 601.5 L1445.6 597.8 L1446.1 596.1 L1446.6 600.9 L1447.1 602.5 L1447.5 591.4 L1448 602.2 L1448.5 601.7 L1449 597.8 L1449.5 596.3 L1450 598.1 L1450.4 600.8 L1450.9 594.7 L1451.4 601.5 L1451.9 600.6 L1452.4 595.5 L1452.8 594.3 L1453.3 596.2 L1453.8 594.7 L1454.3 596.4 L1454.8 595 L1455.2 600.2 L1455.7 600.2 L1456.2 595.8 L1456.7 594.4 L1457.2 599.1 L1457.6 600.3 L1458.1 598.2 L1458.6 594.1 L1459.1 598 L1459.6 598.6 L1460 598.3 L1460.5 598.8 L1461 596 L1461.5 599.2 L1462 597.3 L1462.4 598.5 L1462.9 600.4 L1463.4 597.6 L1463.9 596.8 L1464.4 603.6 L1464.8 596.9 L1465.3 596.9 L1465.8 598.2 L1466.3 601.3 L1466.8 600 L1467.2 595.4 L1467.7 600.8 L1468.2 594.4 L1468.7 599.1 L1469.2 596.6 L1469.6 607 L1470.1 595.9 L1470.6 597.2 L1471.1 603.2 L1471.6 594.4 L1472.1 599.4 L1472.5 601.7 L1473 593.1 L1473.5 593 L1474 594.2 L1474.5 594.9 L1474.9 593.9 L1475.4 603.6 L1475.9 598.2 L1476.4 593 L1476.9 595.8 L1477.3 597.3 L1477.8 598.6 L1478.3 598.9 L1478.8 600.3 L1479.3 598.1 L1479.7 607 L1480.2 594.2 L1480.7 597.7" fill="none" stroke="#f2495c" stroke-width="1.1" stroke-linejoin="round" />
<path d="M976.7 573.8 L977.2 573.7 L977.7 571.1 L978.2 575.4 L978.7 572.3 L979.2 575.3 L979.7 570.5 L980.2 571.8 L980.7 570.1 L981.2 572.8 L981.7 571.5 L982.2 572.5 L982.8 573.1 L983.3 571.8 L983.8 573.9 L984.3 572.6 L984.8 571 L985.3 572 L985.8 572.6 L986.3 568.9 L986.8 572 L987.3 572.9 L987.8 571.8 L988.3 572.8 L988.8 572.6 L989.3 572.6 L989.8 569.1 L990.3 572 L990.8 571.8 L991.3 571.1 L991.8 569.1 L992.3 572.4 L992.8 573 L993.3 568.5 L993.9 574.2 L994.4 572.6 L994.9 571.1 L995.4 568.8 L995.9 573.4 L996.4 575.6 L996.9 571.1 L997.4 572.8 L997.9 572.6 L998.4 571.4 L998.9 571.7 L999.4 571.6 L999.9 572.7 L1000.4 570.2 L1000.9 569.9 L1001.4 572 L1001.9 572.7 L1002.4 571 L1002.9 571.4 L1003.4 573.6 L1003.9 572.7 L1004.4 570.5 L1005 572.2 L1005.5 572.5 L1006 571.7 L1006.5 572.1 L1007 572.1 L1007.5 574.8 L1008 569.5 L1008.5 571.8 L1009 573.3 L1009.5 570.6 L1010 571.6 L1010.5 572 L1011 570.5 L1011.5 568.8 L1012 571.3 L1012.5 569.8 L1013 568.9 L1013.5 573.5 L1014 572.8 L1014.5 570.9 L1015 574.5 L1015.5 572.4 L1016.1 570.2 L1016.6 570.5 L1017.1 571.2 L1017.6 574.8 L1018.1 568.7 L1018.6 571.3 L1019.1 570.9 L1019.6 571.3 L1020.1 574.5 L1020.6 574.1 L1021.1 573.8 L1021.6 569.3 L1022.1 573.3 L1022.6 572.4 L1023.1 572.4 L1023.6 571.2 L1024.1 571.3 L1024.6 571.7 L1025.1 573.9 L1025.6 576 L1026.1 571.8 L1026.6 571.7 L1027.2 570.3 L1027.7 572.2 L1028.2 572.9 L1028.7 571.5 L1029.2 574.3 L1029.7 573.6 L1030.2 573.5 L1030.7 571.6 L1031.2 569 L1031.7 571 L1032.2 570.4 L1032.7 571.7 L1033.2 571.7 L1033.7 572.7 L1034.2 572.5 L1034.7 575.6 L1035.2 573.8 L1035.7 573.9 L1036.2 570.8 L1036.7 571.1 L1037.2 570.4 L1037.7 569.8 L1038.2 572.5 L1038.8 570.5 L1039.3 569.2 L1039.8 572.1 L1040.3 570.5 L1040.8 572.3 L1041.3 574.4 L1041.8 571.9 L1042.3 573.2 L1042.8 571.9 L1043.3 572.7 L1043.8 571.6 L1044.3 575.1 L1044.8 569 L1045.3 570.1 L1045.8 572.6 L1046.3 573.4 L1046.8 572.1 L1047.3 571.1 L1047.8 571.4 L1048.3 571.5 L1048.8 574.9 L1049.3 573.7 L1049.9 570.1 L1050.4 571.7 L1050.9 574.3 L1051.4 573.3 L1051.9 574.1 L1052.4 573.5 L1052.9 570.3 L1053.4 572.4 L1053.9 570.4 L1054.4 571.8 L1054.9 574.3 L1055.4 573 L1055.9 568.7 L1056.4 573.2 L1056.9 573.6 L1057.4 570.2 L1057.9 571.9 L1058.4 572.1 L1058.9 569.9 L1059.4 574.6 L1059.9 571.4 L1060.4 573.6 L1061 574.1 L1061.5 573.3 L1062 570.4 L1062.5 572.3 L1063 574.8 L1063.5 573.7 L1064 569.8 L1064.5 570.5 L1065 573.7 L1065.5 568.5 L1066 572.6 L1066.5 573.8 L1067 572.3 L1067.5 570.7 L1068 569.7 L1068.5 570.5 L1069 572.7 L1069.5 572.9 L1070 574.2 L1070.5 572.2 L1071 572.9 L1071.5 571.7 L1072.1 573.9 L1072.6 572.8 L1073.1 573.4 L1073.6 573.8 L1074.1 573.8 L1074.6 573.6 L1075.1 573.8 L1075.6 571.2 L1076.1 571.9 L1076.6 574 L1077.1 571.3 L1077.6 571.6 L1078.1 569.9 L1078.6 572.3 L1079.1 572.4 L1079.6 573.1 L1080.1 571.9 L1080.6 571.3 L1081.1 571.8 L1081.6 572.4 L1082.1 571.2 L1082.6 571.9 L1083.2 571.7 L1083.7 573.4 L1084.2 571.8 L1084.7 573.5 L1085.2 573.3 L1085.7 571.8 L1086.2 568.9 L1086.7 570.6 L1087.2 572.1 L1087.7 572.3 L1088.2 570.6 L1088.7 570 L1089.2 570.3 L1089.7 572.3 L1090.2 571.8 L1090.7 572.5 L1091.2 572.5 L1091.7 573.3 L1092.2 572.4 L1092.7 575.2 L1093.2 573.8 L1093.7 571.4 L1094.2 573.4 L1094.8 571.3 L1095.3 574 L1095.8 572.6 L1096.3 571.5 L1096.8 573.6 L1097.3 573.1 L1097.8 568.4 L1098.3 573.1 L1098.8 573.1 L1099.3 572.9 L1099.8 572 L1100.3 572.1 L1100.8 570.6 L1101.3 570.9 L1101.8 572.7 L1102.3 572.6 L1102.8 574.1 L1103.3 574.3 L1103.8 573.1 L1104.3 571 L1104.8 571.9 L1105.3 570.9 L1105.9 570.7 L1106.4 572.3 L1106.9 569 L1107.4 572.8 L1107.9 573 L1108.4 572.7 L1108.9 570.4 L1109.4 572.3 L1109.9 573.1 L1110.4 571.4 L1110.9 570.4 L1111.4 572.2 L1111.9 572.4 L1112.4 570.5 L1112.9 570.6 L1113.4 570.7 L1113.9 573.2 L1114.4 571.6 L1114.9 571.5 L1115.4 574.7 L1115.9 570.3 L1116.4 571.9 L1117 572.6 L1117.5 568.7 L1118 571.8 L1118.5 573.1 L1119 572.1 L1119.5 571.2 L1120 570.9 L1120.5 572.1 L1121 573.3 L1121.5 573.1 L1122 573.3 L1122.5 573.6 L1123 572.1 L1123.5 572.8 L1124 572 L1124.5 573.3 L1125 573.3 L1125.5 572.3 L1126 572.6 L1126.5 570.4 L1127 573.4 L1127.5 571.8 L1128.1 572.1 L1128.6 574 L1129.1 571 L1129.6 571.8 L1130.1 575.2 L1130.6 571.2 L1131.1 570.7 L1131.6 573.2 L1132.1 569.6 L1132.6 571.8 L1133.1 573.8 L1133.6 571.2 L1134.1 572.6 L1134.6 574 L1135.1 575.2 L1135.6 571.7 L1136.1 573.1 L1136.6 571.1 L1137.1 571.5 L1137.6 572.8 L1138.1 572.8 L1138.6 569.5 L1139.2 569.5 L1139.7 570.9 L1140.2 572.6 L1140.7 573.5 L1141.2 572.6 L1141.7 569.6 L1142.2 571.4 L1142.7 572.5 L1143.2 573.9 L1143.7 571.8 L1144.2 573.4 L1144.7 572 L1145.2 571 L1145.7 570.5 L1146.2 571.9 L1146.7 572.6 L1147.2 571.7 L1147.7 569.4 L1148.2 571.5 L1148.7 574.1 L1149.2 569.8 L1149.7 571.7 L1150.2 568.2 L1150.8 572.7 L1151.3 572.2 L1151.8 572.5 L1152.3 571.5 L1152.8 572.9 L1153.3 574.2 L1153.8 574.9 L1154.3 572.2 L1154.8 572.8 L1155.3 572.9 L1155.8 568.9 L1156.3 570.9 L1156.8 570.5 L1157.3 572.8 L1157.8 571.6 L1158.3 572.4 L1158.8 572.4 L1159.3 571 L1159.8 571.2 L1160.3 571.6 L1160.8 571.8 L1161.3 574.2 L1161.9 573.1 L1162.4 571.5 L1162.9 572.6 L1163.4 573.2 L1163.9 571.5 L1164.4 573.4 L1164.9 573 L1165.4 570.8 L1165.9 572.6 L1166.4 570 L1166.9 571.3 L1167.4 570.9 L1167.9 570.4 L1168.4 575.2 L1168.9 572.2 L1169.4 574 L1169.9 572.7 L1170.4 572.2 L1170.9 570.2 L1171.4 572.1 L1171.9 569.6 L1172.4 572.8 L1173 572.1 L1173.5 571.9 L1174 570.7 L1174.5 572.1 L1175 573 L1175.5 572.5 L1176 574.1 L1176.5 570.2 L1177 571 L1177.5 571.4 L1178 571.7 L1178.5 572.9 L1179 572.7 L1179.5 570.9 L1180 573.2 L1180.5 573.2 L1181 569.7 L1181.5 569.8 L1182 571.6 L1182.5 571.3 L1183 571.8 L1183.5 570 L1184.1 572.7 L1184.6 571.9 L1185.1 571.3 L1185.6 570 L1186.1 572.4 L1186.6 571.7 L1187.1 572.8 L1187.6 573 L1188.1 573 L1188.6 571.9 L1189.1 570.8 L1189.6 573.1 L1190.1 572.9 L1190.6 572.6 L1191.1 571.5 L1191.6 571 L1192.1 573.9 L1192.6 571.5 L1193.1 573.5 L1193.6 571 L1194.1 573.5 L1194.6 573.6 L1195.2 573.1 L1195.7 572.1 L1196.2 573.5 L1196.7 571.7 L1197.2 571.8 L1197.7 571.9 L1198.2 571.7 L1198.7 570.8 L1199.2 573.1 L1199.7 572.1 L1200.2 572.1 L1200.7 575 L1201.2 571.5 L1201.7 573.2 L1202.2 573.1 L1202.7 572.7 L1203.2 571.9 L1203.7 571.6 L1204.2 571.4 L1204.7 573.1 L1205.2 571 L1205.7 571.4 L1206.2 572.6 L1206.8 572.1 L1207.3 570.9 L1207.8 571.4 L1208.3 571 L1208.8 571.9 L1209.3 570.4 L1209.8 568.8 L1210.3 571.4 L1210.8 574.4 L1211.3 569.6 L1211.8 572.9 L1212.3 574.1 L1212.8 575.5 L1213.3 571.4 L1213.8 570.5 L1214.3 570.6 L1214.8 572.6 L1215.3 570 L1215.8 572.2 L1216.3 572.9 L1216.8 572 L1217.3 571.7 L1217.9 572 L1218.4 571.5 L1218.9 575.2 L1219.4 569.8 L1219.9 572.9 L1220.4 571.1 L1220.9 573.2 L1221.4 571.8 L1221.9 572.3 L1222.4 574.3 L1222.9 571.5 L1223.4 571.1 L1223.9 573.7 L1224.4 575.1 L1224.9 573 L1225.4 573.3 L1225.9 571.9 L1226.4 572.1 L1226.9 569.7 L1227.4 571.1 L1227.9 572.4 L1228.4 571.8 L1229 576 L1229.5 573.4 L1230 573.4 L1230.5 572.2 L1231 571.6 L1231.5 571.7 L1232 570.7 L1232.5 573.1 L1233 571.6 L1233.5 572.2 L1234 572 L1234.5 571.6 L1235 572.5 L1235.5 571.8 L1236 572.1 L1236.5 570.6 L1237 572.2 L1237.5 565.4 L1238 568.3 L1238.5 571.2 L1239 571.3 L1239.5 570.5 L1240.1 573.5 L1240.6 571 L1241.1 571 L1241.6 571.4 L1242.1 570.7 L1242.6 570.9 L1243.1 570.3 L1243.6 573 L1244.1 571.4 L1244.6 572.8 L1245.1 570.3 L1245.6 571.9 L1246.1 573.9 L1246.6 571.9 L1247.1 573.5 L1247.6 570.6 L1248.1 572.5 L1248.6 575.2 L1249.1 572.6 L1249.6 570.6 L1250.1 571.6 L1250.6 573 L1251.2 571.1 L1251.7 571.2 L1252.2 569.9 L1252.7 570.8 L1253.2 571.5 L1253.7 573.2 L1254.2 571.6 L1254.7 571.6 L1255.2 572 L1255.7 571.4 L1256.2 573.8 L1256.7 571.2 L1257.2 572 L1257.7 571.5 L1258.2 572.2 L1258.7 572.5 L1259.2 571.7 L1259.7 570.9 L1260.2 572.5 L1260.7 571.6 L1261.2 573.2 L1261.7 571.5 L1262.2 572 L1262.8 573.9 L1263.3 570.4 L1263.8 573.3 L1264.3 571.9 L1264.8 573.9 L1265.3 574.5 L1265.8 571.1 L1266.3 574.1 L1266.8 575 L1267.3 572.4 L1267.8 574.3 L1268.3 572.3 L1268.8 569.4 L1269.3 572.6 L1269.8 571.5 L1270.3 571.3 L1270.8 571.7 L1271.3 572.2 L1271.8 569.9 L1272.3 572.2 L1272.8 571.5 L1273.3 571.9 L1273.9 573.9 L1274.4 571.6 L1274.9 572 L1275.4 571.1 L1275.9 571.1 L1276.4 569.8 L1276.9 574.8 L1277.4 572.9 L1277.9 572.7 L1278.4 573.3 L1278.9 571.5 L1279.4 572.2 L1279.9 571.9 L1280.4 574.4 L1280.9 573.4 L1281.4 572.2 L1281.9 572.7 L1282.4 572.9 L1282.9 572.2 L1283.4 572.5 L1283.9 573.6 L1284.4 569.7 L1285 573 L1285.5 571.1 L1286 571.2 L1286.5 570.7 L1287 572.9 L1287.5 573.5 L1288 571.4 L1288.5 571.7 L1289 575.4 L1289.5 575.8 L1290 572.8 L1290.5 572.6 L1291 572.4 L1291.5 571.5 L1292 573.4 L1292.5 568.3 L1293 570.8 L1293.5 570.2 L1294 571.7 L1294.5 575 L1295 571.7 L1295.5 572.8 L1296.1 571.4 L1296.6 572.2 L1297.1 571.1 L1297.6 573.3 L1298.1 572.6 L1298.6 572 L1299.1 573.1 L1299.6 572.7 L1300.1 571.2 L1300.6 569.3 L1301.1 572.4 L1301.6 570.9 L1302.1 573.7 L1302.6 572.7 L1303.1 571.6 L1303.6 571.2 L1304.1 573.5 L1304.6 571.2 L1305.1 571.8 L1305.6 570.2 L1306.1 570.7 L1306.6 571.3 L1307.2 572.6 L1307.7 571.7 L1308.2 573.3 L1308.7 573.2 L1309.2 574.7 L1309.7 573.9 L1310.2 573.9 L1310.7 572.2 L1311.2 571.9 L1311.7 574 L1312.2 572.2 L1312.7 571.5 L1313.2 570.7 L1313.7 572.2 L1314.2 571.7 L1314.7 572.6 L1315.2 570.7 L1315.7 574.3 L1316.2 571.7 L1316.7 575.4 L1317.2 569.6 L1317.7 570.7 L1318.2 575.1 L1318.8 572.8 L1319.3 574.1 L1319.8 574.6 L1320.3 572.6 L1320.8 573.3 L1321.3 570.6 L1321.8 572.8 L1322.3 573.6 L1322.8 572.2 L1323.3 571.5 L1323.8 570.9 L1324.3 571.3 L1324.8 574.2 L1325.3 573.2 L1325.8 572.3 L1326.3 573.3 L1326.8 571 L1327.3 572.6 L1327.8 572.2 L1328.3 572.6 L1328.8 572 L1329.3 574.2 L1329.9 569.1 L1330.4 572.9 L1330.9 573.1 L1331.4 574.6 L1331.9 572.2 L1332.4 574 L1332.9 571.6 L1333.4 570.4 L1333.9 571.2 L1334.4 572.7 L1334.9 570.3 L1335.4 572.3 L1335.9 572.1 L1336.4 572 L1336.9 572.8 L1337.4 571.5 L1337.9 573.8 L1338.4 574.6 L1338.9 570.4 L1339.4 573.1 L1339.9 572.6 L1340.4 571.6 L1341 572.7 L1341.5 573.8 L1342 572.4 L1342.5 573.4 L1343 571.3 L1343.5 572.7 L1344 572.4 L1344.5 571 L1345 574.3 L1345.5 574.2 L1346 571 L1346.5 570.3 L1347 571.9 L1347.5 573.1 L1348 570.3 L1348.5 571.3 L1349 570.6 L1349.5 574.7 L1350 572.3 L1350.5 573.5 L1351 573.6 L1351.5 571.3 L1352.1 571 L1352.6 572.7 L1353.1 572.4 L1353.6 570.1 L1354.1 571.1 L1354.6 572.3 L1355.1 571.4 L1355.6 571.9 L1356.1 573.9 L1356.6 572.8 L1357.1 571.7 L1357.6 571.2 L1358.1 573.8 L1358.6 573.2 L1359.1 572.9 L1359.6 574.2 L1360.1 570.5 L1360.6 571.4 L1361.1 570.2 L1361.6 575.2 L1362.1 573.2 L1362.6 569.5 L1363.2 574.1 L1363.7 574.7 L1364.2 571.8 L1364.7 569.8 L1365.2 571.2 L1365.7 573.4 L1366.2 571.3 L1366.7 571.5 L1367.2 571.7 L1367.7 571.5 L1368.2 570.9 L1368.7 570.4 L1369.2 570.1 L1369.7 570.6 L1370.2 572.3 L1370.7 574.7 L1371.2 571.3 L1371.7 574.2 L1372.2 568.8 L1372.7 573.7 L1373.2 574.7 L1373.7 574.7 L1374.2 571.5 L1374.8 571.6 L1375.3 571.2 L1375.8 571.7 L1376.3 573.2 L1376.8 570.9 L1377.3 573.1 L1377.8 574.2 L1378.3 570.8 L1378.8 571.3 L1379.3 573.4 L1379.8 572.4 L1380.3 570.6 L1380.8 570.7 L1381.3 573.6 L1381.8 570.5 L1382.3 575.8 L1382.8 572 L1383.3 571.5 L1383.8 572.2 L1384.3 571.9 L1384.8 574.4 L1385.3 572.3 L1385.9 571.4 L1386.4 573.4 L1386.9 571.9 L1387.4 572.3 L1387.9 575.3 L1388.4 572.9 L1388.9 571.2 L1389.4 574.3 L1389.9 572 L1390.4 571.6 L1390.9 573.9 L1391.4 572.4 L1391.9 570.8 L1392.4 571 L1392.9 573.5 L1393.4 570.6 L1393.9 571.6 L1394.4 571.9 L1394.9 569.9 L1395.4 571 L1395.9 571.5 L1396.4 570.7 L1397 571.1 L1397.5 570.3 L1398 572.2 L1398.5 574.6 L1399 569.8 L1399.5 570.9 L1400 571.3 L1400.5 572 L1401 572.2 L1401.5 571.9 L1402 573.4 L1402.5 571 L1403 571.9 L1403.5 573.4 L1404 571.7 L1404.5 572.5 L1405 572.1 L1405.5 571.3 L1406 568.2 L1406.5 573.6 L1407 571.5 L1407.5 571.1 L1408.1 571.5 L1408.6 569.9 L1409.1 572.7 L1409.6 572.5 L1410.1 572.1 L1410.6 574 L1411.1 570.5 L1411.6 573.8 L1412.1 571.3 L1412.6 570.4 L1413.1 573.3 L1413.6 572.3 L1414.1 572.4 L1414.6 569.6 L1415.1 571.7 L1415.6 574.6 L1416.1 570.5 L1416.6 570.6 L1417.1 574.9 L1417.6 576 L1418.1 568.3 L1418.6 571.9 L1419.2 575.1 L1419.7 570.6 L1420.2 570 L1420.7 575.5 L1421.2 570.2 L1421.7 571 L1422.2 572.1 L1422.7 573.1 L1423.2 571.5 L1423.7 573.2 L1424.2 571.8 L1424.7 572.4 L1425.2 572.7 L1425.7 571.3 L1426.2 570.7 L1426.7 570.8 L1427.2 571.4 L1427.7 569.7 L1428.2 573.9 L1428.7 572 L1429.2 571.8 L1429.7 570.3 L1430.2 575.3 L1430.8 572.7 L1431.3 572.5 L1431.8 571.8 L1432.3 568.8 L1432.8 571.7 L1433.3 572.2 L1433.8 571.4 L1434.3 570.7 L1434.8 572.3 L1435.3 569.6 L1435.8 573.8 L1436.3 570.3 L1436.8 571 L1437.3 570.6 L1437.8 569.8 L1438.3 572.4 L1438.8 571.5 L1439.3 571.7 L1439.8 572.9 L1440.3 573.2 L1440.8 573.2 L1441.3 570.8 L1441.9 575.3 L1442.4 573.9 L1442.9 571.9 L1443.4 570.2 L1443.9 572.2 L1444.4 570.2 L1444.9 572.1 L1445.4 572.8 L1445.9 574.3 L1446.4 571.8 L1446.9 569.6 L1447.4 571.9 L1447.9 573.6 L1448.4 571.2 L1448.9 574 L1449.4 573.7 L1449.9 570.5 L1450.4 571.5 L1450.9 570.7 L1451.4 571.7 L1451.9 572.2 L1452.4 571.8 L1453 572.5 L1453.5 570.5 L1454 573.9 L1454.5 574.8 L1455 573.3 L1455.5 570.8 L1456 572.8 L1456.5 575.4 L1457 568.2 L1457.5 573.4 L1458 572.3 L1458.5 571.2 L1459 571.5 L1459.5 572.3 L1460 574.3 L1460.5 571.3 L1461 573.5 L1461.5 572.3 L1462 571 L1462.5 572.6 L1463 574.6 L1463.5 572.9 L1464.1 571.2 L1464.6 571 L1465.1 573.9 L1465.6 572 L1466.1 571.6 L1466.6 570.5 L1467.1 571.5 L1467.6 571.8 L1468.1 572.5 L1468.6 571.4 L1469.1 570.9 L1469.6 572.3 L1470.1 572.5 L1470.6 569.6 L1471.1 572.1 L1471.6 573.2 L1472.1 571.1 L1472.6 573.8 L1473.1 573.6 L1473.6 570.7 L1474.1 572 L1474.6 570.9 L1475.2 570.9 L1475.7 573.1 L1476.2 571.3 L1476.7 572.6 L1477.2 571.7 L1477.7 571.7 L1478.2 572.2 L1478.7 573.9 L1479.2 571.6 L1479.7 572 L1480.2 571.3 L1480.7 573.6" fill="none" stroke="#8ab8ff" stroke-width="1.15" stroke-linejoin="round" />
<rect x="967.2" y="700" width="12" height="3.6" rx="1" fill="#73BF69"/>
<text transform="translate(985.6 705.4) scale(1 1.09)" font-size="9.75" text-anchor="start" fill="#c4c4d2" font-weight="normal" stroke="#c4c4d2" stroke-width="0.22">D 0.1*VRef</text>
<text transform="translate(1041.3 705.4) scale(1 1.09)" font-size="9.75" text-anchor="start" fill="#c4c4d2" font-weight="normal" stroke="#c4c4d2" stroke-width="0.22">Mean: -0.56</text>
<rect x="1101.6" y="700" width="12" height="3.6" rx="1" fill="#eccb12"/>
<text transform="translate(1119.3 705.4) scale(1 1.09)" font-size="9.75" text-anchor="start" fill="#c4c4d2" font-weight="normal" stroke="#c4c4d2" stroke-width="0.22">D 0.9*VRef</text>
<text transform="translate(1174.9 705.4) scale(1 1.09)" font-size="9.75" text-anchor="start" fill="#c4c4d2" font-weight="normal" stroke="#c4c4d2" stroke-width="0.22">Mean: -26</text>
<rect x="1226.7" y="700" width="12" height="3.6" rx="1" fill="#8ab8ff"/>
<text transform="translate(1245.7 705.4) scale(1 1.09)" font-size="9.75" text-anchor="start" fill="#c4c4d2" font-weight="normal" stroke="#c4c4d2" stroke-width="0.22">D 2.048V</text>
<text transform="translate(1293 705.4) scale(1 1.09)" font-size="9.75" text-anchor="start" fill="#c4c4d2" font-weight="normal" stroke="#c4c4d2" stroke-width="0.22">Mean: -0.53</text>
<rect x="1352.7" y="700" width="12" height="3.6" rx="1" fill="#f2780f"/>
<text transform="translate(1371.6 705.4) scale(1 1.09)" font-size="9.75" text-anchor="start" fill="#c4c4d2" font-weight="normal" stroke="#c4c4d2" stroke-width="0.22">D GND</text>
<text transform="translate(1407.7 705.4) scale(1 1.09)" font-size="9.75" text-anchor="start" fill="#c4c4d2" font-weight="normal" stroke="#c4c4d2" stroke-width="0.22">Mean: 41.3</text>
<rect x="967.2" y="717.7" width="12" height="3.6" rx="1" fill="#f2495c"/>
<text transform="translate(985.6 723.1) scale(1 1.09)" font-size="9.75" text-anchor="start" fill="#c4c4d2" font-weight="normal" stroke="#c4c4d2" stroke-width="0.22">D VRef</text>
<text transform="translate(1022.9 723.1) scale(1 1.09)" font-size="9.75" text-anchor="start" fill="#c4c4d2" font-weight="normal" stroke="#c4c4d2" stroke-width="0.22">Mean: -9.2</text>
</g>
</svg>
</body></html>
